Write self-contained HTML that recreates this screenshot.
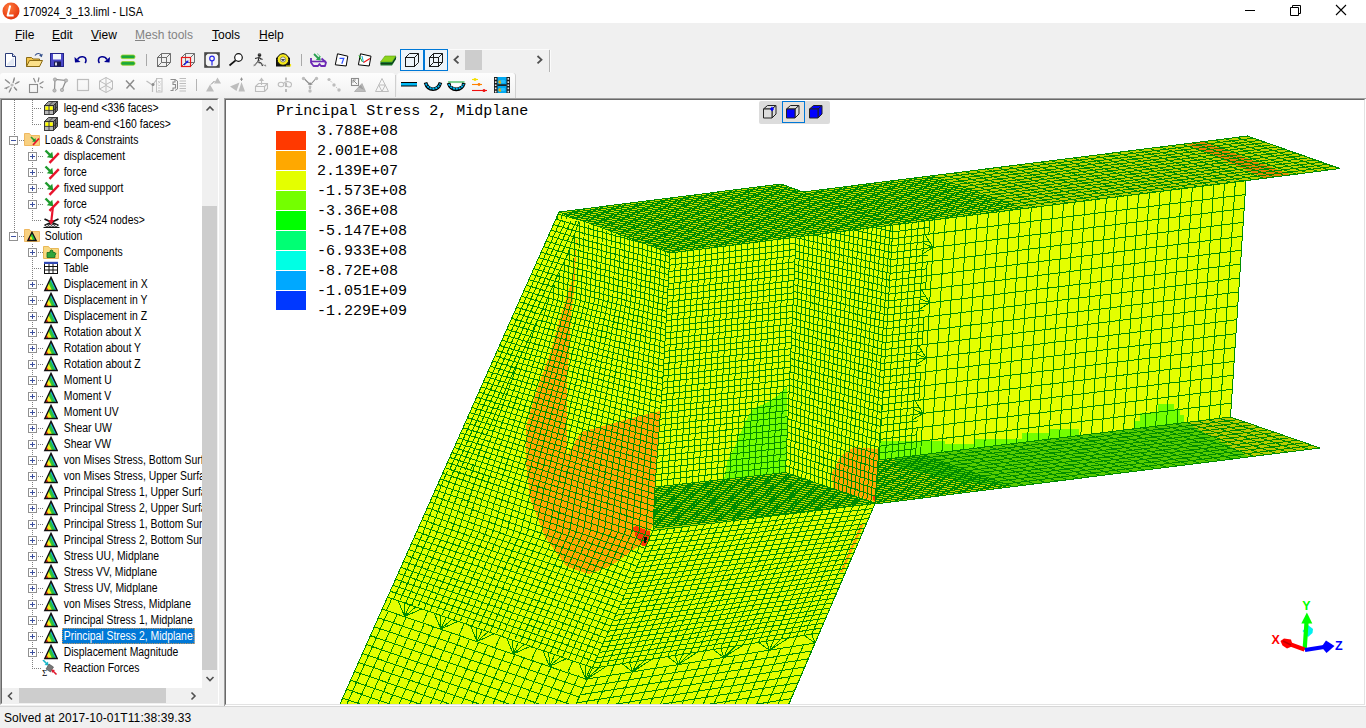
<!DOCTYPE html>
<html><head><meta charset="utf-8"><title>LISA</title><style>
*{box-sizing:border-box}
html,body{margin:0;padding:0;width:1366px;height:728px;overflow:hidden;background:#f0f0f0;font-family:"Liberation Sans",sans-serif;font-size:12px;color:#000}
.abs{position:absolute}
#title{left:0;top:0;width:1366px;height:23px;background:#fff}
#title .tt{left:23px;top:5px;font-size:12px;line-height:14px;white-space:pre;transform:scaleX(.913);transform-origin:0 0}
#menu{left:0;top:23px;width:1366px;height:23px;background:#f0f0f0}
#menu span{position:absolute;top:5px;line-height:14px;font-size:12px;white-space:pre}
#menu u{text-decoration:underline;text-underline-offset:1px}
.tree{left:2px;top:100px;width:200px;height:588px;background:#fff;overflow:hidden}
.row{position:absolute;left:0;height:16px;width:260px}
.row .tx{position:absolute;top:1px;line-height:14px;font-size:12px;white-space:pre;transform:scaleX(.867);transform-origin:0 0;padding:0 2px}
.row .tx.sel{background:#0078d7;color:#fff;outline:1px dotted #e8a050;outline-offset:-1px;top:0;line-height:16px;height:16px}
.dotv{position:absolute;width:1px;background-image:linear-gradient(#808080 50%,transparent 50%);background-size:1px 2px}
.doth{position:absolute;height:1px;background-image:linear-gradient(90deg,#808080 50%,transparent 50%);background-size:2px 1px}
.box{position:absolute;width:9px;height:9px;border:1px solid #919191;background:#fff}
.box:before{content:"";position:absolute;left:1px;top:3px;width:5px;height:1px;background:#3c50a0}
.box.plus:after{content:"";position:absolute;left:3px;top:1px;width:1px;height:5px;background:#3c50a0}
#status{left:0;top:707px;width:1366px;height:21px;background:#f0f0f0}
#status span{position:absolute;left:4px;top:4px;line-height:14px;font-size:12px;white-space:pre;letter-spacing:.08px}
</style></head><body>
<div id="title" class="abs"><svg class="abs" style="left:2px;top:2px" width="18" height="18" viewBox="0 0 18 18"><defs><radialGradient id="lg" cx=".4" cy=".3" r=".8"><stop offset="0" stop-color="#ff7a3a"/><stop offset="1" stop-color="#e02a08"/></radialGradient></defs><circle cx="9" cy="9" r="8.5" fill="url(#lg)"/><path d="M8.2 3.5 L5.6 13.6 H11.6" stroke="#fff" stroke-width="2" fill="none" stroke-linejoin="round"/></svg><span class="abs tt">170924_3_13.liml - LISA</span>
<svg class="abs" style="left:1236px;top:0" width="130" height="23" viewBox="0 0 130 23"><path d="M9 10.5 H19" stroke="#000" stroke-width="1"/><path d="M54.5 7.5 H62.5 V15.5 H54.5Z M56.5 7.5 V5.5 H64.5 V13.5 H62.5" stroke="#000" fill="none"/><path d="M100 5 L110 15 M110 5 L100 15" stroke="#000" stroke-width="1.1"/></svg></div>
<div id="menu" class="abs"><span style="left:15px"><u>F</u>ile</span><span style="left:52px"><u>E</u>dit</span><span style="left:91px"><u>V</u>iew</span><span style="left:135px;color:#838383"><u>M</u>esh tools</span><span style="left:212px"><u>T</u>ools</span><span style="left:259px"><u>H</u>elp</span></div>
<div class="abs" style="left:0px;top:73px;width:395px;height:25px;border-radius:3px 3px 0 0;background:linear-gradient(#fdfdfd,#f6f6f6 60%,#efefef)"></div>
<div class="abs" style="left:397px;top:73px;width:119px;height:25px;border-radius:3px 3px 0 0;background:linear-gradient(#fdfdfd,#f6f6f6 60%,#efefef);border-right:1px solid #d0d0d0"></div>
<div class="abs" style="left:395px;top:75px;width:1px;height:22px;background:#d0d0d0"></div>
<div class="abs" style="left:448px;top:49px;width:101px;height:1px;background:#fbfbfb"></div>
<div class="abs" style="left:549px;top:50px;width:1px;height:22px;background:#b4b4b4"></div><div class="abs" style="left:550px;top:50px;width:1px;height:22px;background:#fbfbfb"></div>
<div class="abs" style="left:465px;top:50px;width:17px;height:20px;background:#cdcdcd"></div>
<div class="abs" style="left:400px;top:49px;width:24px;height:22px;border:1px solid #0078d7;background:#eef4fa"></div>
<div class="abs" style="left:424px;top:49px;width:24px;height:22px;border:1px solid #0078d7;background:#eef4fa"></div>
<svg class="abs" style="left:0;top:46px" width="600" height="52" viewBox="0 46 600 52"><path d="M5.5 53.5 H12.5 L15.5 56.5 V66.5 H5.5Z" fill="#fff" stroke="#2a3c78"/><path d="M12.5 53.5 V56.5 H15.5" fill="#dfe6f5" stroke="#2a3c78"/><path d="M7 64 L14 57 V65.5 H7Z" fill="#d6def0" opacity=".7"/><path d="M26.5 57.5 H31.5 L33 59 H39.5 V66.5 H26.5Z" fill="#f3c44a" stroke="#8a6a14"/><path d="M26.5 66.5 L29.5 60.5 H42.5 L39.5 66.5Z" fill="#fbe08a" stroke="#8a6a14"/><path d="M35 55.5 C37 52.5 40.5 53 41.5 56" fill="none" stroke="#34508c" stroke-width="1.1"/><path d="M42.8 53.8 L41.8 57.3 L39 55.6Z" fill="#34508c"/><rect x="50.5" y="53.5" width="13" height="13" fill="#4a48c8" stroke="#23238a"/><rect x="53" y="54" width="8" height="5.5" fill="#f4f6fc"/><rect x="54" y="61.5" width="7" height="5" fill="#1c1c50"/><rect x="55" y="62.5" width="2" height="3" fill="#d8d8e8"/><path d="M77.5 59.5 C80 55.5 86 56 86 60.5 C86 62 85.5 62.5 85 63" fill="none" stroke="#000090" stroke-width="1.6"/><path d="M74.5 57 L75 62.5 L80.5 62Z" fill="#000090"/><path d="M107 59.5 C104.500 55.5 98.500 56 98.500 60.5 C98.500 62 99 62.5 99.500 63" fill="none" stroke="#000090" stroke-width="1.6"/><path d="M110 57 L109.500 62.5 L104 62Z" fill="#000090"/><rect x="121" y="55" width="14" height="3.6" rx="1.6" fill="#19a83c" stroke="#9ad21e" stroke-width=".8"/><rect x="121" y="61.600" width="14" height="3.6" rx="1.6" fill="#19a83c" stroke="#9ad21e" stroke-width=".8"/><path d="M146.5 54 V66 M301.5 54 V66" stroke="#a8a8a8"/><g fill="none" stroke="#6e6e6e" stroke-width="1"><rect x="157.5" y="57.5" width="9" height="9"/><path d="M157.5 57.5 L161.5 53.5 H170.5 V62.5 L166.5 66.5 M166.5 57.5 L170.5 53.5 M157.5 66.5 L161.5 62.5 H170.5 M161.5 62.5 V53.5"/></g><g fill="none" stroke="#6e6e6e" stroke-width="1"><rect x="181.5" y="57.5" width="9" height="9"/><path d="M181.5 57.5 L185.5 53.5 H194.5 V62.5 L190.5 66.5 M190.5 57.5 L194.5 53.5 M181.5 66.5 L185.5 62.5 H194.5 M185.5 62.5 V53.5"/></g><rect x="181.500" y="57.5" width="9" height="9" fill="none" stroke="#e81818" stroke-width="1.2"/><path d="M184 65 L187.500 61.5" stroke="#1818e8" stroke-width="1.2"/><path d="M188.500 60.5 L185.800 61 L188 63.2Z" fill="#1818e8"/><rect x="205" y="53" width="14" height="14" fill="#f4f4f4" stroke="#484848" stroke-width="1.6"/><path d="M205 53 l3.5 0 l-3.5 3.500z M219 53 l-3.500 0 l3.500 3.500z M205 67 l3.500 0 l-3.500 -3.500z M219 67 l-3.500 0 l3.500 -3.500z" fill="#484848"/><circle cx="212" cy="58.500" r="2.300" fill="none" stroke="#2828e8" stroke-width="1.200"/><path d="M212 61 V65.500" stroke="#2828e8" stroke-width="1.200"/><circle cx="238.500" cy="57.500" r="3.800" fill="#fff" stroke="#111" stroke-width="1.200"/><path d="M235.600 60.400 L229.500 65.500" stroke="#111" stroke-width="1.700"/><g fill="none" stroke="#222" stroke-width="1.100"><circle cx="259.500" cy="55" r="1.300" fill="#222"/><path d="M255 58.500 L259 57.500 L262.500 59.500 M259 57.500 L258 61.500 L261.500 63.500 L262.500 66 M258 61.500 L254.500 65.500"/></g><path d="M257 62 L266 66 M254 66 L262 58" stroke="#8c8c8c" stroke-width=".9"/><path d="M259.500 53 l1.200 1.500 h-2.400z M266.500 66.300 l-2.200 -.2 l1 -1.800z M253.500 66.500 l.3 -2.200 l1.700 1.300z" fill="#8c8c8c"/><path d="M276 66.500 V58 L283 53 L290 58 V66.500Z" fill="#111"/><circle cx="283" cy="59.500" r="5.800" fill="#f4e81c" stroke="#111" stroke-width="1"/><circle cx="283" cy="59.500" r="2.600" fill="#e8e8e8" stroke="#555" stroke-width=".6"/><path d="M280.800 59.200 h4.400 l-2.200 1.800z" fill="#111"/><path d="M286 66 H290.500 V64" stroke="#f4e81c" stroke-width="1.200" fill="none"/><path d="M311 58 V62.500 L313.500 66 H318 L319.500 64 L321 66 H325 L326 62.500 L321.500 58.500" fill="none" stroke="#6c28b4" stroke-width="1.800" stroke-linejoin="round"/><path d="M311 61.500 H326" stroke="#6c28b4" stroke-width="1.600"/><path d="M314 54 L318.500 58.500" stroke="#28a050" stroke-width="1.800"/><path d="M320.800 60.500 L315.800 59.700 L319.800 55.800Z" fill="#28a050"/><path d="M317 53.500 L321 57" stroke="#7ccf9a" stroke-width="1"/><path d="M337.500 53.800 L347.800 56.200 L346.200 66 L335.300 64.800Z" fill="#fff" stroke="#000" stroke-width="1"/><path d="M339.500 58.300 H343.800 L341.800 63.800" fill="none" stroke="#3050ff" stroke-width="1.200"/><path d="M360.500 53.800 L371 56.200 L369.200 66 L358.400 64.800Z" fill="#fff" stroke="#000" stroke-width="1"/><path d="M359 55.500 L362.500 62" stroke="#10a010" stroke-width="1"/><path d="M362 56 L363.500 62.500" stroke="#10b0e0" stroke-width="1"/><path d="M363.500 62.500 L370 58.500" stroke="#f01818" stroke-width="1.100"/><path d="M380.500 62 L385 56 H396 L392 62Z" fill="#8cd41c" stroke="#5c9a10" stroke-width=".6"/><path d="M380.500 62 H392 L396 56 V59.300 L392 65.500 H380.500Z" fill="#1c7a30"/><path d="M380.500 63.700 H392 L396 57.700" stroke="#0c2c10" stroke-width=".9" fill="none"/><g fill="none" stroke="#1a1a1a" stroke-width="1"><rect x="405.500" y="57.500" width="9" height="9"/><path d="M405.500 57.500 L409.500 53.500 H418.500 V62.500 L414.500 66.500 M414.500 57.500 L418.500 53.500"/></g><g fill="none" stroke="#1a1a1a" stroke-width="1"><rect x="429.5" y="57.5" width="9" height="9"/><path d="M429.5 57.5 L433.5 53.5 H442.5 V62.5 L438.5 66.5 M438.5 57.5 L442.5 53.5 M429.5 66.5 L433.5 62.5 H442.5 M433.5 62.5 V53.5"/></g><path d="M458.500 56 L454.500 59.700 L458.500 63.400" fill="none" stroke="#505050" stroke-width="1.800"/><path d="M537.500 56 L541.500 59.700 L537.500 63.400" fill="none" stroke="#505050" stroke-width="1.800"/><g stroke="#8c8c8c" stroke-width="1.200" fill="none"><path d="M5 79.500 L10 83.500 M14.500 77.500 L13 83 M19.500 81.500 L15 84 M4.500 88.500 L9.500 86.500 M9 92.500 L11.500 87.500 M17 90.500 L14 87"/></g><circle cx="12" cy="85" r="1.600" fill="#bdbdbd"/><path d="M6.500 80.700 l2.200 .2 l-1.200 1.700z M19 82 l-1.800 1.500 l-.6 -1.800z M5.500 88 l2 -.1 l-.8 1.500z M9.500 91.500 l.2 -2 l1.400 1z M16.500 90 l-1.800 -.6 l1.400 -1.200z M14.300 78.500 l.4 2 l-1.700 -.6z" fill="#8c8c8c"/><rect x="29.500" y="84.500" width="8" height="8" fill="none" stroke="#8c8c8c" stroke-width="1.100"/><g stroke="#8c8c8c" stroke-width="1.200"><path d="M33.500 78 L35.500 82.500 M39 77.500 L38 82 M43.500 81.500 L39.500 84 M43 88 L40 86.500"/></g><path d="M54.500 90.500 L55 79.500 L66 80.500 L62 90" fill="none" stroke="#8c8c8c" stroke-width="1.200"/><g fill="#bdbdbd" stroke="#8c8c8c" stroke-width=".5"><circle cx="54.500" cy="90.500" r="1.700"/><circle cx="55" cy="79.500" r="1.700"/><circle cx="66" cy="80.500" r="1.700"/><circle cx="62" cy="90" r="1.700"/></g><rect x="77.500" y="79.500" width="11" height="11" fill="none" stroke="#bdbdbd" stroke-width="1.200"/><g fill="none" stroke="#bdbdbd" stroke-width="1"><path d="M106 77.500 L112.500 81 V89 L106 92.500 L99.500 89 V81Z M99.500 81 L106 84.500 L112.500 81 M106 84.500 V92.500 M106 77.500 V85 M99.500 89 L106 85.500 L112.500 89"/></g><path d="M126 80.500 L134.500 89.500 M134 80 L126.500 88.500" stroke="#8c8c8c" stroke-width="1.500" fill="none"/><g fill="none" stroke="#bdbdbd" stroke-width="1.200"><path d="M146.500 81 L152.500 85 V92 M157 79 L153 84.500"/><rect x="156.500" y="78.500" width="5.500" height="13.500" stroke-width=".9"/><path d="M158 81 l2.500 2.500 m0 -2.500 l-2.500 2.500 M158 84.500 l1.300 1.500 l1.300 -1.500 M158 88 h2.500 M158 90.500 h2.500" stroke-width=".7"/></g><circle cx="153" cy="84.500" r="1.500" fill="#8c8c8c"/><path d="M170.500 79.500 H175 V82 H173 V84.500 H175.500 V88 H173 V90.500 H170.500" fill="none" stroke="#8c8c8c" stroke-width="1.100"/><path d="M175 79.500 L177.500 81 V89 L175 90.500" fill="none" stroke="#8c8c8c" stroke-width="1"/><path d="M179.500 78.500 H186 M179.500 81 H186 M179.500 83.500 H186 M179.500 86 H186 M179.500 88.500 H186 M179.500 91 H186" stroke="#bdbdbd" stroke-width="1"/><path d="M196.500 79 V91" stroke="#b4b4b4"/><path d="M206 91.500 L210 84.500 L214 91.500Z M214 83.500 L217.500 77.500 L221 83.500Z" fill="#bdbdbd"/><path d="M211 84.500 L214.500 81" stroke="#8c8c8c" stroke-width="1"/><path d="M230 86.500 L239.500 82.500 L236.500 91Z M238.500 91.500 L241.500 82 L245 91.500Z" fill="#bdbdbd"/><path d="M241.500 77.500 V81 M240 79.200 H243" stroke="#8c8c8c" stroke-width=".9"/><g fill="none" stroke="#bdbdbd" stroke-width="1.100"><path d="M255.500 86.500 H264.500 V91.500 H255.500Z M255.500 86.500 L258.500 83.500 H267.500 V88.500 L264.500 91.500 M264.500 86.500 L267.500 83.500"/><path d="M261.500 85 V79.500"/></g><path d="M259 81 L261.500 77.500 L264 81Z" fill="#bdbdbd"/><g fill="none" stroke="#bdbdbd" stroke-width="1.100"><ellipse cx="281" cy="84.500" rx="2.800" ry="2.200"/><path d="M283.500 83.500 C286 80.500 291.500 81.500 291.500 84.500 C291.500 87.500 288 87.500 287 86"/><path d="M286 77.500 V80.500 M286 83 V87 M286 89 V92" stroke="#8c8c8c"/></g><g stroke="#8c8c8c" stroke-width="1.100" fill="none"><path d="M304.500 79 L309 83.500 M315.500 79 L311.500 83.500 M310 86 V89"/></g><g fill="#bdbdbd"><circle cx="303.500" cy="78.500" r="1.700"/><circle cx="316.500" cy="78.500" r="1.700"/><circle cx="310" cy="91" r="1.700"/><circle cx="310" cy="87" r="1.400"/></g><path d="M310.500 85 l-2.800 -.4 l2.300 -2.300z M310 85 l.4 -2.800 l2.300 2.300z" fill="#8c8c8c"/><g fill="#bdbdbd"><circle cx="329" cy="79.500" r="1.600"/><circle cx="334" cy="85" r="1.700"/><circle cx="339" cy="90" r="1.700"/></g><path d="M330.500 81 l1.500 1.500 M336 87 l1.300 1.300" stroke="#bdbdbd" stroke-width=".8"/><rect x="351.500" y="78.500" width="7" height="7" fill="none" stroke="#8c8c8c" stroke-width="1.100"/><path d="M353 80 L357 84 M353 80 h2.800 M353 80 v2.800" stroke="#8c8c8c" stroke-width="1" fill="none"/><path d="M354.500 91.500 L362 83.500 L365.500 91.500Z" fill="#bdbdbd" stroke="#8c8c8c" stroke-width=".5"/><path d="M358 87 l3 -2 l3 5z" fill="#8c8c8c" opacity=".6"/><path d="M375.500 91.500 L382 78.500 L388.500 91.500Z M378.700 85 H385.300 L382 91.500Z" fill="none" stroke="#bdbdbd" stroke-width="1"/><rect x="401" y="82.500" width="16" height="3.500" fill="#00b8f4"/><path d="M401 82.500 H417 M401 86 H417" stroke="#000" stroke-width="1"/><path d="M425.500 82.500 C428 91.500 438 91.500 440.500 82.500" fill="none" stroke="#000" stroke-width="3.600"/><path d="M425.800 83.500 C428.500 90.500 437.500 90.500 440.200 83.500" fill="none" stroke="#00b8f4" stroke-width="1.800" stroke-dasharray="2.200 .7"/><path d="M448.500 83 C451 91.500 461.500 91.500 464 83" fill="none" stroke="#000" stroke-width="3.600"/><path d="M448.800 84 C451.500 90.500 461 90.500 463.700 84" fill="none" stroke="#00b8f4" stroke-width="1.800" stroke-dasharray="2.200 .7"/><path d="M448 82 H464.500" stroke="#20b040" stroke-width="1.100"/><path d="M451 85 H461.500" stroke="#fff" stroke-width="1.600"/><path d="M472 79.500 H478" stroke="#f4e000" stroke-width="1.100"/><path d="M475 78 v3 M473.500 79.500 h3" stroke="#f4e000" stroke-width="1.500"/><path d="M472 84.500 H482" stroke="#ff8000" stroke-width="1.100"/><circle cx="479" cy="84.500" r="1.400" fill="#ff8000"/><path d="M472 90.500 H487" stroke="#f01010" stroke-width="1.100"/><circle cx="484" cy="90.500" r="1.500" fill="#f01010"/><rect x="494" y="77" width="16" height="16" fill="#1a1a1a"/><rect x="497.500" y="77" width="9" height="16" fill="#00a8f0"/><path d="M495.700 78 v15 M508.300 78 v15" stroke="#e8e8e8" stroke-width="1.600" stroke-dasharray="1.700 1.500"/><rect x="497.500" y="84.300" width="9" height="1.600" fill="#1a1a1a"/><circle cx="500" cy="82" r="1.700" fill="#f4b000"/><circle cx="500" cy="90" r="1.700" fill="#f4b000"/><ellipse cx="503" cy="81.500" rx="2.500" ry="1.800" fill="#28c0ff"/><ellipse cx="503" cy="89.500" rx="2.500" ry="1.800" fill="#28c0ff"/></svg>
<div class="abs" style="left:0;top:98px;width:219px;height:607px;background:#f0f0f0;border-top:1px solid #a0a0a0;border-left:1px solid #a0a0a0;border-bottom:1px solid #fff;border-right:1px solid #fff"></div>
<div class="abs" style="left:1px;top:99px;width:217px;height:605px;background:#fff;border-top:1px solid #696969;border-left:1px solid #696969;border-bottom:1px solid #e3e3e3;border-right:1px solid #e3e3e3"></div>
<div class="abs tree"><div class="dotv" style="left:12px;top:0;height:36px"></div>
<div class="dotv" style="left:12px;top:45px;height:87px"></div>
<div class="dotv" style="left:30px;top:0;height:24px"></div>
<div class="dotv" style="left:30px;top:48px;height:72px"></div>
<div class="dotv" style="left:30px;top:144px;height:424px"></div>
<div class="row" style="top:0px"><div class="doth" style="left:30px;top:8px;width:10px"></div><svg class="abs" style="left:40px;top:0" width="16" height="16" viewBox="0 0 16 16"><path d="M2.500 5.500 L6.500 1.500 H15.500 L11.500 5.500Z" fill="#9a9a9a" stroke="#2a2a2a" stroke-width=".9"/><path d="M11.500 5.500 L15.500 1.500 V10.500 L11.500 14.500Z" fill="#6e6e6e" stroke="#2a2a2a" stroke-width=".9"/><rect x="2.500" y="5.500" width="9" height="9" fill="#b8b8b8" stroke="#2a2a2a" stroke-width=".9"/><rect x="3.400" y="6.400" width="3.300" height="3.600" fill="#ffff00"/><rect x="7.400" y="6.400" width="3.300" height="3.600" fill="#ffff00"/><path d="M7 5.500V14.500M2.500 10.400H11.500M11 1.500 L7 5.500M11.500 10.400 L15.500 6.400M13.500 3.500V12.500" stroke="#2a2a2a" stroke-width=".8" fill="none"/></svg><span class="tx" style="left:60px">leg-end &lt;336 faces&gt;</span></div>
<div class="row" style="top:16px"><div class="doth" style="left:30px;top:8px;width:10px"></div><svg class="abs" style="left:40px;top:0" width="16" height="16" viewBox="0 0 16 16"><path d="M2.500 5.500 L6.500 1.500 H15.500 L11.500 5.500Z" fill="#9a9a9a" stroke="#2a2a2a" stroke-width=".9"/><path d="M11.500 5.500 L15.500 1.500 V10.500 L11.500 14.500Z" fill="#6e6e6e" stroke="#2a2a2a" stroke-width=".9"/><rect x="2.500" y="5.500" width="9" height="9" fill="#b8b8b8" stroke="#2a2a2a" stroke-width=".9"/><rect x="3.400" y="6.400" width="3.300" height="3.600" fill="#ffff00"/><rect x="7.400" y="6.400" width="3.300" height="3.600" fill="#ffff00"/><path d="M7 5.500V14.500M2.500 10.400H11.500M11 1.500 L7 5.500M11.500 10.400 L15.500 6.400M13.500 3.500V12.500" stroke="#2a2a2a" stroke-width=".8" fill="none"/></svg><span class="tx" style="left:60px">beam-end &lt;160 faces&gt;</span></div>
<div class="row" style="top:32px"><div class="doth" style="left:17px;top:8px;width:5px"></div><div class="box minus" style="left:7px;top:4px"></div><svg class="abs" style="left:22px;top:0" width="16" height="16" viewBox="0 0 16 16"><path d="M.5 1.500 H5.500 L7 3.500 H15.500 V13.500 H.5Z" fill="#f8d080" stroke="#efb860"/><path d="M7 5 L10.500 8.500" stroke="#1e9a2c" stroke-width="1.600"/><path d="M12 10 L8 9.500 L11.500 6Z" fill="#1e9a2c"/><path d="M9 13 L15 6.500" stroke="#e8142c" stroke-width="1.800"/></svg><span class="tx" style="left:41px">Loads &amp; Constraints</span></div>
<div class="row" style="top:48px"><div class="doth" style="left:36px;top:8px;width:5px"></div><div class="box plus" style="left:26px;top:4px"></div><svg class="abs" style="left:40px;top:0" width="20" height="16" viewBox="0 0 20 16"><path d="M3.500 2.500 L8.500 7.500" stroke="#1e9a2c" stroke-width="2.400"/><path d="M11.200 10.200 L4.800 9.300 L10.300 3.800Z" fill="#1e9a2c"/><path d="M7.500 14.800 L16.800 5.200" stroke="#e8142c" stroke-width="2.400"/></svg><span class="tx" style="left:60px">displacement</span></div>
<div class="row" style="top:64px"><div class="doth" style="left:36px;top:8px;width:5px"></div><div class="box plus" style="left:26px;top:4px"></div><svg class="abs" style="left:40px;top:0" width="20" height="16" viewBox="0 0 20 16"><path d="M3.500 2.500 L8.500 7.500" stroke="#1e9a2c" stroke-width="2.400"/><path d="M11.200 10.200 L4.800 9.300 L10.300 3.800Z" fill="#1e9a2c"/><path d="M7.500 14.800 L16.800 5.200" stroke="#e8142c" stroke-width="2.400"/></svg><span class="tx" style="left:60px">force</span></div>
<div class="row" style="top:80px"><div class="doth" style="left:36px;top:8px;width:5px"></div><div class="box plus" style="left:26px;top:4px"></div><svg class="abs" style="left:40px;top:0" width="20" height="16" viewBox="0 0 20 16"><path d="M3.500 2.500 L8.500 7.500" stroke="#1e9a2c" stroke-width="2.400"/><path d="M11.200 10.200 L4.800 9.300 L10.300 3.800Z" fill="#1e9a2c"/><path d="M7.500 14.800 L16.800 5.200" stroke="#e8142c" stroke-width="2.400"/></svg><span class="tx" style="left:60px">fixed support</span></div>
<div class="row" style="top:96px"><div class="doth" style="left:36px;top:8px;width:5px"></div><div class="box plus" style="left:26px;top:4px"></div><svg class="abs" style="left:40px;top:0" width="20" height="16" viewBox="0 0 20 16"><path d="M3.500 2.500 L8.500 7.500" stroke="#1e9a2c" stroke-width="2.400"/><path d="M11.200 10.200 L4.800 9.300 L10.300 3.800Z" fill="#1e9a2c"/><path d="M7.500 14.800 L16.800 5.200" stroke="#e8142c" stroke-width="2.400"/></svg><span class="tx" style="left:60px">force</span></div>
<div class="row" style="top:112px"><div class="doth" style="left:30px;top:8px;width:10px"></div><svg class="abs" style="left:40px;top:0;overflow:visible" width="20" height="16" viewBox="0 0 20 16"><path d="M2.500 7 L16.500 13.500 M16.500 7 L2.500 13.500" stroke="#111" stroke-width="1.800"/><path d="M1.500 15.500 H17.500" stroke="#111" stroke-width="1"/><g fill="#fff" stroke="#111" stroke-width=".8"><circle cx="5" cy="13.600" r="1.300"/><circle cx="8" cy="13.600" r="1.300"/><circle cx="11" cy="13.600" r="1.300"/><circle cx="14" cy="13.600" r="1.300"/></g><path d="M10.800 -4 L9.300 9.500" stroke="#e8142c" stroke-width="2.200"/><path d="M6.300 8 H12.300 L9 13Z" fill="#e8142c"/></svg><span class="tx" style="left:60px">roty &lt;524 nodes&gt;</span></div>
<div class="row" style="top:128px"><div class="doth" style="left:17px;top:8px;width:5px"></div><div class="box minus" style="left:7px;top:4px"></div><svg class="abs" style="left:22px;top:0" width="16" height="16" viewBox="0 0 16 16"><path d="M.5 1.500 H5.500 L7 3.500 H15.500 V13.500 H.5Z" fill="#f8d080" stroke="#efb860"/><defs><linearGradient id="sg8" gradientUnits="userSpaceOnUse" x1="4.500" y1="12" x2="10.500" y2="9.200"><stop offset="0" stop-color="#f02848"/><stop offset=".25" stop-color="#f03020"/><stop offset=".35" stop-color="#f0f020"/><stop offset=".55" stop-color="#f0f020"/><stop offset=".65" stop-color="#30c838"/><stop offset=".85" stop-color="#28c040"/><stop offset="1" stop-color="#2090e8"/></linearGradient></defs><path d="M8 4.300 L12.200 12.500 H3.800Z" fill="url(#sg8)" stroke="#111" stroke-width="1.300"/></svg><span class="tx" style="left:41px">Solution</span></div>
<div class="row" style="top:144px"><div class="doth" style="left:36px;top:8px;width:5px"></div><div class="box plus" style="left:26px;top:4px"></div><svg class="abs" style="left:40px;top:0" width="20" height="16" viewBox="0 0 20 16"><path d="M1.500 2.500 H6.500 L8 4.500 H16.500 V14.500 H1.500Z" fill="#f8d880" stroke="#e8b858"/><path d="M5 8.500 H8 V6.800 Q9.500 5.200 11 6.800 V8.500 H13 Q15 10 13 11 V13.500 H5Z" fill="#2fa53c" stroke="#176b20" stroke-width=".8"/></svg><span class="tx" style="left:60px">Components</span></div>
<div class="row" style="top:160px"><div class="doth" style="left:30px;top:8px;width:10px"></div><svg class="abs" style="left:40px;top:0" width="20" height="16" viewBox="0 0 20 16"><rect x="2.500" y="2.500" width="13" height="11" fill="#fff" stroke="#111"/><rect x="2" y="1.800" width="14" height="2.200" fill="#3048b4"/><path d="M2.500 6.500 H15.500 M2.500 10 H15.500 M7 4 V13.500 M11 4 V13.500" stroke="#111" fill="none"/></svg><span class="tx" style="left:60px">Table</span></div>
<div class="row" style="top:176px"><div class="doth" style="left:36px;top:8px;width:5px"></div><div class="box plus" style="left:26px;top:4px"></div><svg class="abs" style="left:40px;top:0" width="16" height="16" viewBox="0 0 16 16"><defs><linearGradient id="tg11" gradientUnits="userSpaceOnUse" x1="3.500" y1="14" x2="12.500" y2="9.700"><stop offset="0" stop-color="#f02848"/><stop offset=".2" stop-color="#f03020"/><stop offset=".3" stop-color="#f8e818"/><stop offset=".52" stop-color="#f0f020"/><stop offset=".62" stop-color="#30c838"/><stop offset=".82" stop-color="#28c040"/><stop offset=".92" stop-color="#20b0e0"/><stop offset="1" stop-color="#2080e8"/></linearGradient></defs><path d="M9 1.400 L15.200 14.500 H2.800Z" fill="url(#tg11)" stroke="#101010" stroke-width="1.400" stroke-linejoin="miter"/></svg><span class="tx" style="left:60px">Displacement in X</span></div>
<div class="row" style="top:192px"><div class="doth" style="left:36px;top:8px;width:5px"></div><div class="box plus" style="left:26px;top:4px"></div><svg class="abs" style="left:40px;top:0" width="16" height="16" viewBox="0 0 16 16"><defs><linearGradient id="tg12" gradientUnits="userSpaceOnUse" x1="3.500" y1="14" x2="12.500" y2="9.700"><stop offset="0" stop-color="#f02848"/><stop offset=".2" stop-color="#f03020"/><stop offset=".3" stop-color="#f8e818"/><stop offset=".52" stop-color="#f0f020"/><stop offset=".62" stop-color="#30c838"/><stop offset=".82" stop-color="#28c040"/><stop offset=".92" stop-color="#20b0e0"/><stop offset="1" stop-color="#2080e8"/></linearGradient></defs><path d="M9 1.400 L15.200 14.500 H2.800Z" fill="url(#tg12)" stroke="#101010" stroke-width="1.400" stroke-linejoin="miter"/></svg><span class="tx" style="left:60px">Displacement in Y</span></div>
<div class="row" style="top:208px"><div class="doth" style="left:36px;top:8px;width:5px"></div><div class="box plus" style="left:26px;top:4px"></div><svg class="abs" style="left:40px;top:0" width="16" height="16" viewBox="0 0 16 16"><defs><linearGradient id="tg13" gradientUnits="userSpaceOnUse" x1="3.500" y1="14" x2="12.500" y2="9.700"><stop offset="0" stop-color="#f02848"/><stop offset=".2" stop-color="#f03020"/><stop offset=".3" stop-color="#f8e818"/><stop offset=".52" stop-color="#f0f020"/><stop offset=".62" stop-color="#30c838"/><stop offset=".82" stop-color="#28c040"/><stop offset=".92" stop-color="#20b0e0"/><stop offset="1" stop-color="#2080e8"/></linearGradient></defs><path d="M9 1.400 L15.200 14.500 H2.800Z" fill="url(#tg13)" stroke="#101010" stroke-width="1.400" stroke-linejoin="miter"/></svg><span class="tx" style="left:60px">Displacement in Z</span></div>
<div class="row" style="top:224px"><div class="doth" style="left:36px;top:8px;width:5px"></div><div class="box plus" style="left:26px;top:4px"></div><svg class="abs" style="left:40px;top:0" width="16" height="16" viewBox="0 0 16 16"><defs><linearGradient id="tg14" gradientUnits="userSpaceOnUse" x1="3.500" y1="14" x2="12.500" y2="9.700"><stop offset="0" stop-color="#f02848"/><stop offset=".2" stop-color="#f03020"/><stop offset=".3" stop-color="#f8e818"/><stop offset=".52" stop-color="#f0f020"/><stop offset=".62" stop-color="#30c838"/><stop offset=".82" stop-color="#28c040"/><stop offset=".92" stop-color="#20b0e0"/><stop offset="1" stop-color="#2080e8"/></linearGradient></defs><path d="M9 1.400 L15.200 14.500 H2.800Z" fill="url(#tg14)" stroke="#101010" stroke-width="1.400" stroke-linejoin="miter"/></svg><span class="tx" style="left:60px">Rotation about X</span></div>
<div class="row" style="top:240px"><div class="doth" style="left:36px;top:8px;width:5px"></div><div class="box plus" style="left:26px;top:4px"></div><svg class="abs" style="left:40px;top:0" width="16" height="16" viewBox="0 0 16 16"><defs><linearGradient id="tg15" gradientUnits="userSpaceOnUse" x1="3.500" y1="14" x2="12.500" y2="9.700"><stop offset="0" stop-color="#f02848"/><stop offset=".2" stop-color="#f03020"/><stop offset=".3" stop-color="#f8e818"/><stop offset=".52" stop-color="#f0f020"/><stop offset=".62" stop-color="#30c838"/><stop offset=".82" stop-color="#28c040"/><stop offset=".92" stop-color="#20b0e0"/><stop offset="1" stop-color="#2080e8"/></linearGradient></defs><path d="M9 1.400 L15.200 14.500 H2.800Z" fill="url(#tg15)" stroke="#101010" stroke-width="1.400" stroke-linejoin="miter"/></svg><span class="tx" style="left:60px">Rotation about Y</span></div>
<div class="row" style="top:256px"><div class="doth" style="left:36px;top:8px;width:5px"></div><div class="box plus" style="left:26px;top:4px"></div><svg class="abs" style="left:40px;top:0" width="16" height="16" viewBox="0 0 16 16"><defs><linearGradient id="tg16" gradientUnits="userSpaceOnUse" x1="3.500" y1="14" x2="12.500" y2="9.700"><stop offset="0" stop-color="#f02848"/><stop offset=".2" stop-color="#f03020"/><stop offset=".3" stop-color="#f8e818"/><stop offset=".52" stop-color="#f0f020"/><stop offset=".62" stop-color="#30c838"/><stop offset=".82" stop-color="#28c040"/><stop offset=".92" stop-color="#20b0e0"/><stop offset="1" stop-color="#2080e8"/></linearGradient></defs><path d="M9 1.400 L15.200 14.500 H2.800Z" fill="url(#tg16)" stroke="#101010" stroke-width="1.400" stroke-linejoin="miter"/></svg><span class="tx" style="left:60px">Rotation about Z</span></div>
<div class="row" style="top:272px"><div class="doth" style="left:36px;top:8px;width:5px"></div><div class="box plus" style="left:26px;top:4px"></div><svg class="abs" style="left:40px;top:0" width="16" height="16" viewBox="0 0 16 16"><defs><linearGradient id="tg17" gradientUnits="userSpaceOnUse" x1="3.500" y1="14" x2="12.500" y2="9.700"><stop offset="0" stop-color="#f02848"/><stop offset=".2" stop-color="#f03020"/><stop offset=".3" stop-color="#f8e818"/><stop offset=".52" stop-color="#f0f020"/><stop offset=".62" stop-color="#30c838"/><stop offset=".82" stop-color="#28c040"/><stop offset=".92" stop-color="#20b0e0"/><stop offset="1" stop-color="#2080e8"/></linearGradient></defs><path d="M9 1.400 L15.200 14.500 H2.800Z" fill="url(#tg17)" stroke="#101010" stroke-width="1.400" stroke-linejoin="miter"/></svg><span class="tx" style="left:60px">Moment U</span></div>
<div class="row" style="top:288px"><div class="doth" style="left:36px;top:8px;width:5px"></div><div class="box plus" style="left:26px;top:4px"></div><svg class="abs" style="left:40px;top:0" width="16" height="16" viewBox="0 0 16 16"><defs><linearGradient id="tg18" gradientUnits="userSpaceOnUse" x1="3.500" y1="14" x2="12.500" y2="9.700"><stop offset="0" stop-color="#f02848"/><stop offset=".2" stop-color="#f03020"/><stop offset=".3" stop-color="#f8e818"/><stop offset=".52" stop-color="#f0f020"/><stop offset=".62" stop-color="#30c838"/><stop offset=".82" stop-color="#28c040"/><stop offset=".92" stop-color="#20b0e0"/><stop offset="1" stop-color="#2080e8"/></linearGradient></defs><path d="M9 1.400 L15.200 14.500 H2.800Z" fill="url(#tg18)" stroke="#101010" stroke-width="1.400" stroke-linejoin="miter"/></svg><span class="tx" style="left:60px">Moment V</span></div>
<div class="row" style="top:304px"><div class="doth" style="left:36px;top:8px;width:5px"></div><div class="box plus" style="left:26px;top:4px"></div><svg class="abs" style="left:40px;top:0" width="16" height="16" viewBox="0 0 16 16"><defs><linearGradient id="tg19" gradientUnits="userSpaceOnUse" x1="3.500" y1="14" x2="12.500" y2="9.700"><stop offset="0" stop-color="#f02848"/><stop offset=".2" stop-color="#f03020"/><stop offset=".3" stop-color="#f8e818"/><stop offset=".52" stop-color="#f0f020"/><stop offset=".62" stop-color="#30c838"/><stop offset=".82" stop-color="#28c040"/><stop offset=".92" stop-color="#20b0e0"/><stop offset="1" stop-color="#2080e8"/></linearGradient></defs><path d="M9 1.400 L15.200 14.500 H2.800Z" fill="url(#tg19)" stroke="#101010" stroke-width="1.400" stroke-linejoin="miter"/></svg><span class="tx" style="left:60px">Moment UV</span></div>
<div class="row" style="top:320px"><div class="doth" style="left:36px;top:8px;width:5px"></div><div class="box plus" style="left:26px;top:4px"></div><svg class="abs" style="left:40px;top:0" width="16" height="16" viewBox="0 0 16 16"><defs><linearGradient id="tg20" gradientUnits="userSpaceOnUse" x1="3.500" y1="14" x2="12.500" y2="9.700"><stop offset="0" stop-color="#f02848"/><stop offset=".2" stop-color="#f03020"/><stop offset=".3" stop-color="#f8e818"/><stop offset=".52" stop-color="#f0f020"/><stop offset=".62" stop-color="#30c838"/><stop offset=".82" stop-color="#28c040"/><stop offset=".92" stop-color="#20b0e0"/><stop offset="1" stop-color="#2080e8"/></linearGradient></defs><path d="M9 1.400 L15.200 14.500 H2.800Z" fill="url(#tg20)" stroke="#101010" stroke-width="1.400" stroke-linejoin="miter"/></svg><span class="tx" style="left:60px">Shear UW</span></div>
<div class="row" style="top:336px"><div class="doth" style="left:36px;top:8px;width:5px"></div><div class="box plus" style="left:26px;top:4px"></div><svg class="abs" style="left:40px;top:0" width="16" height="16" viewBox="0 0 16 16"><defs><linearGradient id="tg21" gradientUnits="userSpaceOnUse" x1="3.500" y1="14" x2="12.500" y2="9.700"><stop offset="0" stop-color="#f02848"/><stop offset=".2" stop-color="#f03020"/><stop offset=".3" stop-color="#f8e818"/><stop offset=".52" stop-color="#f0f020"/><stop offset=".62" stop-color="#30c838"/><stop offset=".82" stop-color="#28c040"/><stop offset=".92" stop-color="#20b0e0"/><stop offset="1" stop-color="#2080e8"/></linearGradient></defs><path d="M9 1.400 L15.200 14.500 H2.800Z" fill="url(#tg21)" stroke="#101010" stroke-width="1.400" stroke-linejoin="miter"/></svg><span class="tx" style="left:60px">Shear VW</span></div>
<div class="row" style="top:352px"><div class="doth" style="left:36px;top:8px;width:5px"></div><div class="box plus" style="left:26px;top:4px"></div><svg class="abs" style="left:40px;top:0" width="16" height="16" viewBox="0 0 16 16"><defs><linearGradient id="tg22" gradientUnits="userSpaceOnUse" x1="3.500" y1="14" x2="12.500" y2="9.700"><stop offset="0" stop-color="#f02848"/><stop offset=".2" stop-color="#f03020"/><stop offset=".3" stop-color="#f8e818"/><stop offset=".52" stop-color="#f0f020"/><stop offset=".62" stop-color="#30c838"/><stop offset=".82" stop-color="#28c040"/><stop offset=".92" stop-color="#20b0e0"/><stop offset="1" stop-color="#2080e8"/></linearGradient></defs><path d="M9 1.400 L15.200 14.500 H2.800Z" fill="url(#tg22)" stroke="#101010" stroke-width="1.400" stroke-linejoin="miter"/></svg><span class="tx" style="left:60px">von Mises Stress, Bottom Surface</span></div>
<div class="row" style="top:368px"><div class="doth" style="left:36px;top:8px;width:5px"></div><div class="box plus" style="left:26px;top:4px"></div><svg class="abs" style="left:40px;top:0" width="16" height="16" viewBox="0 0 16 16"><defs><linearGradient id="tg23" gradientUnits="userSpaceOnUse" x1="3.500" y1="14" x2="12.500" y2="9.700"><stop offset="0" stop-color="#f02848"/><stop offset=".2" stop-color="#f03020"/><stop offset=".3" stop-color="#f8e818"/><stop offset=".52" stop-color="#f0f020"/><stop offset=".62" stop-color="#30c838"/><stop offset=".82" stop-color="#28c040"/><stop offset=".92" stop-color="#20b0e0"/><stop offset="1" stop-color="#2080e8"/></linearGradient></defs><path d="M9 1.400 L15.200 14.500 H2.800Z" fill="url(#tg23)" stroke="#101010" stroke-width="1.400" stroke-linejoin="miter"/></svg><span class="tx" style="left:60px">von Mises Stress, Upper Surface</span></div>
<div class="row" style="top:384px"><div class="doth" style="left:36px;top:8px;width:5px"></div><div class="box plus" style="left:26px;top:4px"></div><svg class="abs" style="left:40px;top:0" width="16" height="16" viewBox="0 0 16 16"><defs><linearGradient id="tg24" gradientUnits="userSpaceOnUse" x1="3.500" y1="14" x2="12.500" y2="9.700"><stop offset="0" stop-color="#f02848"/><stop offset=".2" stop-color="#f03020"/><stop offset=".3" stop-color="#f8e818"/><stop offset=".52" stop-color="#f0f020"/><stop offset=".62" stop-color="#30c838"/><stop offset=".82" stop-color="#28c040"/><stop offset=".92" stop-color="#20b0e0"/><stop offset="1" stop-color="#2080e8"/></linearGradient></defs><path d="M9 1.400 L15.200 14.500 H2.800Z" fill="url(#tg24)" stroke="#101010" stroke-width="1.400" stroke-linejoin="miter"/></svg><span class="tx" style="left:60px">Principal Stress 1, Upper Surface</span></div>
<div class="row" style="top:400px"><div class="doth" style="left:36px;top:8px;width:5px"></div><div class="box plus" style="left:26px;top:4px"></div><svg class="abs" style="left:40px;top:0" width="16" height="16" viewBox="0 0 16 16"><defs><linearGradient id="tg25" gradientUnits="userSpaceOnUse" x1="3.500" y1="14" x2="12.500" y2="9.700"><stop offset="0" stop-color="#f02848"/><stop offset=".2" stop-color="#f03020"/><stop offset=".3" stop-color="#f8e818"/><stop offset=".52" stop-color="#f0f020"/><stop offset=".62" stop-color="#30c838"/><stop offset=".82" stop-color="#28c040"/><stop offset=".92" stop-color="#20b0e0"/><stop offset="1" stop-color="#2080e8"/></linearGradient></defs><path d="M9 1.400 L15.200 14.500 H2.800Z" fill="url(#tg25)" stroke="#101010" stroke-width="1.400" stroke-linejoin="miter"/></svg><span class="tx" style="left:60px">Principal Stress 2, Upper Surface</span></div>
<div class="row" style="top:416px"><div class="doth" style="left:36px;top:8px;width:5px"></div><div class="box plus" style="left:26px;top:4px"></div><svg class="abs" style="left:40px;top:0" width="16" height="16" viewBox="0 0 16 16"><defs><linearGradient id="tg26" gradientUnits="userSpaceOnUse" x1="3.500" y1="14" x2="12.500" y2="9.700"><stop offset="0" stop-color="#f02848"/><stop offset=".2" stop-color="#f03020"/><stop offset=".3" stop-color="#f8e818"/><stop offset=".52" stop-color="#f0f020"/><stop offset=".62" stop-color="#30c838"/><stop offset=".82" stop-color="#28c040"/><stop offset=".92" stop-color="#20b0e0"/><stop offset="1" stop-color="#2080e8"/></linearGradient></defs><path d="M9 1.400 L15.200 14.500 H2.800Z" fill="url(#tg26)" stroke="#101010" stroke-width="1.400" stroke-linejoin="miter"/></svg><span class="tx" style="left:60px">Principal Stress 1, Bottom Surface</span></div>
<div class="row" style="top:432px"><div class="doth" style="left:36px;top:8px;width:5px"></div><div class="box plus" style="left:26px;top:4px"></div><svg class="abs" style="left:40px;top:0" width="16" height="16" viewBox="0 0 16 16"><defs><linearGradient id="tg27" gradientUnits="userSpaceOnUse" x1="3.500" y1="14" x2="12.500" y2="9.700"><stop offset="0" stop-color="#f02848"/><stop offset=".2" stop-color="#f03020"/><stop offset=".3" stop-color="#f8e818"/><stop offset=".52" stop-color="#f0f020"/><stop offset=".62" stop-color="#30c838"/><stop offset=".82" stop-color="#28c040"/><stop offset=".92" stop-color="#20b0e0"/><stop offset="1" stop-color="#2080e8"/></linearGradient></defs><path d="M9 1.400 L15.200 14.500 H2.800Z" fill="url(#tg27)" stroke="#101010" stroke-width="1.400" stroke-linejoin="miter"/></svg><span class="tx" style="left:60px">Principal Stress 2, Bottom Surface</span></div>
<div class="row" style="top:448px"><div class="doth" style="left:36px;top:8px;width:5px"></div><div class="box plus" style="left:26px;top:4px"></div><svg class="abs" style="left:40px;top:0" width="16" height="16" viewBox="0 0 16 16"><defs><linearGradient id="tg28" gradientUnits="userSpaceOnUse" x1="3.500" y1="14" x2="12.500" y2="9.700"><stop offset="0" stop-color="#f02848"/><stop offset=".2" stop-color="#f03020"/><stop offset=".3" stop-color="#f8e818"/><stop offset=".52" stop-color="#f0f020"/><stop offset=".62" stop-color="#30c838"/><stop offset=".82" stop-color="#28c040"/><stop offset=".92" stop-color="#20b0e0"/><stop offset="1" stop-color="#2080e8"/></linearGradient></defs><path d="M9 1.400 L15.200 14.500 H2.800Z" fill="url(#tg28)" stroke="#101010" stroke-width="1.400" stroke-linejoin="miter"/></svg><span class="tx" style="left:60px">Stress UU, Midplane</span></div>
<div class="row" style="top:464px"><div class="doth" style="left:36px;top:8px;width:5px"></div><div class="box plus" style="left:26px;top:4px"></div><svg class="abs" style="left:40px;top:0" width="16" height="16" viewBox="0 0 16 16"><defs><linearGradient id="tg29" gradientUnits="userSpaceOnUse" x1="3.500" y1="14" x2="12.500" y2="9.700"><stop offset="0" stop-color="#f02848"/><stop offset=".2" stop-color="#f03020"/><stop offset=".3" stop-color="#f8e818"/><stop offset=".52" stop-color="#f0f020"/><stop offset=".62" stop-color="#30c838"/><stop offset=".82" stop-color="#28c040"/><stop offset=".92" stop-color="#20b0e0"/><stop offset="1" stop-color="#2080e8"/></linearGradient></defs><path d="M9 1.400 L15.200 14.500 H2.800Z" fill="url(#tg29)" stroke="#101010" stroke-width="1.400" stroke-linejoin="miter"/></svg><span class="tx" style="left:60px">Stress VV, Midplane</span></div>
<div class="row" style="top:480px"><div class="doth" style="left:36px;top:8px;width:5px"></div><div class="box plus" style="left:26px;top:4px"></div><svg class="abs" style="left:40px;top:0" width="16" height="16" viewBox="0 0 16 16"><defs><linearGradient id="tg30" gradientUnits="userSpaceOnUse" x1="3.500" y1="14" x2="12.500" y2="9.700"><stop offset="0" stop-color="#f02848"/><stop offset=".2" stop-color="#f03020"/><stop offset=".3" stop-color="#f8e818"/><stop offset=".52" stop-color="#f0f020"/><stop offset=".62" stop-color="#30c838"/><stop offset=".82" stop-color="#28c040"/><stop offset=".92" stop-color="#20b0e0"/><stop offset="1" stop-color="#2080e8"/></linearGradient></defs><path d="M9 1.400 L15.200 14.500 H2.800Z" fill="url(#tg30)" stroke="#101010" stroke-width="1.400" stroke-linejoin="miter"/></svg><span class="tx" style="left:60px">Stress UV, Midplane</span></div>
<div class="row" style="top:496px"><div class="doth" style="left:36px;top:8px;width:5px"></div><div class="box plus" style="left:26px;top:4px"></div><svg class="abs" style="left:40px;top:0" width="16" height="16" viewBox="0 0 16 16"><defs><linearGradient id="tg31" gradientUnits="userSpaceOnUse" x1="3.500" y1="14" x2="12.500" y2="9.700"><stop offset="0" stop-color="#f02848"/><stop offset=".2" stop-color="#f03020"/><stop offset=".3" stop-color="#f8e818"/><stop offset=".52" stop-color="#f0f020"/><stop offset=".62" stop-color="#30c838"/><stop offset=".82" stop-color="#28c040"/><stop offset=".92" stop-color="#20b0e0"/><stop offset="1" stop-color="#2080e8"/></linearGradient></defs><path d="M9 1.400 L15.200 14.500 H2.800Z" fill="url(#tg31)" stroke="#101010" stroke-width="1.400" stroke-linejoin="miter"/></svg><span class="tx" style="left:60px">von Mises Stress, Midplane</span></div>
<div class="row" style="top:512px"><div class="doth" style="left:36px;top:8px;width:5px"></div><div class="box plus" style="left:26px;top:4px"></div><svg class="abs" style="left:40px;top:0" width="16" height="16" viewBox="0 0 16 16"><defs><linearGradient id="tg32" gradientUnits="userSpaceOnUse" x1="3.500" y1="14" x2="12.500" y2="9.700"><stop offset="0" stop-color="#f02848"/><stop offset=".2" stop-color="#f03020"/><stop offset=".3" stop-color="#f8e818"/><stop offset=".52" stop-color="#f0f020"/><stop offset=".62" stop-color="#30c838"/><stop offset=".82" stop-color="#28c040"/><stop offset=".92" stop-color="#20b0e0"/><stop offset="1" stop-color="#2080e8"/></linearGradient></defs><path d="M9 1.400 L15.200 14.500 H2.800Z" fill="url(#tg32)" stroke="#101010" stroke-width="1.400" stroke-linejoin="miter"/></svg><span class="tx" style="left:60px">Principal Stress 1, Midplane</span></div>
<div class="row" style="top:528px"><div class="doth" style="left:36px;top:8px;width:5px"></div><div class="box plus" style="left:26px;top:4px"></div><svg class="abs" style="left:40px;top:0" width="16" height="16" viewBox="0 0 16 16"><defs><linearGradient id="tg33" gradientUnits="userSpaceOnUse" x1="3.500" y1="14" x2="12.500" y2="9.700"><stop offset="0" stop-color="#f02848"/><stop offset=".2" stop-color="#f03020"/><stop offset=".3" stop-color="#f8e818"/><stop offset=".52" stop-color="#f0f020"/><stop offset=".62" stop-color="#30c838"/><stop offset=".82" stop-color="#28c040"/><stop offset=".92" stop-color="#20b0e0"/><stop offset="1" stop-color="#2080e8"/></linearGradient></defs><path d="M9 1.400 L15.200 14.500 H2.800Z" fill="url(#tg33)" stroke="#101010" stroke-width="1.400" stroke-linejoin="miter"/></svg><span class="tx sel" style="left:60px">Principal Stress 2, Midplane</span></div>
<div class="row" style="top:544px"><div class="doth" style="left:36px;top:8px;width:5px"></div><div class="box plus" style="left:26px;top:4px"></div><svg class="abs" style="left:40px;top:0" width="16" height="16" viewBox="0 0 16 16"><defs><linearGradient id="tg34" gradientUnits="userSpaceOnUse" x1="3.500" y1="14" x2="12.500" y2="9.700"><stop offset="0" stop-color="#f02848"/><stop offset=".2" stop-color="#f03020"/><stop offset=".3" stop-color="#f8e818"/><stop offset=".52" stop-color="#f0f020"/><stop offset=".62" stop-color="#30c838"/><stop offset=".82" stop-color="#28c040"/><stop offset=".92" stop-color="#20b0e0"/><stop offset="1" stop-color="#2080e8"/></linearGradient></defs><path d="M9 1.400 L15.200 14.500 H2.800Z" fill="url(#tg34)" stroke="#101010" stroke-width="1.400" stroke-linejoin="miter"/></svg><span class="tx" style="left:60px">Displacement Magnitude</span></div>
<div class="row" style="top:560px"><div class="doth" style="left:30px;top:8px;width:10px"></div><svg class="abs" style="left:40px;top:0" width="16" height="16" viewBox="0 0 16 16"><path d="M1 0 L5 4" stroke="#19b5c8" stroke-width="1.6"/><path d="M6.5 5.5 L2.5 5 L6 1.5Z" fill="#19b5c8"/><path d="M7 4 L11.5 7 L8.5 12 L4 9Z" fill="#777" stroke="#444" stroke-width=".6"/><path d="M14.5 14.5 L11 11" stroke="#e0182d" stroke-width="1.6"/><path d="M9.5 9.5 L13 10 L10 13Z" fill="#e0182d"/><text x="0" y="15.5" font-size="9" font-family="Liberation Serif" fill="#000">&#931;</text></svg><span class="tx" style="left:60px">Reaction Forces</span></div></div>
<div class="abs" style="left:202px;top:100px;width:16px;height:588px;background:#f0f0f0"></div>
<div class="abs" style="left:202px;top:206px;width:15px;height:464px;background:#cdcdcd"></div>
<svg class="abs" style="left:202px;top:100px" width="16" height="17" viewBox="0 0 16 17"><path d="M4.5 10.5 L8 7 L11.5 10.5" stroke="#505050" stroke-width="1.6" fill="none"/></svg>
<svg class="abs" style="left:202px;top:671px" width="16" height="17" viewBox="0 0 16 17"><path d="M4.5 6 L8 9.5 L11.5 6" stroke="#505050" stroke-width="1.6" fill="none"/></svg>
<div class="abs" style="left:2px;top:688px;width:216px;height:16px;background:#f0f0f0"></div>
<div class="abs" style="left:19px;top:688px;width:147px;height:15px;background:#cdcdcd"></div>
<svg class="abs" style="left:2px;top:688px" width="17" height="16" viewBox="0 0 17 16"><path d="M10 4.5 L6.5 8 L10 11.5" stroke="#505050" stroke-width="1.6" fill="none"/></svg>
<svg class="abs" style="left:185px;top:688px" width="17" height="16" viewBox="0 0 17 16"><path d="M6.5 4.5 L10 8 L6.5 11.5" stroke="#505050" stroke-width="1.6" fill="none"/></svg>
<div class="abs" style="left:224px;top:98px;width:1142px;height:608px;background:#fff;border-top:1px solid #a0a0a0;border-left:1px solid #a0a0a0"></div>
<div class="abs" style="left:225px;top:99px;width:1140px;height:606px;background:#fff;border-top:1px solid #696969;border-left:1px solid #696969;border-bottom:1px solid #e3e3e3;border-right:1px solid #e3e3e3"></div>
<svg class="abs" style="left:226px;top:100px" width="1138" height="604" viewBox="226 100 1138 604"><defs><clipPath id="cL1"><polygon points="559,212 670,253 662.8,380 655,487 653,530.5 587,680 576,704 340,704"/></clipPath><clipPath id="cL2"><polygon points="653,530.5 875,503.5 789,704 576,704 587,680"/></clipPath><clipPath id="cK"><polygon points="655,487 785.5,472.5 875,503.5 653,530.5"/></clipPath><clipPath id="cA"><polygon points="670,253 796,237 785.5,472.5 655,487 662.8,380"/></clipPath><clipPath id="cB"><polygon points="796,237 893,225 879,460 875,503 785.5,472.5"/></clipPath><clipPath id="cW"><polygon points="893,225 1246,180.7 1230.5,417 879,460"/></clipPath><clipPath id="cBF"><polygon points="879,460 1230.5,417 1320,448 875,504"/></clipPath><clipPath id="cT"><polygon points="559,212 781,184 803,192 1247.5,136 1340,168.5 1246,180.7 893,225 670,253"/></clipPath></defs><g shape-rendering="crispEdges"><g clip-path="url(#cL1)"><polygon points="559,212 670,253 662.8,380 655,487 653,530.5 587,680 576,704 340,704" fill="#e4ff00"/><polygon points="577,236 574,291 571,315 569,354 567,380 567,455 581,432 640,416 664,410 664,490 654,522 647,540 636,548 611,566 589,574 567,567 545,537 530,498 526,462 526,427 536,392 550,354 561,315 572,280" fill="#ffa800"/><polygon points="632,527.5 637,526 641,528 650,531.5 650,538 647,547 642,546 640,541 636,538 635,533" fill="#ff3900"/><path d="M667.3 204L667.2 207L667.1 210L666.9 213L666.8 216L666.7 219L666.6 222L666.5 225L666.4 228L666.3 231L666.2 234L666 237L665.9 240L665.8 243L665.7 246L665.6 249L665.5 252L665.3 255L665.2 258L665 261L664.8 264L664.6 267L664.5 270L664.3 273L664.1 276L664 279L663.8 282L663.6 285L663.5 288L663.3 291L663.1 294L662.9 297L662.8 300L662.6 303L662.4 306L662.2 309L662 312L661.8 315L661.6 318L661.4 321L661.2 324L661 327L660.8 330L660.6 333L660.4 336L660.2 339L660 342L659.8 345L659.6 348L659.4 351L659.2 354L659 357L658.8 360L658.6 363L658.4 366L658.1 369L657.9 372L657.7 375L657.5 378L657.3 381L657.1 384L656.8 387L656.6 390L656.3 393L656.1 396L655.8 399L655.6 402L655.3 405L655.1 408L654.8 411L654.6 414L654.3 417L654.1 420L653.8 423L653.6 426L653.3 429L653.1 432L652.8 435L652.6 438L652.3 441L652.1 444L651.8 447L651.6 450L651.3 453L651.1 456L650.8 459L650.6 462L650.3 465L650.1 468L649.8 471L649.6 474L649.3 477L649.1 480L648.8 483L648.6 486L648.4 489L648.2 492L648.1 495L647.9 498L647.7 501L647.6 504L647.4 507L647.2 510L647.1 513L646.9 516L646.7 519L646.6 522L646.4 525L646.2 528L646.1 531L644.9 534L643.6 537L642.3 540L640.9 543L639.6 546L638.3 549L636.9 552L635.6 555L634.3 558L632.9 561L631.6 564L630.3 567L628.9 570L627.6 573L626.3 576L624.9 579L623.6 582L622.3 585L620.9 588L619.6 591L618.3 594L616.9 597L615.6 600L614.3 603L612.9 606L611.6 609L610.3 612L608.9 615L607.6 618L606.3 621L604.9 624L603.6 627L602.3 630L600.9 633L599.6 636L598.3 639L596.9 642L595.6 645L594.3 648L592.9 651L591.6 654L590.3 657L588.9 660L587.6 663L586.3 666M662.7 204L662.6 207L662.5 210L662.4 213L662.3 216L662.2 219L662 222L661.9 225L661.8 228L661.7 231L661.6 234L661.5 237L661.4 240L661.3 243L661.1 246L661 249L660.9 252L660.8 255L660.6 258L660.4 261L660.3 264L660.1 267L659.9 270L659.7 273L659.6 276L659.4 279L659.2 282L659.1 285L658.9 288L658.7 291L658.6 294L658.4 297L658.2 300L658 303L657.8 306L657.5 309L657.3 312L657.1 315L656.8 318L656.6 321L656.4 324L656.1 327L655.9 330L655.7 333L655.4 336L655.2 339L655 342L654.7 345L654.5 348L654.3 351L654 354L653.8 357L653.6 360L653.3 363L653.1 366L652.9 369L652.6 372L652.4 375L652.2 378L651.9 381L651.7 384L651.4 387L651.1 390L650.8 393L650.5 396L650.2 399L650 402L649.7 405L649.4 408L649.1 411L648.8 414L648.6 417L648.3 420L648 423L647.7 426L647.4 429L647.2 432L646.9 435L646.6 438L646.3 441L646 444L645.8 447L645.5 450L645.2 453L644.9 456L644.6 459L644.4 462L644.1 465L643.8 468L643.5 471L643.2 474L642.9 477L642.7 480L642.4 483L642.1 486L641.9 489L641.7 492L641.5 495L641.3 498L641.1 501L640.9 504L640.7 507L640.5 510L640.3 513L640.1 516L639.9 519L639.7 522L639.5 525L639.3 528L639.1 531L638 534L636.7 537L635.3 540L634 543L632.7 546L631.3 549L630 552L628.7 555L627.3 558L626 561L624.7 564L623.3 567L622 570L620.7 573L619.3 576L618 579L616.7 582L615.3 585L614 588L612.7 591L611.3 594L610 597L608.7 600L607.3 603L606 606L604.7 609L603.3 612L602 615L600.7 618L599.3 621L598 624L596.7 627L595.3 630L594 633L592.7 636L591.3 639L590 642L588.7 645L587.3 648L586 651L584.7 654L583.3 657L582 660L580.7 663M658.2 204L658.1 207L657.9 210L657.8 213L657.7 216L657.6 219L657.5 222L657.4 225L657.3 228L657.2 231L657 234L656.9 237L656.8 240L656.7 243L656.6 246L656.5 249L656.4 252L656.2 255L656 258L655.9 261L655.7 264L655.5 267L655.4 270L655.2 273L655 276L654.8 279L654.7 282L654.5 285L654.3 288L654.2 291L654 294L653.8 297L653.7 300L653.4 303L653.1 306L652.9 309L652.6 312L652.3 315L652.1 318L651.8 321L651.5 324L651.3 327L651 330L650.8 333L650.5 336L650.2 339L650 342L649.7 345L649.4 348L649.2 351L648.9 354L648.7 357L648.4 360L648.1 363L647.9 366L647.6 369L647.3 372L647.1 375L646.8 378L646.5 381L646.2 384L645.9 387L645.6 390L645.3 393L645 396L644.7 399L644.4 402L644 405L643.7 408L643.4 411L643.1 414L642.8 417L642.5 420L642.2 423L641.9 426L641.5 429L641.2 432L640.9 435L640.6 438L640.3 441L640 444L639.7 447L639.4 450L639 453L638.7 456L638.4 459L638.1 462L637.8 465L637.5 468L637.2 471L636.9 474L636.6 477L636.2 480L635.9 483L635.6 486L635.4 489L635.1 492L634.9 495L634.7 498L634.5 501L634.2 504L634 507L633.8 510L633.5 513L633.3 516L633.1 519L632.9 522L632.6 525L632.4 528L632.2 531L631 534L629.7 537L628.4 540L627 543L625.7 546L624.4 549L623 552L621.7 555L620.4 558L619 561L617.7 564L616.4 567L615 570L613.7 573L612.4 576L611 579L609.7 582L608.4 585L607 588L605.7 591L604.4 594L603 597L601.7 600L600.4 603L599 606L597.7 609L596.4 612L595 615L593.7 618L592.4 621L591 624L589.7 627L588.4 630L587 633L585.7 636L584.4 639L583 642L581.7 645L580.4 648L579 651L577.7 654L576.4 657L575 660M653.6 204L653.5 207L653.4 210L653.3 213L653.2 216L653 219L652.9 222L652.8 225L652.7 228L652.6 231L652.5 234L652.4 237L652.3 240L652.1 243L652 246L651.9 249L651.8 252L651.6 255L651.5 258L651.3 261L651.1 264L651 267L650.8 270L650.6 273L650.5 276L650.3 279L650.1 282L649.9 285L649.8 288L649.6 291L649.4 294L649.3 297L649.1 300L648.8 303L648.5 306L648.2 309L647.9 312L647.6 315L647.3 318L647 321L646.7 324L646.4 327L646.2 330L645.9 333L645.6 336L645.3 339L645 342L644.7 345L644.4 348L644.1 351L643.8 354L643.5 357L643.2 360L642.9 363L642.6 366L642.3 369L642 372L641.7 375L641.4 378L641.1 381L640.8 384L640.4 387L640.1 390L639.8 393L639.4 396L639.1 399L638.7 402L638.4 405L638 408L637.7 411L637.4 414L637 417L636.7 420L636.3 423L636 426L635.6 429L635.3 432L635 435L634.6 438L634.3 441L633.9 444L633.6 447L633.2 450L632.9 453L632.6 456L632.2 459L631.9 462L631.5 465L631.2 468L630.8 471L630.5 474L630.2 477L629.8 480L629.5 483L629.1 486L628.8 489L628.6 492L628.3 495L628.1 498L627.8 501L627.6 504L627.3 507L627 510L626.8 513L626.5 516L626.3 519L626 522L625.7 525L625.5 528L625.2 531L624.1 534L622.8 537L621.4 540L620.1 543L618.8 546L617.4 549L616.1 552L614.8 555L613.4 558L612.1 561L610.8 564L609.4 567L608.1 570L606.8 573L605.4 576L604.1 579L602.8 582L601.4 585L600.1 588L598.8 591L597.4 594L596.1 597L594.8 600L593.4 603L592.1 606L590.8 609L589.4 612L588.1 615L586.8 618L585.4 621L584.1 624L582.8 627L581.4 630L580.1 633L578.8 636L577.4 639L576.1 642L574.8 645L573.4 648L572.1 651L570.8 654L569.4 657L568.1 660M649 204L648.9 207L648.8 210L648.7 213L648.6 216L648.5 219L648.4 222L648.3 225L648.1 228L648 231L647.9 234L647.8 237L647.7 240L647.6 243L647.5 246L647.4 249L647.2 252L647.1 255L646.9 258L646.7 261L646.6 264L646.4 267L646.2 270L646.1 273L645.9 276L645.7 279L645.6 282L645.4 285L645.2 288L645 291L644.9 294L644.7 297L644.5 300L644.2 303L643.9 306L643.6 309L643.2 312L642.9 315L642.6 318L642.3 321L641.9 324L641.6 327L641.3 330L641 333L640.6 336L640.3 339L640 342L639.7 345L639.3 348L639 351L638.7 354L638.4 357L638 360L637.7 363L637.4 366L637.1 369L636.7 372L636.4 375L636.1 378L635.7 381L635.4 384L635 387L634.6 390L634.2 393L633.9 396L633.5 399L633.1 402L632.7 405L632.4 408L632 411L631.6 414L631.3 417L630.9 420L630.5 423L630.1 426L629.8 429L629.4 432L629 435L628.6 438L628.3 441L627.9 444L627.5 447L627.1 450L626.8 453L626.4 456L626 459L625.6 462L625.3 465L624.9 468L624.5 471L624.1 474L623.8 477L623.4 480L623 483L622.7 486L622.3 489L622 492L621.8 495L621.5 498L621.2 501L620.9 504L620.6 507L620.3 510L620 513L619.7 516L619.4 519L619.1 522L618.9 525L618.6 528L618.3 531L617.1 534L615.8 537L614.5 540L613.1 543L611.8 546L610.5 549L609.1 552L607.8 555L606.5 558L605.1 561L603.8 564L602.5 567L601.1 570L599.8 573L598.5 576L597.1 579L595.8 582L594.5 585L593.1 588L591.8 591L590.5 594L589.1 597L587.8 600L586.5 603L585.1 606L583.8 609L582.5 612L581.1 615L579.8 618L578.5 621L577.1 624L575.8 627L574.5 630L573.1 633L571.8 636L570.5 639L569.1 642L567.8 645L566.5 648L565.1 651L563.8 654L562.5 657M644.5 204L644.4 207L644.3 210L644.1 213L644 216L643.9 219L643.8 222L643.7 225L643.6 228L643.5 231L643.4 234L643.2 237L643.1 240L643 243L642.9 246L642.8 249L642.7 252L642.5 255L642.4 258L642.2 261L642 264L641.8 267L641.7 270L641.5 273L641.3 276L641.2 279L641 282L640.8 285L640.7 288L640.5 291L640.3 294L640.1 297L640 300L639.6 303L639.3 306L638.9 309L638.6 312L638.2 315L637.8 318L637.5 321L637.1 324L636.8 327L636.4 330L636.1 333L635.7 336L635.3 339L635 342L634.6 345L634.3 348L633.9 351L633.6 354L633.2 357L632.8 360L632.5 363L632.1 366L631.8 369L631.4 372L631.1 375L630.7 378L630.3 381L629.9 384L629.5 387L629.1 390L628.7 393L628.3 396L627.9 399L627.5 402L627.1 405L626.7 408L626.3 411L625.9 414L625.5 417L625.1 420L624.7 423L624.3 426L623.9 429L623.5 432L623.1 435L622.6 438L622.2 441L621.8 444L621.4 447L621 450L620.6 453L620.2 456L619.8 459L619.4 462L619 465L618.6 468L618.2 471L617.8 474L617.4 477L617 480L616.6 483L616.2 486L615.8 489L615.5 492L615.2 495L614.9 498L614.5 501L614.2 504L613.9 507L613.6 510L613.2 513L612.9 516L612.6 519L612.3 522L612 525L611.6 528L611.3 531L610.2 534L608.9 537L607.5 540L606.2 543L604.9 546L603.5 549L602.2 552L600.9 555L599.5 558L598.2 561L596.9 564L595.5 567L594.2 570L592.9 573L591.5 576L590.2 579L588.9 582L587.5 585L586.2 588L584.9 591L583.5 594L582.2 597L580.9 600L579.5 603L578.2 606L576.9 609L575.5 612L574.2 615L572.9 618L571.5 621L570.2 624L568.9 627L567.5 630L566.2 633L564.9 636L563.5 639L562.2 642L560.9 645L559.5 648L558.2 651L556.9 654M639.9 204L639.8 207L639.7 210L639.6 213L639.5 216L639.4 219L639.2 222L639.1 225L639 228L638.9 231L638.8 234L638.7 237L638.6 240L638.5 243L638.3 246L638.2 249L638.1 252L638 255L637.8 258L637.6 261L637.5 264L637.3 267L637.1 270L636.9 273L636.8 276L636.6 279L636.4 282L636.3 285L636.1 288L635.9 291L635.8 294L635.6 297L635.4 300L635 303L634.6 306L634.3 309L633.9 312L633.5 315L633.1 318L632.7 321L632.3 324L631.9 327L631.5 330L631.2 333L630.8 336L630.4 339L630 342L629.6 345L629.2 348L628.8 351L628.4 354L628.1 357L627.7 360L627.3 363L626.9 366L626.5 369L626.1 372L625.7 375L625.3 378L624.9 381L624.5 384L624.1 387L623.6 390L623.2 393L622.8 396L622.3 399L621.9 402L621.5 405L621 408L620.6 411L620.1 414L619.7 417L619.3 420L618.8 423L618.4 426L618 429L617.5 432L617.1 435L616.7 438L616.2 441L615.8 444L615.3 447L614.9 450L614.5 453L614 456L613.6 459L613.2 462L612.7 465L612.3 468L611.9 471L611.4 474L611 477L610.6 480L610.1 483L609.7 486L609.3 489L608.9 492L608.6 495L608.2 498L607.9 501L607.5 504L607.2 507L606.8 510L606.5 513L606.1 516L605.8 519L605.4 522L605.1 525L604.7 528L604.4 531L603.2 534L601.9 537L600.6 540L599.2 543L597.9 546L596.6 549L595.2 552L593.9 555L592.6 558L591.2 561L589.9 564L588.6 567L587.2 570L585.9 573L584.6 576L583.2 579L581.9 582L580.6 585L579.2 588L577.9 591L576.6 594L575.2 597L573.9 600L572.6 603L571.2 606L569.9 609L568.6 612L567.2 615L565.9 618L564.6 621L563.2 624L561.9 627L560.6 630L559.2 633L557.9 636L556.6 639L555.2 642L553.9 645L552.6 648L551.2 651L549.9 654M635.4 204L635.3 207L635.1 210L635 213L634.9 216L634.8 219L634.7 222L634.6 225L634.5 228L634.4 231L634.2 234L634.1 237L634 240L633.9 243L633.8 246L633.7 249L633.6 252L633.4 255L633.2 258L633.1 261L632.9 264L632.7 267L632.6 270L632.4 273L632.2 276L632 279L631.9 282L631.7 285L631.5 288L631.4 291L631.2 294L631 297L630.9 300L630.4 303L630 306L629.6 309L629.2 312L628.8 315L628.3 318L627.9 321L627.5 324L627.1 327L626.7 330L626.3 333L625.8 336L625.4 339L625 342L624.6 345L624.2 348L623.7 351L623.3 354L622.9 357L622.5 360L622.1 363L621.7 366L621.2 369L620.8 372L620.4 375L620 378L619.5 381L619.1 384L618.6 387L618.1 390L617.7 393L617.2 396L616.7 399L616.3 402L615.8 405L615.3 408L614.9 411L614.4 414L613.9 417L613.5 420L613 423L612.5 426L612.1 429L611.6 432L611.1 435L610.7 438L610.2 441L609.7 444L609.3 447L608.8 450L608.3 453L607.9 456L607.4 459L606.9 462L606.5 465L606 468L605.5 471L605.1 474L604.6 477L604.1 480L603.7 483L603.2 486L602.8 489L602.4 492L602 495L601.6 498L601.3 501L600.9 504L600.5 507L600.1 510L599.7 513L599.3 516L599 519L598.6 522L598.2 525L597.8 528L597.4 531L596.3 534L595 537L593.6 540L592.3 543L591 546L589.6 549L588.3 552L587 555L585.6 558L584.3 561L583 564L581.6 567L580.3 570L579 573L577.6 576L576.3 579L575 582L573.6 585L572.3 588L571 591L569.6 594L568.3 597L567 600L565.6 603L564.3 606L563 609L561.6 612L560.3 615L559 618L557.6 621L556.3 624L555 627L553.6 630L552.3 633L551 636L549.6 639L548.3 642L547 645L545.6 648L544.3 651M630.8 204L630.7 207L630.6 210L630.5 213L630.4 216L630.2 219L630.1 222L630 225L629.9 228L629.8 231L629.7 234L629.6 237L629.5 240L629.3 243L629.2 246L629.1 249L629 252L628.8 255L628.7 258L628.5 261L628.3 264L628.2 267L628 270L627.8 273L627.7 276L627.5 279L627.3 282L627.1 285L627 288L626.8 291L626.6 294L626.5 297L626.3 300L625.8 303L625.4 306L624.9 309L624.5 312L624 315L623.6 318L623.1 321L622.7 324L622.3 327L621.8 330L621.4 333L620.9 336L620.5 339L620 342L619.6 345L619.1 348L618.7 351L618.2 354L617.8 357L617.3 360L616.9 363L616.4 366L616 369L615.5 372L615.1 375L614.6 378L614.1 381L613.6 384L613.1 387L612.7 390L612.2 393L611.7 396L611.2 399L610.7 402L610.2 405L609.7 408L609.2 411L608.7 414L608.2 417L607.7 420L607.2 423L606.7 426L606.2 429L605.7 432L605.2 435L604.7 438L604.2 441L603.7 444L603.2 447L602.7 450L602.2 453L601.7 456L601.2 459L600.7 462L600.2 465L599.7 468L599.2 471L598.7 474L598.2 477L597.7 480L597.2 483L596.7 486L596.3 489L595.9 492L595.4 495L595 498L594.6 501L594.2 504L593.8 507L593.4 510L593 513L592.5 516L592.1 519L591.7 522L591.3 525L590.9 528L590.5 531L589.3 534L588 537L586.7 540L585.3 543L584 546L582.7 549L581.3 552L580 555L578.7 558L577.3 561L576 564L574.7 567L573.3 570L572 573L570.7 576L569.3 579L568 582L566.7 585L565.3 588L564 591L562.7 594L561.3 597L560 600L558.7 603L557.3 606L556 609L554.7 612L553.3 615L552 618L550.7 621L549.3 624L548 627L546.7 630L545.3 633L544 636L542.7 639L541.3 642L540 645L538.7 648M626.2 204L626.1 207L626 210L625.9 213L625.8 216L625.7 219L625.6 222L625.5 225L625.3 228L625.2 231L625.1 234L625 237L624.9 240L624.8 243L624.7 246L624.6 249L624.4 252L624.3 255L624.1 258L623.9 261L623.8 264L623.6 267L623.4 270L623.3 273L623.1 276L622.9 279L622.8 282L622.6 285L622.4 288L622.2 291L622.1 294L621.9 297L621.7 300L621.3 303L620.8 306L620.3 309L619.8 312L619.3 315L618.9 318L618.4 321L617.9 324L617.4 327L616.9 330L616.5 333L616 336L615.5 339L615 342L614.5 345L614 348L613.6 351L613.1 354L612.6 357L612.1 360L611.6 363L611.2 366L610.7 369L610.2 372L609.7 375L609.2 378L608.7 381L608.2 384L607.7 387L607.2 390L606.6 393L606.1 396L605.6 399L605 402L604.5 405L604 408L603.5 411L602.9 414L602.4 417L601.9 420L601.3 423L600.8 426L600.3 429L599.8 432L599.2 435L598.7 438L598.2 441L597.6 444L597.1 447L596.6 450L596 453L595.5 456L595 459L594.5 462L593.9 465L593.4 468L592.9 471L592.3 474L591.8 477L591.3 480L590.8 483L590.2 486L589.8 489L589.3 492L588.9 495L588.4 498L588 501L587.5 504L587.1 507L586.6 510L586.2 513L585.7 516L585.3 519L584.9 522L584.4 525L584 528L583.5 531L582.4 534L581.1 537L579.7 540L578.4 543L577.1 546L575.7 549L574.4 552L573.1 555L571.7 558L570.4 561L569.1 564L567.7 567L566.4 570L565.1 573L563.7 576L562.4 579L561.1 582L559.7 585L558.4 588L557.1 591L555.7 594L554.4 597L553.1 600L551.7 603L550.4 606L549.1 609L547.7 612L546.4 615L545.1 618L543.7 621L542.4 624L541.1 627L539.7 630L538.4 633L537.1 636L535.7 639L534.4 642L533.1 645L531.7 648M621.7 204L621.6 207L621.5 210L621.3 213L621.2 216L621.1 219L621 222L620.9 225L620.8 228L620.7 231L620.6 234L620.4 237L620.3 240L620.2 243L620.1 246L620 249L619.9 252L619.7 255L619.6 258L619.4 261L619.2 264L619 267L618.9 270L618.7 273L618.5 276L618.4 279L618.2 282L618 285L617.9 288L617.7 291L617.5 294L617.3 297L617.2 300L616.7 303L616.2 306L615.6 309L615.1 312L614.6 315L614.1 318L613.6 321L613.1 324L612.6 327L612.1 330L611.5 333L611 336L610.5 339L610 342L609.5 345L609 348L608.5 351L608 354L607.5 357L606.9 360L606.4 363L605.9 366L605.4 369L604.9 372L604.4 375L603.9 378L603.3 381L602.8 384L602.2 387L601.7 390L601.1 393L600.5 396L600 399L599.4 402L598.9 405L598.3 408L597.7 411L597.2 414L596.6 417L596.1 420L595.5 423L594.9 426L594.4 429L593.8 432L593.3 435L592.7 438L592.1 441L591.6 444L591 447L590.5 450L589.9 453L589.3 456L588.8 459L588.2 462L587.7 465L587.1 468L586.5 471L586 474L585.4 477L584.9 480L584.3 483L583.7 486L583.2 489L582.8 492L582.3 495L581.8 498L581.3 501L580.9 504L580.4 507L579.9 510L579.4 513L579 516L578.5 519L578 522L577.5 525L577 528L576.6 531L575.4 534L574.1 537L572.8 540L571.4 543L570.1 546L568.8 549L567.4 552L566.1 555L564.8 558L563.4 561L562.1 564L560.8 567L559.4 570L558.1 573L556.8 576L555.4 579L554.1 582L552.8 585L551.4 588L550.1 591L548.8 594L547.4 597L546.1 600L544.8 603L543.4 606L542.1 609L540.8 612L539.4 615L538.1 618L536.8 621L535.4 624L534.1 627L532.8 630L531.4 633L530.1 636L528.8 639L527.4 642L526.1 645M617.1 204L617 207L616.9 210L616.8 213L616.7 216L616.6 219L616.4 222L616.3 225L616.2 228L616.1 231L616 234L615.9 237L615.8 240L615.7 243L615.5 246L615.4 249L615.3 252L615.2 255L615 258L614.8 261L614.7 264L614.5 267L614.3 270L614.1 273L614 276L613.8 279L613.6 282L613.5 285L613.3 288L613.1 291L613 294L612.8 297L612.6 300L612.1 303L611.5 306L611 309L610.4 312L609.9 315L609.4 318L608.8 321L608.3 324L607.7 327L607.2 330L606.6 333L606.1 336L605.6 339L605 342L604.5 345L603.9 348L603.4 351L602.8 354L602.3 357L601.8 360L601.2 363L600.7 366L600.1 369L599.6 372L599.1 375L598.5 378L598 381L597.4 384L596.8 387L596.2 390L595.6 393L595 396L594.4 399L593.8 402L593.2 405L592.6 408L592 411L591.4 414L590.9 417L590.3 420L589.7 423L589.1 426L588.5 429L587.9 432L587.3 435L586.7 438L586.1 441L585.5 444L584.9 447L584.4 450L583.8 453L583.2 456L582.6 459L582 462L581.4 465L580.8 468L580.2 471L579.6 474L579 477L578.4 480L577.9 483L577.3 486L576.7 489L576.2 492L575.7 495L575.2 498L574.7 501L574.2 504L573.7 507L573.2 510L572.7 513L572.2 516L571.7 519L571.1 522L570.6 525L570.1 528L569.6 531L568.5 534L567.2 537L565.8 540L564.5 543L563.2 546L561.8 549L560.5 552L559.2 555L557.8 558L556.5 561L555.2 564L553.8 567L552.5 570L551.2 573L549.8 576L548.5 579L547.2 582L545.8 585L544.5 588L543.2 591L541.8 594L540.5 597L539.2 600L537.8 603L536.5 606L535.2 609L533.8 612L532.5 615L531.2 618L529.8 621L528.5 624L527.2 627L525.8 630L524.5 633L523.2 636L521.8 639L520.5 642M612.6 204L612.5 207L612.3 210L612.2 213L612.1 216L612 219L611.9 222L611.8 225L611.7 228L611.6 231L611.4 234L611.3 237L611.2 240L611.1 243L611 246L610.9 249L610.8 252L610.6 255L610.4 258L610.3 261L610.1 264L609.9 267L609.8 270L609.6 273L609.4 276L609.2 279L609.1 282L608.9 285L608.7 288L608.6 291L608.4 294L608.2 297L608.1 300L607.5 303L606.9 306L606.3 309L605.8 312L605.2 315L604.6 318L604 321L603.5 324L602.9 327L602.3 330L601.7 333L601.2 336L600.6 339L600 342L599.5 345L598.9 348L598.3 351L597.7 354L597.2 357L596.6 360L596 363L595.4 366L594.9 369L594.3 372L593.7 375L593.1 378L592.6 381L591.9 384L591.3 387L590.7 390L590.1 393L589.4 396L588.8 399L588.2 402L587.6 405L587 408L586.3 411L585.7 414L585.1 417L584.5 420L583.8 423L583.2 426L582.6 429L582 432L581.4 435L580.7 438L580.1 441L579.5 444L578.9 447L578.2 450L577.6 453L577 456L576.4 459L575.8 462L575.1 465L574.5 468L573.9 471L573.3 474L572.6 477L572 480L571.4 483L570.8 486L570.2 489L569.7 492L569.1 495L568.6 498L568.1 501L567.5 504L567 507L566.4 510L565.9 513L565.4 516L564.8 519L564.3 522L563.7 525L563.2 528L562.7 531L561.5 534L560.2 537L558.9 540L557.5 543L556.2 546L554.9 549L553.5 552L552.2 555L550.9 558L549.5 561L548.2 564L546.9 567L545.5 570L544.2 573L542.9 576L541.5 579L540.2 582L538.9 585L537.5 588L536.2 591L534.9 594L533.5 597L532.2 600L530.9 603L529.5 606L528.2 609L526.9 612L525.5 615L524.2 618L522.9 621L521.5 624L520.2 627L518.9 630L517.5 633L516.2 636L514.9 639M608 204L607.9 207L607.8 210L607.7 213L607.6 216L607.4 219L607.3 222L607.2 225L607.1 228L607 231L606.9 234L606.8 237L606.7 240L606.5 243L606.4 246L606.3 249L606.2 252L606 255L605.9 258L605.7 261L605.5 264L605.4 267L605.2 270L605 273L604.9 276L604.7 279L604.5 282L604.3 285L604.2 288L604 291L603.8 294L603.7 297L603.5 300L602.9 303L602.3 306L601.7 309L601.1 312L600.5 315L599.9 318L599.3 321L598.7 324L598.1 327L597.4 330L596.8 333L596.2 336L595.6 339L595 342L594.4 345L593.8 348L593.2 351L592.6 354L592 357L591.4 360L590.8 363L590.2 366L589.6 369L589 372L588.4 375L587.8 378L587.2 381L586.5 384L585.8 387L585.2 390L584.5 393L583.9 396L583.2 399L582.6 402L581.9 405L581.3 408L580.6 411L580 414L579.3 417L578.7 420L578 423L577.4 426L576.7 429L576 432L575.4 435L574.7 438L574.1 441L573.4 444L572.8 447L572.1 450L571.5 453L570.8 456L570.2 459L569.5 462L568.9 465L568.2 468L567.6 471L566.9 474L566.3 477L565.6 480L564.9 483L564.3 486L563.7 489L563.1 492L562.6 495L562 498L561.4 501L560.8 504L560.3 507L559.7 510L559.1 513L558.6 516L558 519L557.4 522L556.9 525L556.3 528L555.7 531L554.6 534L553.3 537L551.9 540L550.6 543L549.3 546L547.9 549L546.6 552L545.3 555L543.9 558L542.6 561L541.3 564L539.9 567L538.6 570L537.3 573L535.9 576L534.6 579L533.3 582L531.9 585L530.6 588L529.3 591L527.9 594L526.6 597L525.3 600L523.9 603L522.6 606L521.3 609L519.9 612L518.6 615L517.3 618L515.9 621L514.6 624L513.3 627L511.9 630L510.6 633L509.3 636L507.9 639M603.4 204L603.3 207L603.2 210L603.1 213L603 216L602.9 219L602.8 222L602.7 225L602.5 228L602.4 231L602.3 234L602.2 237L602.1 240L602 243L601.9 246L601.8 249L601.6 252L601.5 255L601.3 258L601.1 261L601 264L600.8 267L600.6 270L600.5 273L600.3 276L600.1 279L600 282L599.8 285L599.6 288L599.4 291L599.3 294L599.1 297L598.9 300L598.3 303L597.7 306L597 309L596.4 312L595.8 315L595.1 318L594.5 321L593.9 324L593.2 327L592.6 330L591.9 333L591.3 336L590.7 339L590 342L589.4 345L588.8 348L588.1 351L587.5 354L586.9 357L586.2 360L585.6 363L585 366L584.3 369L583.7 372L583 375L582.4 378L581.8 381L581.1 384L580.4 387L579.7 390L579 393L578.3 396L577.7 399L577 402L576.3 405L575.6 408L574.9 411L574.2 414L573.5 417L572.9 420L572.2 423L571.5 426L570.8 429L570.1 432L569.4 435L568.8 438L568.1 441L567.4 444L566.7 447L566 450L565.3 453L564.6 456L564 459L563.3 462L562.6 465L561.9 468L561.2 471L560.5 474L559.9 477L559.2 480L558.5 483L557.8 486L557.2 489L556.6 492L556 495L555.4 498L554.8 501L554.2 504L553.6 507L553 510L552.4 513L551.8 516L551.2 519L550.6 522L550 525L549.4 528L548.8 531L547.6 534L546.3 537L545 540L543.6 543L542.3 546L541 549L539.6 552L538.3 555L537 558L535.6 561L534.3 564L533 567L531.6 570L530.3 573L529 576L527.6 579L526.3 582L525 585L523.6 588L522.3 591L521 594L519.6 597L518.3 600L517 603L515.6 606L514.3 609L513 612L511.6 615L510.3 618L509 621L507.6 624L506.3 627L505 630L503.6 633L502.3 636M598.9 204L598.8 207L598.7 210L598.5 213L598.4 216L598.3 219L598.2 222L598.1 225L598 228L597.9 231L597.8 234L597.6 237L597.5 240L597.4 243L597.3 246L597.2 249L597.1 252L596.9 255L596.8 258L596.6 261L596.4 264L596.2 267L596.1 270L595.9 273L595.7 276L595.6 279L595.4 282L595.2 285L595.1 288L594.9 291L594.7 294L594.5 297L594.4 300L593.7 303L593 306L592.4 309L591.7 312L591 315L590.4 318L589.7 321L589 324L588.4 327L587.7 330L587 333L586.4 336L585.7 339L585 342L584.4 345L583.7 348L583 351L582.4 354L581.7 357L581 360L580.4 363L579.7 366L579 369L578.4 372L577.7 375L577 378L576.4 381L575.6 384L574.9 387L574.2 390L573.5 393L572.8 396L572.1 399L571.4 402L570.6 405L569.9 408L569.2 411L568.5 414L567.8 417L567.1 420L566.3 423L565.6 426L564.9 429L564.2 432L563.5 435L562.8 438L562.1 441L561.3 444L560.6 447L559.9 450L559.2 453L558.5 456L557.8 459L557 462L556.3 465L555.6 468L554.9 471L554.2 474L553.5 477L552.8 480L552 483L551.3 486L550.7 489L550 492L549.4 495L548.8 498L548.1 501L547.5 504L546.9 507L546.2 510L545.6 513L545 516L544.3 519L543.7 522L543.1 525L542.5 528L541.8 531L540.7 534L539.4 537L538 540L536.7 543L535.4 546L534 549L532.7 552L531.4 555L530 558L528.7 561L527.4 564L526 567L524.7 570L523.4 573L522 576L520.7 579L519.4 582L518 585L516.7 588L515.4 591L514 594L512.7 597L511.4 600L510 603L508.7 606L507.4 609L506 612L504.7 615L503.4 618L502 621L500.7 624L499.4 627L498 630L496.7 633M594.3 204L594.2 207L594.1 210L594 213L593.9 216L593.8 219L593.6 222L593.5 225L593.4 228L593.3 231L593.2 234L593.1 237L593 240L592.9 243L592.7 246L592.6 249L592.5 252L592.4 255L592.2 258L592 261L591.9 264L591.7 267L591.5 270L591.3 273L591.2 276L591 279L590.8 282L590.7 285L590.5 288L590.3 291L590.2 294L590 297L589.8 300L589.1 303L588.4 306L587.7 309L587 312L586.3 315L585.6 318L584.9 321L584.2 324L583.5 327L582.8 330L582.1 333L581.4 336L580.7 339L580 342L579.3 345L578.7 348L578 351L577.3 354L576.6 357L575.9 360L575.2 363L574.5 366L573.8 369L573.1 372L572.4 375L571.7 378L571 381L570.2 384L569.5 387L568.7 390L568 393L567.2 396L566.5 399L565.7 402L565 405L564.2 408L563.5 411L562.8 414L562 417L561.3 420L560.5 423L559.8 426L559 429L558.3 432L557.5 435L556.8 438L556 441L555.3 444L554.5 447L553.8 450L553 453L552.3 456L551.6 459L550.8 462L550.1 465L549.3 468L548.6 471L547.8 474L547.1 477L546.3 480L545.6 483L544.8 486L544.1 489L543.5 492L542.8 495L542.2 498L541.5 501L540.8 504L540.2 507L539.5 510L538.8 513L538.2 516L537.5 519L536.9 522L536.2 525L535.5 528L534.9 531L533.7 534L532.4 537L531.1 540L529.7 543L528.4 546L527.1 549L525.7 552L524.4 555L523.1 558L521.7 561L520.4 564L519.1 567L517.7 570L516.4 573L515.1 576L513.7 579L512.4 582L511.1 585L509.7 588L508.4 591L507.1 594L505.7 597L504.4 600L503.1 603L501.7 606L500.4 609L499.1 612L497.7 615L496.4 618L495.1 621L493.7 624L492.4 627L491.1 630L489.7 633M589.8 204L589.7 207L589.5 210L589.4 213L589.3 216L589.2 219L589.1 222L589 225L588.9 228L588.8 231L588.6 234L588.5 237L588.4 240L588.3 243L588.2 246L588.1 249L588 252L587.8 255L587.6 258L587.5 261L587.3 264L587.1 267L587 270L586.8 273L586.6 276L586.4 279L586.3 282L586.1 285L585.9 288L585.8 291L585.6 294L585.4 297L585.3 300L584.5 303L583.8 306L583.1 309L582.3 312L581.6 315L580.9 318L580.2 321L579.4 324L578.7 327L578 330L577.2 333L576.5 336L575.8 339L575.1 342L574.3 345L573.6 348L572.9 351L572.1 354L571.4 357L570.7 360L570 363L569.2 366L568.5 369L567.8 372L567 375L566.3 378L565.6 381L564.8 384L564 387L563.2 390L562.5 393L561.7 396L560.9 399L560.1 402L559.3 405L558.6 408L557.8 411L557 414L556.2 417L555.5 420L554.7 423L553.9 426L553.1 429L552.3 432L551.6 435L550.8 438L550 441L549.2 444L548.5 447L547.7 450L546.9 453L546.1 456L545.3 459L544.6 462L543.8 465L543 468L542.2 471L541.5 474L540.7 477L539.9 480L539.1 483L538.4 486L537.6 489L536.9 492L536.2 495L535.6 498L534.9 501L534.2 504L533.5 507L532.8 510L532.1 513L531.4 516L530.7 519L530 522L529.3 525L528.6 528L527.9 531L526.8 534L525.5 537L524.1 540L522.8 543L521.5 546L520.1 549L518.8 552L517.5 555L516.1 558L514.8 561L513.5 564L512.1 567L510.8 570L509.5 573L508.1 576L506.8 579L505.5 582L504.1 585L502.8 588L501.5 591L500.1 594L498.8 597L497.5 600L496.1 603L494.8 606L493.5 609L492.1 612L490.8 615L489.5 618L488.1 621L486.8 624L485.5 627L484.1 630M585.2 204L585.1 207L585 210L584.9 213L584.8 216L584.6 219L584.5 222L584.4 225L584.3 228L584.2 231L584.1 234L584 237L583.9 240L583.7 243L583.6 246L583.5 249L583.4 252L583.2 255L583.1 258L582.9 261L582.7 264L582.6 267L582.4 270L582.2 273L582.1 276L581.9 279L581.7 282L581.5 285L581.4 288L581.2 291L581 294L580.9 297L580.7 300L579.9 303L579.2 306L578.4 309L577.7 312L576.9 315L576.1 318L575.4 321L574.6 324L573.9 327L573.1 330L572.3 333L571.6 336L570.8 339L570.1 342L569.3 345L568.5 348L567.8 351L567 354L566.3 357L565.5 360L564.7 363L564 366L563.2 369L562.5 372L561.7 375L560.9 378L560.2 381L559.4 384L558.5 387L557.7 390L556.9 393L556.1 396L555.3 399L554.5 402L553.7 405L552.9 408L552.1 411L551.3 414L550.5 417L549.7 420L548.8 423L548 426L547.2 429L546.4 432L545.6 435L544.8 438L544 441L543.2 444L542.4 447L541.6 450L540.8 453L540 456L539.1 459L538.3 462L537.5 465L536.7 468L535.9 471L535.1 474L534.3 477L533.5 480L532.7 483L531.9 486L531.1 489L530.4 492L529.7 495L528.9 498L528.2 501L527.5 504L526.8 507L526 510L525.3 513L524.6 516L523.9 519L523.1 522L522.4 525L521.7 528L521 531L519.8 534L518.5 537L517.2 540L515.8 543L514.5 546L513.2 549L511.8 552L510.5 555L509.2 558L507.8 561L506.5 564L505.2 567L503.8 570L502.5 573L501.2 576L499.8 579L498.5 582L497.2 585L495.8 588L494.5 591L493.2 594L491.8 597L490.5 600L489.2 603L487.8 606L486.5 609L485.2 612L483.8 615L482.5 618L481.2 621L479.8 624L478.5 627M580.6 204L580.5 207L580.4 210L580.3 213L580.2 216L580.1 219L580 222L579.9 225L579.7 228L579.6 231L579.5 234L579.4 237L579.3 240L579.2 243L579.1 246L579 249L578.8 252L578.7 255L578.5 258L578.3 261L578.2 264L578 267L577.8 270L577.7 273L577.5 276L577.3 279L577.2 282L577 285L576.8 288L576.6 291L576.5 294L576.3 297L576.1 300L575.3 303L574.6 306L573.8 309L573 312L572.2 315L571.4 318L570.6 321L569.8 324L569 327L568.2 330L567.4 333L566.6 336L565.9 339L565.1 342L564.3 345L563.5 348L562.7 351L561.9 354L561.1 357L560.3 360L559.5 363L558.7 366L557.9 369L557.2 372L556.4 375L555.6 378L554.8 381L553.9 384L553.1 387L552.2 390L551.4 393L550.6 396L549.7 399L548.9 402L548.1 405L547.2 408L546.4 411L545.5 414L544.7 417L543.9 420L543 423L542.2 426L541.3 429L540.5 432L539.7 435L538.8 438L538 441L537.1 444L536.3 447L535.5 450L534.6 453L533.8 456L532.9 459L532.1 462L531.3 465L530.4 468L529.6 471L528.7 474L527.9 477L527.1 480L526.2 483L525.4 486L524.6 489L523.8 492L523.1 495L522.3 498L521.6 501L520.8 504L520.1 507L519.3 510L518.6 513L517.8 516L517 519L516.3 522L515.5 525L514.8 528L514 531L512.9 534L511.6 537L510.2 540L508.9 543L507.6 546L506.2 549L504.9 552L503.6 555L502.2 558L500.9 561L499.6 564L498.2 567L496.9 570L495.6 573L494.2 576L492.9 579L491.6 582L490.2 585L488.9 588L487.6 591L486.2 594L484.9 597L483.6 600L482.2 603L480.9 606L479.6 609L478.2 612L476.9 615L475.6 618L474.2 621L472.9 624L471.6 627M576.1 204L576 207L575.9 210L575.7 213L575.6 216L575.5 219M575 234L574.8 237L574.7 240L574.6 243L574.5 246L574.4 249L574.3 252L574.1 255L574 258L573.8 261L573.6 264L573.4 267L573.3 270L573.1 273L572.9 276L572.8 279L572.6 282L572.4 285L572.3 288L572.1 291L571.9 294L571.7 297L571.6 300L570.8 303L569.9 306L569.1 309L568.3 312L567.5 315L566.6 318L565.8 321L565 324L564.2 327L563.4 330L562.5 333L561.7 336L560.9 339L560.1 342L559.2 345L558.4 348L557.6 351L556.8 354L556 357L555.1 360L554.3 363L553.5 366L552.7 369L551.8 372L551 375L550.2 378L549.4 381L548.5 384L547.6 387L546.8 390L545.9 393L545 396L544.1 399L543.3 402L542.4 405L541.5 408L540.7 411L539.8 414L538.9 417L538.1 420L537.2 423L536.3 426L535.4 429L534.6 432L533.7 435L532.8 438L532 441L531.1 444L530.2 447L529.3 450L528.5 453L527.6 456L526.7 459L525.9 462L525 465L524.1 468L523.3 471L522.4 474L521.5 477L520.6 480L519.8 483L518.9 486L518.1 489L517.3 492L516.5 495L515.7 498L514.9 501L514.2 504L513.4 507L512.6 510L511.8 513L511 516L510.2 519L509.4 522L508.6 525L507.9 528L507.1 531L505.9 534L504.6 537L503.3 540L501.9 543L500.6 546L499.3 549L497.9 552L496.6 555L495.3 558L493.9 561L492.6 564L491.3 567L489.9 570L488.6 573L487.3 576L485.9 579L484.6 582L483.3 585L481.9 588L480.6 591L479.3 594L477.9 597L476.6 600L475.3 603L473.9 606L472.6 609L471.3 612L469.9 615L468.6 618L467.3 621L465.9 624M571.5 204L571.4 207L571.3 210L571.2 213L571.1 216L571 219M569.8 249L569.7 252L569.6 255L569.4 258L569.2 261L569.1 264L568.9 267L568.7 270L568.5 273L568.4 276L568.2 279L568 282L567.9 285L567.7 288L567.5 291L567.4 294L567.2 297L567 300L566.2 303L565.3 306L564.5 309L563.6 312L562.8 315L561.9 318L561 321L560.2 324L559.3 327L558.5 330L557.6 333L556.8 336L555.9 339L555.1 342L554.2 345L553.4 348L552.5 351L551.7 354L550.8 357L550 360L549.1 363L548.3 366L547.4 369L546.5 372L545.7 375L544.8 378L544 381L543.1 384L542.2 387L541.3 390L540.4 393L539.5 396L538.6 399L537.7 402L536.8 405L535.9 408L535 411L534.1 414L533.2 417L532.2 420L531.3 423L530.4 426L529.5 429L528.6 432L527.7 435L526.8 438L525.9 441L525 444L524.1 447L523.2 450L522.3 453L521.4 456L520.5 459L519.6 462L518.7 465L517.8 468L516.9 471L516 474L515.1 477L514.2 480L513.3 483L512.4 486L511.6 489L510.8 492L509.9 495L509.1 498L508.3 501L507.5 504L506.7 507L505.8 510L505 513L504.2 516L503.4 519L502.6 522L501.8 525L500.9 528L500.1 531L499 534L497.7 537L496.3 540L495 543L493.7 546L492.3 549L491 552L489.7 555L488.3 558L487 561L485.7 564L484.3 567L483 570L481.7 573L480.3 576L479 579L477.7 582L476.3 585L475 588L473.7 591L472.3 594L471 597L469.7 600L468.3 603L467 606L465.7 609L464.3 612L463 615L461.7 618L460.3 621M567 204L566.9 207L566.7 210L566.6 213L566.5 216L566.4 219M564.7 261L564.5 264L564.3 267L564.2 270L564 273L563.8 276L563.6 279L563.5 282L563.3 285L563.1 288L563 291L562.8 294L562.6 297L562.5 300L561.6 303L560.7 306L559.8 309L558.9 312L558 315L557.2 318L556.3 321L555.4 324L554.5 327L553.6 330L552.7 333L551.8 336L551 339L550.1 342L549.2 345L548.3 348L547.4 351L546.5 354L545.7 357L544.8 360L543.9 363L543 366L542.1 369L541.2 372L540.4 375L539.5 378L538.6 381L537.6 384L536.7 387L535.8 390L534.8 393L533.9 396L533 399L532 402L531.1 405L530.2 408L529.2 411L528.3 414L527.4 417L526.4 420L525.5 423L524.6 426L523.7 429L522.7 432L521.8 435L520.9 438L519.9 441L519 444L518.1 447L517.1 450L516.2 453L515.3 456L514.3 459L513.4 462L512.5 465L511.5 468L510.6 471L509.7 474L508.7 477L507.8 480L506.9 483L505.9 486L505.1 489L504.2 492L503.4 495L502.5 498L501.7 501L500.8 504L500 507L499.1 510L498.3 513L497.4 516L496.6 519L495.7 522L494.9 525L494 528L493.2 531L492 534L490.7 537L489.4 540L488 543L486.7 546L485.4 549L484 552L482.7 555L481.4 558L480 561L478.7 564L477.4 567L476 570L474.7 573L473.4 576L472 579L470.7 582L469.4 585L468 588L466.7 591L465.4 594L464 597L462.7 600L461.4 603L460 606L458.7 609L457.4 612L456 615L454.7 618L453.4 621M562.4 204L562.3 207L562.2 210L562.1 213L562 216L561.8 219M559.4 273L559.3 276L559.1 279L558.9 282L558.7 285L558.6 288L558.4 291L558.2 294L558.1 297L557.9 300L557 303L556.1 306L555.2 309L554.2 312L553.3 315L552.4 318L551.5 321L550.6 324L549.7 327L548.7 330L547.8 333L546.9 336L546 339L545.1 342L544.2 345L543.3 348L542.3 351L541.4 354L540.5 357L539.6 360L538.7 363L537.8 366L536.9 369L535.9 372L535 375L534.1 378L533.2 381L532.2 384L531.2 387L530.3 390L529.3 393L528.4 396L527.4 399L526.4 402L525.5 405L524.5 408L523.5 411L522.6 414L521.6 417L520.6 420L519.7 423L518.7 426L517.8 429L516.8 432L515.8 435L514.9 438L513.9 441L512.9 444L512 447L511 450L510 453L509.1 456L508.1 459L507.2 462L506.2 465L505.2 468L504.3 471L503.3 474L502.3 477L501.4 480L500.4 483L499.4 486L498.5 489L497.7 492L496.8 495L495.9 498L495 501L494.1 504L493.3 507L492.4 510L491.5 513L490.6 516L489.7 519L488.9 522L488 525L487.1 528L486.2 531L485.1 534L483.8 537L482.4 540L481.1 543L479.8 546L478.4 549L477.1 552L475.8 555L474.4 558L473.1 561L471.8 564L470.4 567L469.1 570L467.8 573L466.4 576L465.1 579L463.8 582L462.4 585L461.1 588L459.8 591L458.4 594L457.1 597L455.8 600L454.4 603L453.1 606L451.8 609L450.4 612L449.1 615L447.8 618M557.8 204L557.7 207L557.6 210L557.5 213L557.4 216L557.3 219M554.2 285L554 288L553.8 291L553.7 294L553.5 297L553.3 300L552.4 303L551.4 306L550.5 309L549.6 312L548.6 315L547.7 318L546.7 321L545.8 324L544.8 327L543.9 330L542.9 333L542 336L541 339L540.1 342L539.1 345L538.2 348L537.3 351L536.3 354L535.4 357L534.4 360L533.5 363L532.5 366L531.6 369L530.6 372L529.7 375L528.7 378L527.8 381L526.8 384L525.8 387L524.8 390L523.8 393L522.8 396L521.8 399L520.8 402L519.8 405L518.8 408L517.8 411L516.8 414L515.8 417L514.8 420L513.9 423L512.9 426L511.9 429L510.9 432L509.9 435L508.9 438L507.9 441L506.9 444L505.9 447L504.9 450L503.9 453L502.9 456L501.9 459L500.9 462L499.9 465L498.9 468L497.9 471L496.9 474L495.9 477L495 480L494 483L493 486L492 489L491.1 492L490.2 495L489.3 498L488.4 501L487.5 504L486.6 507L485.6 510L484.7 513L483.8 516L482.9 519L482 522L481.1 525L480.2 528L479.3 531L478.1 534L476.8 537L475.5 540L474.1 543L472.8 546L471.5 549L470.1 552L468.8 555L467.5 558L466.1 561L464.8 564L463.5 567L462.1 570L460.8 573L459.5 576L458.1 579L456.8 582L455.5 585L454.1 588L452.8 591L451.5 594L450.1 597L448.8 600L447.5 603L446.1 606L444.8 609L443.5 612L442.1 615M553.3 204L553.2 207L553.1 210L552.9 213L552.8 216L552.7 219M548.9 297L548.8 300L547.8 303L546.8 306L545.8 309L544.9 312L543.9 315L542.9 318L541.9 321L541 324L540 327L539 330L538 333L537.1 336L536.1 339L535.1 342L534.1 345L533.1 348L532.2 351L531.2 354L530.2 357L529.2 360L528.3 363L527.3 366L526.3 369L525.3 372L524.3 375L523.4 378L522.4 381L521.4 384L520.3 387L519.3 390L518.3 393L517.2 396L516.2 399L515.2 402L514.2 405L513.1 408L512.1 411L511.1 414L510.1 417L509 420L508 423L507 426L506 429L504.9 432L503.9 435L502.9 438L501.9 441L500.8 444L499.8 447L498.8 450L497.8 453L496.7 456L495.7 459L494.7 462L493.7 465L492.6 468L491.6 471L490.6 474L489.6 477L488.5 480L487.5 483L486.5 486L485.5 489L484.6 492L483.6 495L482.7 498L481.7 501L480.8 504L479.9 507L478.9 510L478 513L477 516L476.1 519L475.1 522L474.2 525L473.3 528L472.3 531L471.2 534L469.9 537L468.5 540L467.2 543L465.9 546L464.5 549L463.2 552L461.9 555L460.5 558L459.2 561L457.9 564L456.5 567L455.2 570L453.9 573L452.5 576L451.2 579L449.9 582L448.5 585L447.2 588L445.9 591L444.5 594L443.2 597L441.9 600L440.5 603L439.2 606L437.9 609L436.5 612M548.7 204L548.6 207L548.5 210L548.4 213L548.3 216L548.2 219M537.2 321L536.2 324L535.1 327L534.1 330L533.1 333L532.1 336L531.1 339L530.1 342L529.1 345L528.1 348L527.1 351L526.1 354L525.1 357L524.1 360L523 363L522 366L521 369L520 372L519 375L518 378L517 381L515.9 384L514.9 387L513.8 390L512.8 393L511.7 396L510.6 399L509.6 402L508.5 405L507.5 408L506.4 411L505.4 414L504.3 417L503.2 420L502.2 423L501.1 426L500.1 429L499 432L498 435L496.9 438L495.8 441L494.8 444L493.7 447L492.7 450L491.6 453L490.6 456L489.5 459L488.4 462L487.4 465L486.3 468L485.3 471L484.2 474L483.2 477L482.1 480L481.1 483L480 486L479 489L478 492L477 495L476.1 498L475.1 501L474.1 504L473.2 507L472.2 510L471.2 513L470.2 516L469.3 519L468.3 522L467.3 525L466.3 528L465.4 531L464.2 534L462.9 537L461.6 540L460.2 543L458.9 546L457.6 549L456.2 552L454.9 555L453.6 558L452.2 561L450.9 564L449.6 567L448.2 570L446.9 573L445.6 576L444.2 579L442.9 582L441.6 585L440.2 588L438.9 591L437.6 594L436.2 597L434.9 600L433.6 603L432.2 606L430.9 609L429.6 612M544.2 204L544.1 207L543.9 210L543.8 213L543.7 216L543.6 219M518.9 360L517.8 363L516.8 366L515.8 369L514.7 372L513.7 375L512.6 378L511.6 381L510.5 384L509.4 387L508.3 390L507.2 393L506.1 396L505.1 399L504 402L502.9 405L501.8 408L500.7 411L499.6 414L498.5 417L497.4 420L496.4 423L495.3 426L494.2 429L493.1 432L492 435L490.9 438L489.8 441L488.7 444L487.7 447L486.6 450L485.5 453L484.4 456L483.3 459L482.2 462L481.1 465L480 468L478.9 471L477.9 474L476.8 477L475.7 480L474.6 483L473.5 486L472.5 489L471.5 492L470.5 495L469.5 498L468.5 501L467.5 504L466.5 507L465.4 510L464.4 513L463.4 516L462.4 519L461.4 522L460.4 525L459.4 528L458.4 531L457.3 534L456 537L454.6 540L453.3 543L452 546L450.6 549L449.3 552L448 555L446.6 558L445.3 561L444 564L442.6 567L441.3 570L440 573L438.6 576L437.3 579L436 582L434.6 585L433.3 588L432 591L430.6 594L429.3 597L428 600L426.6 603L425.3 606L424 609M539.6 204L539.5 207L539.4 210L539.3 213L539.2 216L539 219M482.7 444L481.6 447L480.5 450L479.3 453L478.2 456L477.1 459L476 462L474.9 465L473.7 468L472.6 471L471.5 474L470.4 477L469.3 480L468.1 483L467 486L466 489L464.9 492L463.9 495L462.9 498L461.8 501L460.8 504L459.8 507L458.7 510L457.7 513L456.6 516L455.6 519L454.6 522L453.5 525L452.5 528L451.5 531L450.3 534L449 537L447.7 540L446.3 543L445 546L443.7 549L442.3 552L441 555L439.7 558L438.3 561L437 564L435.7 567L434.3 570L433 573L431.7 576L430.3 579L429 582L427.7 585L426.3 588L425 591L423.7 594L422.3 597L421 600L419.7 603L418.3 606M535 204L534.9 207L534.8 210L534.7 213L534.6 216L534.5 219M466.3 471L465.1 474L464 477L462.8 480L461.7 483L460.5 486L459.4 489L458.4 492L457.3 495L456.2 498L455.2 501L454.1 504L453.1 507L452 510L450.9 513L449.9 516L448.8 519L447.7 522L446.7 525L445.6 528L444.5 531L443.4 534L442.1 537L440.7 540L439.4 543L438.1 546L436.7 549L435.4 552L434.1 555L432.7 558L431.4 561L430.1 564L428.7 567L427.4 570L426.1 573L424.7 576L423.4 579L422.1 582L420.7 585L419.4 588L418.1 591L416.7 594L415.4 597L414.1 600L412.7 603L411.4 606M530.5 204L530.4 207L530.3 210L530.1 213L530 216L529.9 219M460 471L458.8 474L457.6 477L456.4 480L455.2 483L454.1 486L452.9 489L451.8 492L450.7 495L449.6 498L448.5 501L447.4 504L446.3 507L445.3 510L444.2 513L443.1 516L442 519L440.9 522L439.8 525L438.7 528L437.6 531L436.4 534L435.1 537L433.8 540L432.4 543L431.1 546L429.8 549L428.4 552L427.1 555L425.8 558L424.4 561L423.1 564L421.8 567L420.4 570L419.1 573L417.8 576L416.4 579L415.1 582L413.8 585L412.4 588L411.1 591L409.8 594L408.4 597L407.1 600L405.8 603M525.9 204L525.8 207L525.7 210L525.6 213L525.5 216L525.4 219M453.6 471L452.4 474L451.2 477L450 480L448.8 483L447.6 486L446.4 489L445.3 492L444.2 495L443 498L441.9 501L440.8 504L439.6 507L438.5 510L437.4 513L436.3 516L435.1 519L434 522L432.9 525L431.8 528L430.6 531L429.5 534L428.2 537L426.8 540L425.5 543L424.2 546L422.8 549L421.5 552L420.2 555L418.8 558L417.5 561L416.2 564L414.8 567L413.5 570L412.2 573L410.8 576L409.5 579L408.2 582L406.8 585L405.5 588L404.2 591L402.8 594L401.5 597L400.2 600M521.4 204L521.3 207L521.1 210L521 213L520.9 216L520.8 219M447.3 471L446.1 474L444.8 477L443.6 480L442.3 483L441.1 486L439.9 489L438.7 492L437.6 495L436.4 498L435.3 501L434.1 504L432.9 507L431.8 510L430.6 513L429.5 516L428.3 519L427.1 522L426 525L424.8 528L423.7 531L422.5 534L421.2 537L419.9 540L418.5 543L417.2 546L415.9 549L414.5 552L413.2 555L411.9 558L410.5 561L409.2 564L407.9 567L406.5 570L405.2 573L403.9 576L402.5 579L401.2 582L399.9 585L398.5 588L397.2 591L395.9 594L394.5 597L393.2 600M516.8 204L516.7 207L516.6 210L516.5 213L516.4 216L516.2 219M441 471L439.7 474L438.4 477L437.2 480L435.9 483L434.6 486L433.4 489L432.2 492L431 495L429.8 498L428.6 501L427.4 504L426.2 507L425.1 510L423.9 513L422.7 516L421.5 519L420.3 522L419.1 525L417.9 528L416.7 531L415.6 534L414.3 537L412.9 540L411.6 543L410.3 546L408.9 549L407.6 552L406.3 555L404.9 558L403.6 561L402.3 564L400.9 567L399.6 570L398.3 573L396.9 576L395.6 579L394.3 582L392.9 585L391.6 588L390.3 591L388.9 594L387.6 597M512.2 204L512.1 207L512 210L511.9 213L511.8 216L511.7 219M434.6 471L433.3 474L432 477L430.7 480L429.4 483L428.1 486L426.9 489L425.6 492L424.4 495L423.2 498L422 501L420.8 504L419.5 507L418.3 510L417.1 513L415.9 516L414.7 519L413.4 522L412.2 525L411 528L409.8 531L408.6 534L407.3 537L406 540L404.6 543L403.3 546L402 549L400.6 552L399.3 555L398 558L396.6 561L395.3 564L394 567L392.6 570L391.3 573L390 576L388.6 579L387.3 582L386 585L384.6 588L383.3 591L382 594M507.7 204L507.6 207L507.5 210L507.3 213L507.2 216L507.1 219M428.3 471L427 474L425.6 477L424.3 480L423 483L421.6 486L420.4 489L419.1 492L417.8 495L416.6 498L415.3 501L414.1 504L412.8 507L411.6 510L410.3 513L409.1 516L407.8 519L406.6 522L405.3 525L404.1 528L402.8 531L401.7 534L400.4 537L399 540L397.7 543L396.4 546L395 549L393.7 552L392.4 555L391 558L389.7 561L388.4 564L387 567L385.7 570L384.4 573L383 576L381.7 579L380.4 582L379 585L377.7 588L376.4 591L375 594M503.1 204L503 207L502.9 210L502.8 213L502.7 216L502.6 219M422 471L420.6 474L419.3 477L417.9 480L416.5 483L415.1 486L413.8 489L412.6 492L411.3 495L410 498L408.7 501L407.4 504L406.1 507L404.9 510L403.6 513L402.3 516L401 519L399.7 522L398.4 525L397.2 528L395.9 531L394.7 534L393.4 537L392.1 540L390.7 543L389.4 546L388.1 549L386.7 552L385.4 555L384.1 558L382.7 561L381.4 564L380.1 567L378.7 570L377.4 573L376.1 576L374.7 579L373.4 582L372.1 585L370.7 588L369.4 591M498.6 204L498.5 207L498.3 210L498.2 213L498.1 216L498 219M415.7 471L414.3 474L412.9 477L411.5 480L410.1 483L408.7 486L407.3 489L406 492L404.7 495L403.4 498L402.1 501L400.8 504L399.4 507L398.1 510L396.8 513L395.5 516L394.2 519L392.9 522L391.6 525L390.2 528L388.9 531L387.8 534L386.5 537L385.1 540L383.8 543L382.5 546L381.1 549L379.8 552L378.5 555L377.1 558L375.8 561L374.5 564L373.1 567L371.8 570L370.5 573L369.1 576L367.8 579L366.5 582L365.1 585L363.8 588M494 204L493.9 207L493.8 210L493.7 213L493.6 216L493.4 219M409.3 471L407.9 474L406.5 477L405 480L403.6 483L402.2 486L400.8 489L399.5 492L398.1 495L396.8 498L395.4 501L394.1 504L392.7 507L391.4 510L390 513L388.7 516L387.4 519L386 522L384.7 525L383.3 528L382 531L380.8 534L379.5 537L378.2 540L376.8 543L375.5 546L374.2 549L372.8 552L371.5 555L370.2 558L368.8 561L367.5 564L366.2 567L364.8 570L363.5 573L362.2 576L360.8 579L359.5 582L358.2 585M489.4 204L489.3 207L489.2 210L489.1 213L489 216L488.9 219M403 471L401.5 474L400.1 477L398.6 480L397.2 483L395.7 486L394.3 489L392.9 492L391.5 495L390.2 498L388.8 501L387.4 504L386 507L384.7 510L383.3 513L381.9 516L380.5 519L379.2 522L377.8 525L376.4 528L375 531L373.9 534L372.6 537L371.2 540L369.9 543L368.6 546L367.2 549L365.9 552L364.6 555L363.2 558L361.9 561L360.6 564L359.2 567L357.9 570L356.6 573L355.2 576L353.9 579L352.6 582L351.2 585M484.9 204L484.8 207L484.7 210L484.5 213L484.4 216L484.3 219M396.7 471L395.2 474L393.7 477L392.2 480L390.7 483L389.2 486L387.8 489L386.4 492L385 495L383.6 498L382.1 501L380.7 504L379.3 507L377.9 510L376.5 513L375.1 516L373.7 519L372.3 522L370.9 525L369.5 528L368.1 531L366.9 534L365.6 537L364.3 540L362.9 543L361.6 546L360.3 549L358.9 552L357.6 555L356.3 558L354.9 561L353.6 564L352.3 567L350.9 570L349.6 573L348.3 576L346.9 579L345.6 582M480.3 204L480.2 207L480.1 210L480 213L479.9 216L479.8 219M390.3 471L388.8 474L387.3 477L385.8 480L384.2 483L382.7 486L381.3 489L379.8 492L378.4 495L376.9 498L375.5 501L374.1 504L372.6 507L371.2 510L369.8 513L368.3 516L366.9 519L365.4 522L364 525L362.6 528L361.1 531L360 534L358.7 537L357.3 540L356 543L354.7 546L353.3 549L352 552L350.7 555L349.3 558L348 561L346.7 564L345.3 567L344 570L342.7 573L341.3 576L340 579M475.8 204L475.7 207L475.5 210L475.4 213L475.3 216L475.2 219M384 471L382.5 474L380.9 477L379.3 480L377.8 483L376.2 486L374.7 489L373.3 492L371.8 495L370.3 498L368.9 501L367.4 504L365.9 507L364.5 510L363 513L361.5 516L360.1 519L358.6 522L357.1 525L355.6 528L354.2 531L353 534L351.7 537L350.4 540L349 543L347.7 546L346.4 549L345 552L343.7 555L342.4 558L341 561L339.7 564L338.4 567L337 570L335.7 573L334.4 576L333 579M471.2 204L471.1 207L471 210L470.9 213L470.8 216L470.6 219M377.7 471L376.1 474L374.5 477L372.9 480L371.3 483L369.8 486L368.2 489L366.7 492L365.2 495L363.7 498L362.2 501L360.7 504L359.2 507L357.7 510L356.2 513L354.7 516L353.2 519L351.7 522L350.2 525L348.7 528L347.2 531L346.1 534L344.8 537L343.4 540L342.1 543L340.8 546L339.4 549L338.1 552L336.8 555L335.4 558L334.1 561L332.8 564L331.4 567L330.1 570L328.8 573L327.4 576M466.6 204L466.5 207L466.4 210L466.3 213L466.2 216L466.1 219M371.4 471L369.7 474L368.1 477L366.5 480L364.9 483L363.3 486L361.7 489L360.2 492L358.7 495L357.1 498L355.6 501L354.1 504L352.5 507L351 510L349.5 513L347.9 516L346.4 519L344.9 522L343.3 525L341.8 528L340.3 531L339.1 534L337.8 537L336.5 540L335.1 543L333.8 546L332.5 549L331.1 552L329.8 555L328.5 558L327.1 561L325.8 564L324.5 567L323.1 570L321.8 573M462.1 204L462 207L461.9 210L461.7 213L461.6 216L461.5 219M365 471L363.4 474L361.7 477L360.1 480L358.4 483L356.8 486L355.2 489L353.6 492L352.1 495L350.5 498L348.9 501L347.4 504L345.8 507L344.3 510L342.7 513L341.1 516L339.6 519L338 522L336.4 525L334.9 528L333.3 531L332.2 534L330.9 537L329.5 540L328.2 543L326.9 546L325.5 549L324.2 552L322.9 555L321.5 558L320.2 561L318.9 564L317.5 567L316.2 570L314.9 573M457.5 204L457.4 207L457.3 210L457.2 213L457.1 216L457 219M358.7 471L357 474L355.3 477L353.7 480L352 483L350.3 486L348.7 489L347.1 492L345.5 495L343.9 498L342.3 501L340.7 504L339.1 507L337.5 510L335.9 513L334.3 516L332.7 519L331.2 522L329.6 525L328 528L326.4 531L325.2 534L323.9 537L322.6 540L321.2 543L319.9 546L318.6 549L317.2 552L315.9 555L314.6 558L313.2 561L311.9 564L310.6 567L309.2 570M453 204L452.9 207L452.7 210L452.6 213L452.5 216L452.4 219M352.4 471L350.7 474L348.9 477L347.2 480L345.5 483L343.8 486L342.2 489L340.5 492L338.9 495L337.3 498L335.7 501L334 504L332.4 507L330.8 510L329.2 513L327.5 516L325.9 519L324.3 522L322.7 525L321 528L319.4 531L318.3 534L317 537L315.6 540L314.3 543L313 546L311.6 549L310.3 552L309 555L307.6 558L306.3 561L305 564L303.6 567M448.4 204L448.3 207L448.2 210L448.1 213L448 216L447.8 219M346 471L344.3 474L342.6 477L340.8 480L339.1 483L337.3 486L335.7 489L334 492L332.3 495L330.7 498L329 501L327.4 504L325.7 507L324.1 510L322.4 513L320.8 516L319.1 519L317.4 522L315.8 525L314.1 528L312.5 531L311.3 534L310 537L308.7 540L307.3 543L306 546L304.7 549L303.3 552L302 555L300.7 558L299.3 561L298 564L296.7 567M443.8 204L443.7 207L443.6 210L443.5 213L443.4 216L443.3 219M339.7 471L337.9 474L336.2 477L334.4 480L332.6 483L330.9 486L329.1 489L327.5 492L325.8 495L324.1 498L322.4 501L320.7 504L319 507L317.3 510L315.6 513L314 516L312.3 519L310.6 522L308.9 525L307.2 528L305.5 531L304.4 534L303.1 537L301.7 540L300.4 543L299.1 546L297.7 549L296.4 552L295.1 555L293.7 558L292.4 561L291.1 564M439.3 204L439.2 207L439.1 210L438.9 213L438.8 216L438.7 219M333.4 471L331.6 474L329.8 477L328 480L326.2 483L324.4 486L322.6 489L320.9 492L319.2 495L317.5 498L315.8 501L314 504L312.3 507L310.6 510L308.9 513L307.2 516L305.4 519L303.7 522L302 525L300.3 528L298.6 531L297.4 534L296.1 537L294.8 540L293.4 543L292.1 546L290.8 549L289.4 552L288.1 555L286.8 558L285.4 561M434.7 204L434.6 207L434.5 210L434.4 213L434.3 216L434.2 219M327 471L325.2 474L323.4 477L321.5 480L319.7 483L317.9 486L316.1 489L314.4 492L312.6 495L310.9 498L309.1 501L307.4 504L305.6 507L303.9 510L302.1 513L300.4 516L298.6 519L296.9 522L295.1 525L293.4 528L291.6 531L290.5 534L289.2 537L287.8 540L286.5 543L285.2 546L283.8 549L282.5 552L281.2 555L279.8 558M430.2 204L430.1 207L429.9 210L429.8 213L429.7 216L429.6 219M320.7 471L318.9 474L317 477L315.1 480L313.3 483L311.4 486L309.6 489L307.8 492L306 495L304.3 498L302.5 501L300.7 504L298.9 507L297.1 510L295.4 513L293.6 516L291.8 519L290 522L288.2 525L286.5 528L284.7 531L283.5 534L282.2 537L280.9 540L279.5 543L278.2 546L276.9 549L275.5 552L274.2 555L272.9 558M425.6 204L425.5 207L425.4 210L425.3 213L425.2 216L425 219M314.4 471L312.5 474L310.6 477L308.7 480L306.8 483L304.9 486L303.1 489L301.3 492L299.5 495L297.6 498L295.8 501L294 504L292.2 507L290.4 510L288.6 513L286.8 516L285 519L283.2 522L281.3 525L279.5 528L277.7 531L276.6 534L275.3 537L273.9 540L272.6 543L271.3 546L269.9 549L268.6 552L267.3 555M421 204L420.9 207L420.8 210L420.7 213L420.6 216L420.5 219M308.1 471L306.1 474L304.2 477L302.3 480L300.4 483L298.4 486L296.6 489L294.7 492L292.9 495L291 498L289.2 501L287.4 504L285.5 507L283.7 510L281.8 513L280 516L278.1 519L276.3 522L274.5 525L272.6 528L270.8 531L269.6 534L268.3 537L267 540L265.6 543L264.3 546L263 549L261.6 552M416.5 204L416.4 207L416.3 210L416.1 213L416 216L415.9 219M301.7 471L299.8 474L297.8 477L295.9 480L293.9 483L291.9 486L290 489L288.2 492L286.3 495L284.4 498L282.6 501L280.7 504L278.8 507L276.9 510L275.1 513L273.2 516L271.3 519L269.4 522L267.6 525L265.7 528L263.8 531L262.7 534L261.4 537L260 540L258.7 543L257.4 546L256 549L254.7 552M411.9 204L411.8 207L411.7 210L411.6 213L411.5 216L411.4 219M295.4 471L293.4 474L291.4 477L289.4 480L287.4 483L285.5 486L283.5 489L281.6 492L279.7 495L277.8 498L275.9 501L274 504L272.1 507L270.2 510L268.3 513L266.4 516L264.5 519L262.6 522L260.7 525L258.8 528L256.9 531L255.7 534L254.4 537L253.1 540L251.7 543L250.4 546L249.1 549M407.4 204L407.3 207L407.1 210L407 213L406.9 216L406.8 219M289.1 471L287.1 474L285 477L283 480L281 483L279 486L277 489L275.1 492L273.1 495L271.2 498L269.3 501L267.3 504L265.4 507L263.5 510L261.5 513L259.6 516L257.7 519L255.7 522L253.8 525L251.9 528L249.9 531L248.8 534L247.5 537L246.1 540L244.8 543L243.5 546M402.8 204L402.7 207L402.6 210L402.5 213L402.4 216L402.2 219M282.7 471L280.7 474L278.6 477L276.6 480L274.5 483L272.5 486L270.5 489L268.5 492L266.6 495L264.6 498L262.6 501L260.7 504L258.7 507L256.7 510L254.8 513L252.8 516L250.8 519L248.9 522L246.9 525L244.9 528L243 531L241.8 534L240.5 537L239.2 540L237.8 543L236.5 546M398.2 204L398.1 207L398 210L397.9 213L397.8 216L397.7 219M276.4 471L274.3 474L272.3 477L270.2 480L268.1 483L266 486L264 489L262 492L260 495L258 498L256 501L254 504L252 507L250 510L248 513L246 516L244 519L242 522L240 525L238 528L236 531L234.9 534L233.6 537L232.2 540L230.9 543M393.7 204L393.6 207L393.5 210L393.3 213L393.2 216L393.1 219M270.1 471L268 474L265.9 477L263.7 480L261.6 483L259.5 486L257.5 489L255.4 492L253.4 495L251.4 498L249.4 501L247.3 504L245.3 507L243.3 510L241.2 513L239.2 516L237.2 519L235.2 522L233.1 525L231.1 528L229.1 531L227.9 534L226.6 537L225.3 540M389.1 204L389 207L388.9 210L388.8 213L388.7 216L388.6 219M263.8 471L261.6 474L259.5 477L257.3 480L255.2 483L253 486L251 489L248.9 492L246.8 495L244.8 498L242.7 501L240.7 504L238.6 507L236.5 510L234.5 513L232.4 516L230.4 519L228.3 522L226.2 525L224.2 528L222.1 531L221 534L219.7 537L218.3 540M384.6 204L384.5 207L384.3 210L384.2 213L384.1 216L384 219M257.4 471L255.3 474L253.1 477L250.9 480L248.7 483L246.6 486L244.4 489L242.3 492L240.3 495L238.2 498L236.1 501L234 504L231.9 507L229.8 510L227.7 513L225.6 516L223.5 519L221.4 522L219.4 525L217.3 528L215.2 531L214 534L212.7 537M380 204L379.9 207L379.8 210L379.7 213L379.6 216L379.4 219M251.1 471L248.9 474L246.7 477L244.5 480L242.3 483L240.1 486L237.9 489L235.8 492L233.7 495L231.6 498L229.4 501L227.3 504L225.2 507L223.1 510L221 513L218.8 516L216.7 519L214.6 522L212.5 525L210.3 528L208.2 531L207.1 534M375.4 204L375.3 207L375.2 210L375.1 213L375 216L374.9 219M244.8 471L242.5 474L240.3 477L238.1 480L235.8 483L233.6 486L231.4 489L229.3 492L227.1 495L224.9 498L222.8 501L220.6 504L218.5 507L216.3 510L214.2 513L212 516L209.9 519L207.7 522L205.6 525L203.4 528L201.3 531M370.9 204L370.8 207L370.7 210L370.5 213L370.4 216L370.3 219M238.4 471L236.2 474L233.9 477L231.6 480L229.4 483L227.1 486L224.9 489L222.7 492L220.5 495L218.3 498L216.2 501L214 504L211.8 507L209.6 510L207.4 513L205.2 516L203.1 519L200.9 522L198.7 525L196.5 528L194.3 531M366.3 204L366.2 207L366.1 210L366 213L365.9 216L365.8 219M232.1 471L229.8 474L227.5 477L225.2 480L222.9 483L220.6 486L218.4 489L216.2 492L213.9 495L211.7 498L209.5 501L207.3 504L205.1 507L202.9 510L200.7 513L198.4 516L196.2 519L194 522L191.8 525L189.6 528M361.8 204L361.7 207L361.5 210L361.4 213L361.3 216L361.2 219M225.8 471L223.5 474L221.1 477L218.8 480L216.5 483L214.1 486L211.9 489L209.6 492L207.4 495L205.1 498L202.9 501L200.6 504L198.4 507L196.1 510L193.9 513L191.6 516L189.4 519L187.2 522L184.9 525M357.2 204L357.1 207L357 210L356.9 213L356.8 216L356.6 219M219.5 471L217.1 474L214.7 477L212.4 480L210 483L207.6 486L205.3 489L203.1 492L200.8 495L198.5 498L196.2 501L194 504L191.7 507L189.4 510L187.1 513L184.9 516L182.6 519L180.3 522L178 525M586.6 681L585.2 684L583.9 687L582.6 690L581.2 693L579.9 696L578.6 699L577.2 702L575.9 705L574.6 708L573.2 711L571.9 714L570.6 717L569.2 720L567.9 723L566.6 726L565.3 729L563.9 732L562.6 735L561.3 738L559.9 741L558.6 744L557.3 747L555.9 750L554.6 753L553.3 756L551.9 759L551.5 762M578.8 675L577.5 678L576.1 681L574.8 684L573.5 687L572.1 690L570.8 693L569.5 696L568.1 699L566.8 702L565.5 705L564.1 708L562.8 711L561.5 714L560.2 717L558.8 720L557.5 723L556.2 726L554.8 729L553.5 732L552.2 735L550.8 738L549.5 741L548.2 744L546.8 747L545.5 750L544.2 753L542.8 756L541.5 759L541.1 762M569.7 672L568.4 675L567 678L565.7 681L564.4 684L563 687L561.7 690L560.4 693L559 696L557.7 699L556.4 702L555 705L553.7 708L552.4 711L551.1 714L549.7 717L548.4 720L547.1 723L545.7 726L544.4 729L543.1 732L541.7 735L540.4 738L539.1 741L537.7 744L536.4 747L535.1 750L533.7 753L532.4 756L531.1 759L530.6 762M560.6 669L559.3 672L557.9 675L556.6 678L555.3 681L553.9 684L552.6 687L551.3 690L549.9 693L548.6 696L547.3 699L545.9 702L544.6 705L543.3 708L542 711L540.6 714L539.3 717L538 720L536.6 723L535.3 726L534 729L532.6 732L531.3 735L530 738L528.6 741L527.3 744L526 747L524.6 750L523.3 753L522 756L520.7 759L520.2 762M551.5 666L550.2 669L548.8 672L547.5 675L546.2 678L544.8 681L543.5 684L542.2 687L540.8 690L539.5 693L538.2 696L536.8 699L535.5 702L534.2 705L532.9 708L531.5 711L530.2 714L528.9 717L527.5 720L526.2 723L524.9 726L523.5 729L522.2 732L520.9 735L519.5 738L518.2 741L516.9 744L515.5 747L514.2 750L512.9 753L511.6 756L510.2 759L509.8 762M542.4 663L541.1 666L539.7 669L538.4 672L537.1 675L535.7 678L534.4 681L533.1 684L531.7 687L530.4 690L529.1 693L527.8 696L526.4 699L525.1 702L523.8 705L522.4 708L521.1 711L519.8 714L518.4 717L517.1 720L515.8 723L514.4 726L513.1 729L511.8 732L510.4 735L509.1 738L507.8 741L506.5 744L505.1 747L503.8 750L502.5 753L501.1 756L499.8 759L499.4 762M533.3 660L532 663L530.6 666L529.3 669L528 672L526.6 675L525.3 678L524 681L522.6 684L521.3 687L520 690L518.7 693L517.3 696L516 699L514.7 702L513.3 705L512 708L510.7 711L509.3 714L508 717L506.7 720L505.3 723L504 726L502.7 729L501.3 732L500 735L498.7 738L497.4 741L496 744L494.7 747L493.4 750L492 753L490.7 756L489.4 759L488.9 762M524.2 657L522.9 660L521.5 663L520.2 666L518.9 669L517.5 672L516.2 675L514.9 678L513.5 681L512.2 684L510.9 687L509.6 690L508.2 693L506.9 696L505.6 699L504.2 702L502.9 705L501.6 708L500.2 711L498.9 714L497.6 717L496.2 720L494.9 723L493.6 726L492.2 729L490.9 732L489.6 735L488.3 738L486.9 741L485.6 744L484.3 747L482.9 750L481.6 753L480.3 756L478.9 759L478.5 762M515.1 654L513.8 657L512.4 660L511.1 663L509.8 666L508.4 669L507.1 672L505.8 675L504.4 678L503.1 681L501.8 684L500.5 687L499.1 690L497.8 693L496.5 696L495.1 699L493.8 702L492.5 705L491.1 708L489.8 711L488.5 714L487.1 717L485.8 720L484.5 723L483.1 726L481.8 729L480.5 732L479.2 735L477.8 738L476.5 741L475.2 744L473.8 747L472.5 750L471.2 753L469.8 756L468.5 759L468.1 762M506 651L504.7 654L503.4 657L502 660L500.7 663L499.4 666L498 669L496.7 672L495.4 675L494 678L492.7 681L491.4 684L490 687L488.7 690L487.4 693L486 696L484.7 699L483.4 702L482 705L480.7 708L479.4 711L478 714L476.7 717L475.4 720L474 723L472.7 726L471.4 729L470.1 732L468.7 735L467.4 738L466.1 741L464.7 744L463.4 747L462.1 750L460.7 753L459.4 756L458.1 759L457.6 762M496.9 648L495.6 651L494.3 654L492.9 657L491.6 660L490.3 663L488.9 666L487.6 669L486.3 672L484.9 675L483.6 678L482.3 681L480.9 684L479.6 687L478.3 690L476.9 693L475.6 696L474.3 699L472.9 702L471.6 705L470.3 708L468.9 711L467.6 714L466.3 717L464.9 720L463.6 723L462.3 726L461 729L459.6 732L458.3 735L457 738L455.6 741L454.3 744L453 747L451.6 750L450.3 753L449 756L447.6 759L447.2 762M487.8 645L486.5 648L485.2 651L483.8 654L482.5 657L481.2 660L479.8 663L478.5 666L477.2 669L475.8 672L474.5 675L473.2 678L471.8 681L470.5 684L469.2 687L467.8 690L466.5 693L465.2 696L463.8 699L462.5 702L461.2 705L459.8 708L458.5 711L457.2 714L455.9 717L454.5 720L453.2 723L451.9 726L450.5 729L449.2 732L447.9 735L446.5 738L445.2 741L443.9 744L442.5 747L441.2 750L439.9 753L438.5 756L437.2 759L436.8 762M478.7 642L477.4 645L476.1 648L474.7 651L473.4 654L472.1 657L470.7 660L469.4 663L468.1 666L466.7 669L465.4 672L464.1 675L462.7 678L461.4 681L460.1 684L458.7 687L457.4 690L456.1 693L454.7 696L453.4 699L452.1 702L450.7 705L449.4 708L448.1 711L446.8 714L445.4 717L444.1 720L442.8 723L441.4 726L440.1 729L438.8 732L437.4 735L436.1 738L434.8 741L433.4 744L432.1 747L430.8 750L429.4 753L428.1 756L426.8 759L426.3 762M469.6 639L468.3 642L467 645L465.6 648L464.3 651L463 654L461.6 657L460.3 660L459 663L457.6 666L456.3 669L455 672L453.6 675L452.3 678L451 681L449.6 684L448.3 687L447 690L445.6 693L444.3 696L443 699L441.6 702L440.3 705L439 708L437.7 711L436.3 714L435 717L433.7 720L432.3 723L431 726L429.7 729L428.3 732L427 735L425.7 738L424.3 741L423 744L421.7 747L420.3 750L419 753L417.7 756L416.4 759L415.9 762M460.5 636L459.2 639L457.9 642L456.5 645L455.2 648L453.9 651L452.5 654L451.2 657L449.9 660L448.5 663L447.2 666L445.9 669L444.5 672L443.2 675L441.9 678L440.5 681L439.2 684L437.9 687L436.5 690L435.2 693L433.9 696L432.5 699L431.2 702L429.9 705L428.6 708L427.2 711L425.9 714L424.6 717L423.2 720L421.9 723L420.6 726L419.2 729L417.9 732L416.6 735L415.2 738L413.9 741L412.6 744L411.2 747L409.9 750L408.6 753L407.3 756L405.9 759L405.5 762M451.4 633L450.1 636L448.8 639L447.4 642L446.1 645L444.8 648L443.4 651L442.1 654L440.8 657L439.4 660L438.1 663L436.8 666L435.4 669L434.1 672L432.8 675L431.4 678L430.1 681L428.8 684L427.4 687L426.1 690L424.8 693L423.4 696L422.1 699L420.8 702L419.5 705L418.1 708L416.8 711L415.5 714L414.1 717L412.8 720L411.5 723L410.1 726L408.8 729L407.5 732L406.1 735L404.8 738L403.5 741L402.2 744L400.8 747L399.5 750L398.2 753L396.8 756L395.5 759L395.1 762M442.3 630L441 633L439.7 636L438.3 639L437 642L435.7 645L434.3 648L433 651L431.7 654L430.3 657L429 660L427.7 663L426.3 666L425 669L423.7 672L422.3 675L421 678L419.7 681L418.3 684L417 687L415.7 690L414.4 693L413 696L411.7 699L410.4 702L409 705L407.7 708L406.4 711L405 714L403.7 717L402.4 720L401 723L399.7 726L398.4 729L397 732L395.7 735L394.4 738L393.1 741L391.7 744L390.4 747L389.1 750L387.7 753L386.4 756L385.1 759L384.6 762M433.2 627L431.9 630L430.6 633L429.2 636L427.9 639L426.6 642L425.2 645L423.9 648L422.6 651L421.2 654L419.9 657L418.6 660L417.2 663L415.9 666L414.6 669L413.2 672L411.9 675L410.6 678L409.2 681L407.9 684L406.6 687L405.3 690L403.9 693L402.6 696L401.3 699L399.9 702L398.6 705L397.3 708L395.9 711L394.6 714L393.3 717L391.9 720L390.6 723L389.3 726L387.9 729L386.6 732L385.3 735L384 738L382.6 741L381.3 744L380 747L378.6 750L377.3 753L376 756L374.6 759L374.2 762M424.1 624L422.8 627L421.5 630L420.1 633L418.8 636L417.5 639L416.1 642L414.8 645L413.5 648L412.1 651L410.8 654L409.5 657L408.1 660L406.8 663L405.5 666L404.1 669L402.8 672L401.5 675L400.1 678L398.8 681L397.5 684L396.2 687L394.8 690L393.5 693L392.2 696L390.8 699L389.5 702L388.2 705L386.8 708L385.5 711L384.2 714L382.8 717L381.5 720L380.2 723L378.8 726L377.5 729L376.2 732L374.9 735L373.5 738L372.2 741L370.9 744L369.5 747L368.2 750L366.9 753L365.5 756L364.2 759L363.8 762M415.1 621L413.7 624L412.4 627L411.1 630L409.7 633L408.4 636L407.1 639L405.7 642L404.4 645L403.1 648L401.7 651L400.4 654L399.1 657L397.7 660L396.4 663L395.1 666L393.7 669L392.4 672L391.1 675L389.7 678L388.4 681L387.1 684L385.7 687L384.4 690L383.1 693L381.7 696L380.4 699L379.1 702L377.7 705L376.4 708L375.1 711L373.7 714L372.4 717L371.1 720L369.7 723L368.4 726L367.1 729L365.8 732L364.4 735L363.1 738L361.8 741L360.4 744L359.1 747L357.8 750L356.4 753L355.1 756L353.8 759L353.3 762M406 618L404.6 621L403.3 624L402 627L400.6 630L399.3 633L398 636L396.6 639L395.3 642L394 645L392.6 648L391.3 651L390 654L388.6 657L387.3 660L386 663L384.6 666L383.3 669L382 672L380.6 675L379.3 678L378 681L376.6 684L375.3 687L374 690L372.6 693L371.3 696L370 699L368.6 702L367.3 705L366 708L364.6 711L363.3 714L362 717L360.6 720L359.3 723L358 726L356.7 729L355.3 732L354 735L352.7 738L351.3 741L350 744L348.7 747L347.3 750L346 753L344.7 756L343.3 759L342.9 762M396.9 615L395.5 618L394.2 621L392.9 624L391.5 627L390.2 630L388.9 633L387.5 636L386.2 639L384.9 642L383.5 645L382.2 648L380.9 651L379.5 654L378.2 657L376.9 660L375.5 663L374.2 666L372.9 669L371.5 672L370.2 675L368.9 678L367.5 681L366.2 684L364.9 687L363.5 690L362.2 693L360.9 696L359.5 699L358.2 702L356.9 705L355.5 708L354.2 711L352.9 714L351.6 717L350.2 720L348.9 723L347.6 726L346.2 729L344.9 732L343.6 735L342.2 738L340.9 741L339.6 744L338.2 747L336.9 750L335.6 753L334.2 756L332.9 759L332.5 762M387.8 612L386.4 615L385.1 618L383.8 621L382.4 624L381.1 627L379.8 630L378.4 633L377.1 636L375.8 639L374.4 642L373.1 645L371.8 648L370.4 651L369.1 654L367.8 657L366.4 660L365.1 663L363.8 666L362.4 669L361.1 672L359.8 675L358.4 678L357.1 681L355.8 684L354.4 687L353.1 690L351.8 693L350.4 696L349.1 699L347.8 702L346.4 705L345.1 708L343.8 711L342.5 714L341.1 717L339.8 720L338.5 723L337.1 726L335.8 729L334.5 732L333.1 735L331.8 738L330.5 741L329.1 744L327.8 747L326.5 750L325.1 753L323.8 756L322.5 759L322 762M378.7 609L377.3 612L376 615L374.7 618L373.3 621L372 624L370.7 627L369.3 630L368 633L366.7 636L365.3 639L364 642L362.7 645L361.3 648L360 651L358.7 654L357.3 657L356 660L354.7 663L353.3 666L352 669L350.7 672L349.3 675L348 678L346.7 681L345.3 684L344 687L342.7 690L341.3 693L340 696L338.7 699L337.3 702L336 705L334.7 708L333.4 711L332 714L330.7 717L329.4 720L328 723L326.7 726L325.4 729L324 732L322.7 735L321.4 738L320 741L318.7 744L317.4 747L316 750L314.7 753L313.4 756L312.1 759L311.6 762M369.6 606L368.2 609L366.9 612L365.6 615L364.2 618L362.9 621L361.6 624L360.2 627L358.9 630L357.6 633L356.2 636L354.9 639L353.6 642L352.2 645L350.9 648L349.6 651L348.2 654L346.9 657L345.6 660L344.2 663L342.9 666L341.6 669L340.2 672L338.9 675L337.6 678L336.2 681L334.9 684L333.6 687L332.2 690L330.9 693L329.6 696L328.2 699L326.9 702L325.6 705L324.3 708L322.9 711L321.6 714L320.3 717L318.9 720L317.6 723L316.3 726L314.9 729L313.6 732L312.3 735L310.9 738L309.6 741L308.3 744L306.9 747L305.6 750L304.3 753L303 756L301.6 759L301.2 762M360.5 603L359.1 606L357.8 609L356.5 612L355.1 615L353.8 618L352.5 621L351.1 624L349.8 627L348.5 630L347.1 633L345.8 636L344.5 639L343.1 642L341.8 645L340.5 648L339.1 651L337.8 654L336.5 657L335.1 660L333.8 663L332.5 666L331.1 669L329.8 672L328.5 675L327.1 678L325.8 681L324.5 684L323.1 687L321.8 690L320.5 693L319.1 696L317.8 699L316.5 702L315.2 705L313.8 708L312.5 711L311.2 714L309.8 717L308.5 720L307.2 723L305.8 726L304.5 729L303.2 732L301.8 735L300.5 738L299.2 741L297.9 744L296.5 747L295.2 750L293.9 753L292.5 756L291.2 759L290.8 762M351.4 600L350 603L348.7 606L347.4 609L346 612L344.7 615L343.4 618L342 621L340.7 624L339.4 627L338 630L336.7 633L335.4 636L334 639L332.7 642L331.4 645L330 648L328.7 651L327.4 654L326 657L324.7 660L323.4 663L322 666L320.7 669L319.4 672L318 675L316.7 678L315.4 681L314 684L312.7 687L311.4 690L310.1 693L308.7 696L307.4 699L306.1 702L304.7 705L303.4 708L302.1 711L300.7 714L299.4 717L298.1 720L296.7 723L295.4 726L294.1 729L292.7 732L291.4 735L290.1 738L288.8 741L287.4 744L286.1 747L284.8 750L283.4 753L282.1 756L280.8 759L280.3 762M343.6 594L342.3 597L340.9 600L339.6 603L338.3 606L336.9 609L335.6 612L334.3 615L332.9 618L331.6 621L330.3 624L328.9 627L327.6 630L326.3 633L324.9 636L323.6 639L322.3 642L320.9 645L319.6 648L318.3 651L316.9 654L315.6 657L314.3 660L312.9 663L311.6 666L310.3 669L308.9 672L307.6 675L306.3 678L304.9 681L303.6 684L302.3 687L301 690L299.6 693L298.3 696L297 699L295.6 702L294.3 705L293 708L291.6 711L290.3 714L289 717L287.6 720L286.3 723L285 726L283.6 729L282.3 732L281 735L279.7 738L278.3 741L277 744L275.7 747L274.3 750L273 753L271.7 756L270.3 759L269.9 762M334.5 591L333.2 594L331.8 597L330.5 600L329.2 603L327.8 606L326.5 609L325.2 612L323.8 615L322.5 618L321.2 621L319.8 624L318.5 627L317.2 630L315.8 633L314.5 636L313.2 639L311.8 642L310.5 645L309.2 648L307.8 651L306.5 654L305.2 657L303.8 660L302.5 663L301.2 666L299.8 669L298.5 672L297.2 675L295.8 678L294.5 681L293.2 684L291.9 687L290.5 690L289.2 693L287.9 696L286.5 699L285.2 702L283.9 705L282.5 708L281.2 711L279.9 714L278.5 717L277.2 720L275.9 723L274.5 726L273.2 729L271.9 732L270.6 735L269.2 738L267.9 741L266.6 744L265.2 747L263.9 750L262.6 753L261.2 756L259.9 759L259.5 762M325.4 588L324.1 591L322.8 594L321.4 597L320.1 600L318.8 603L317.4 606L316.1 609L314.8 612L313.4 615L312.1 618L310.8 621L309.4 624L308.1 627L306.8 630L305.4 633L304.1 636L302.8 639L301.4 642L300.1 645L298.8 648L297.4 651L296.1 654L294.8 657L293.4 660L292.1 663L290.8 666L289.4 669L288.1 672L286.8 675L285.4 678L284.1 681L282.8 684L281.4 687L280.1 690L278.8 693L277.4 696L276.1 699L274.8 702L273.4 705L272.1 708L270.8 711L269.4 714L268.1 717L266.8 720L265.4 723L264.1 726L262.8 729L261.5 732L260.1 735L258.8 738L257.5 741L256.1 744L254.8 747L253.5 750L252.1 753L250.8 756L249.5 759L249 762M316.3 585L315 588L313.7 591L312.3 594L311 597L309.7 600L308.3 603L307 606L305.7 609L304.3 612L303 615L301.7 618L300.3 621L299 624L297.7 627L296.3 630L295 633L293.7 636L292.3 639L291 642L289.7 645L288.3 648L287 651L285.7 654L284.3 657L283 660L281.7 663L280.3 666L279 669L277.7 672L276.3 675L275 678L273.7 681L272.3 684L271 687L269.7 690L268.3 693L267 696L265.7 699L264.3 702L263 705L261.7 708L260.3 711L259 714L257.7 717L256.4 720L255 723L253.7 726L252.4 729L251 732L249.7 735L248.4 738L247 741L245.7 744L244.4 747L243 750L241.7 753L240.4 756L239 759L238.6 762M307.2 582L305.9 585L304.6 588L303.2 591L301.9 594L300.6 597L299.2 600L297.9 603L296.6 606L295.2 609L293.9 612L292.6 615L291.2 618L289.9 621L288.6 624L287.2 627L285.9 630L284.6 633L283.2 636L281.9 639L280.6 642L279.2 645L277.9 648L276.6 651L275.2 654L273.9 657L272.6 660L271.2 663L269.9 666L268.6 669L267.2 672L265.9 675L264.6 678L263.2 681L261.9 684L260.6 687L259.2 690L257.9 693L256.6 696L255.2 699L253.9 702L252.6 705L251.2 708L249.9 711L248.6 714L247.3 717L245.9 720L244.6 723L243.3 726L241.9 729L240.6 732L239.3 735L237.9 738L236.6 741L235.3 744L233.9 747L232.6 750L231.3 753L229.9 756L228.6 759L228.2 762M298.1 579L296.8 582L295.5 585L294.1 588L292.8 591L291.5 594L290.1 597L288.8 600L287.5 603L286.1 606L284.8 609L283.5 612L282.1 615L280.8 618L279.5 621L278.1 624L276.8 627L275.5 630L274.1 633L272.8 636L271.5 639L270.1 642L268.8 645L267.5 648L266.1 651L264.8 654L263.5 657L262.1 660L260.8 663L259.5 666L258.1 669L256.8 672L255.5 675L254.1 678L252.8 681L251.5 684L250.1 687L248.8 690L247.5 693L246.1 696L244.8 699L243.5 702L242.1 705L240.8 708L239.5 711L238.2 714L236.8 717L235.5 720L234.2 723L232.8 726L231.5 729L230.2 732L228.8 735L227.5 738L226.2 741L224.8 744L223.5 747L222.2 750L220.8 753L219.5 756L218.2 759L217.7 762M289 576L287.7 579L286.4 582L285 585L283.7 588L282.4 591L281 594L279.7 597L278.4 600L277 603L275.7 606L274.4 609L273 612L271.7 615L270.4 618L269 621L267.7 624L266.4 627L265 630L263.7 633L262.4 636L261 639L259.7 642L258.4 645L257 648L255.7 651L254.4 654L253 657L251.7 660L250.4 663L249 666L247.7 669L246.4 672L245 675L243.7 678L242.4 681L241 684L239.7 687L238.4 690L237 693L235.7 696L234.4 699L233 702L231.7 705L230.4 708L229.1 711L227.7 714L226.4 717L225.1 720L223.7 723L222.4 726L221.1 729L219.7 732L218.4 735L217.1 738L215.7 741L214.4 744L213.1 747L211.7 750L210.4 753L209.1 756L207.8 759L207.3 762M279.9 573L278.6 576L277.3 579L275.9 582L274.6 585L273.3 588L271.9 591L270.6 594L269.3 597L267.9 600L266.6 603L265.3 606L263.9 609L262.6 612L261.3 615L259.9 618L258.6 621L257.3 624L255.9 627L254.6 630L253.3 633L251.9 636L250.6 639L249.3 642L247.9 645L246.6 648L245.3 651L243.9 654L242.6 657L241.3 660L239.9 663L238.6 666L237.3 669L235.9 672L234.6 675L233.3 678L231.9 681L230.6 684L229.3 687L227.9 690L226.6 693L225.3 696L223.9 699L222.6 702L221.3 705L220 708L218.6 711L217.3 714L216 717L214.6 720L213.3 723L212 726L210.6 729L209.3 732L208 735L206.6 738L205.3 741L204 744L202.6 747L201.3 750L200 753L198.7 756L197.3 759L196.9 762M270.8 570L269.5 573L268.2 576L266.8 579L265.5 582L264.2 585L262.8 588L261.5 591L260.2 594L258.8 597L257.5 600L256.2 603L254.8 606L253.5 609L252.2 612L250.8 615L249.5 618L248.2 621L246.8 624L245.5 627L244.2 630L242.8 633L241.5 636L240.2 639L238.8 642L237.5 645L236.2 648L234.8 651L233.5 654L232.2 657L230.8 660L229.5 663L228.2 666L226.8 669L225.5 672L224.2 675L222.8 678L221.5 681L220.2 684L218.8 687L217.5 690L216.2 693L214.8 696L213.5 699L212.2 702L210.9 705L209.5 708L208.2 711L206.9 714L205.5 717L204.2 720L202.9 723L201.5 726L200.2 729L198.9 732L197.5 735L196.2 738L194.9 741L193.6 744L192.2 747L190.9 750L189.6 753L188.2 756L186.9 759L186.4 762M261.7 567L260.4 570L259.1 573L257.7 576L256.4 579L255.1 582L253.7 585L252.4 588L251.1 591L249.7 594L248.4 597L247.1 600L245.7 603L244.4 606L243.1 609L241.7 612L240.4 615L239.1 618L237.7 621L236.4 624L235.1 627L233.7 630L232.4 633L231.1 636L229.7 639L228.4 642L227.1 645L225.7 648L224.4 651L223.1 654L221.7 657L220.4 660L219.1 663L217.7 666L216.4 669L215.1 672L213.7 675L212.4 678L211.1 681L209.7 684L208.4 687L207.1 690L205.8 693L204.4 696L203.1 699L201.8 702L200.4 705L199.1 708L197.8 711L196.4 714L195.1 717L193.8 720L192.4 723L191.1 726L189.8 729L188.4 732L187.1 735L185.8 738L184.5 741L183.1 744L181.8 747L180.5 750L179.1 753L177.8 756L176.5 759L176 762M252.6 564L251.3 567L250 570L248.6 573L247.3 576L246 579L244.6 582L243.3 585L242 588L240.6 591L239.3 594L238 597L236.6 600L235.3 603L234 606L232.6 609L231.3 612L230 615L228.6 618L227.3 621L226 624L224.6 627L223.3 630L222 633L220.6 636L219.3 639L218 642L216.6 645L215.3 648L214 651L212.6 654L211.3 657L210 660L208.6 663L207.3 666L206 669L204.6 672L203.3 675L202 678L200.6 681L199.3 684L198 687L196.7 690L195.3 693L194 696L192.7 699L191.3 702L190 705L188.7 708L187.3 711L186 714L184.7 717L183.3 720L182 723L180.7 726L179.3 729L178 732L176.7 735L175.4 738L174 741L172.7 744L171.4 747L170 750L168.7 753L167.4 756L166 759L165.6 762M243.5 561L242.2 564L240.9 567L239.5 570L238.2 573L236.9 576L235.5 579L234.2 582L232.9 585L231.5 588L230.2 591L228.9 594L227.5 597L226.2 600L224.9 603L223.5 606L222.2 609L220.9 612L219.5 615L218.2 618L216.9 621L215.5 624L214.2 627L212.9 630L211.5 633L210.2 636L208.9 639L207.5 642L206.2 645L204.9 648L203.5 651L202.2 654L200.9 657L199.5 660L198.2 663L196.9 666L195.5 669L194.2 672L192.9 675L191.5 678L190.2 681L188.9 684L187.6 687L186.2 690L184.9 693L183.6 696L182.2 699L180.9 702L179.6 705L178.2 708L176.9 711L175.6 714L174.2 717L172.9 720L171.6 723L170.2 726L168.9 729L167.6 732L166.3 735L164.9 738L163.6 741L162.3 744L160.9 747L159.6 750L158.3 753L156.9 756L155.6 759L155.2 762M234.5 558L233.1 561L231.8 564L230.5 567L229.1 570L227.8 573L226.5 576L225.1 579L223.8 582L222.5 585L221.1 588L219.8 591L218.5 594L217.1 597L215.8 600L214.5 603L213.1 606L211.8 609L210.5 612L209.1 615L207.8 618L206.5 621L205.1 624L203.8 627L202.5 630L201.1 633L199.8 636L198.5 639L197.1 642L195.8 645L194.5 648L193.1 651L191.8 654L190.5 657L189.1 660L187.8 663L186.5 666L185.1 669L183.8 672L182.5 675L181.1 678L179.8 681L178.5 684L177.1 687L175.8 690L174.5 693L173.1 696L171.8 699L170.5 702L169.1 705L167.8 708L166.5 711L165.1 714L163.8 717L162.5 720L161.1 723L159.8 726L158.5 729L157.2 732L155.8 735L154.5 738L153.2 741L151.8 744L150.5 747L149.2 750L147.8 753L146.5 756L145.2 759L144.7 762M225.4 555L224 558L222.7 561L221.4 564L220 567L218.7 570L217.4 573L216 576L214.7 579L213.4 582L212 585L210.7 588L209.4 591L208 594L206.7 597L205.4 600L204 603L202.7 606L201.4 609L200 612L198.7 615L197.4 618L196 621L194.7 624L193.4 627L192 630L190.7 633L189.4 636L188 639L186.7 642L185.4 645L184 648L182.7 651L181.4 654L180 657L178.7 660L177.4 663L176 666L174.7 669L173.4 672L172 675L170.7 678L169.4 681L168 684L166.7 687L165.4 690L164 693L162.7 696L161.4 699L160 702L158.7 705L157.4 708L156 711L154.7 714L153.4 717L152.1 720L150.7 723L149.4 726L148.1 729L146.7 732L145.4 735L144.1 738L142.7 741L141.4 744L140.1 747L138.7 750L137.4 753L136.1 756L134.7 759L134.3 762M216.3 552L214.9 555L213.6 558L212.3 561L210.9 564L209.6 567L208.3 570L206.9 573L205.6 576L204.3 579L202.9 582L201.6 585L200.3 588L198.9 591L197.6 594L196.3 597L194.9 600L193.6 603L192.3 606L190.9 609L189.6 612L188.3 615L186.9 618L185.6 621L184.3 624L182.9 627L181.6 630L180.3 633L178.9 636L177.6 639L176.3 642L174.9 645L173.6 648L172.3 651L170.9 654L169.6 657L168.3 660L166.9 663L165.6 666L164.3 669L162.9 672L161.6 675L160.3 678L158.9 681L157.6 684L156.3 687L154.9 690L153.6 693L152.3 696L150.9 699L149.6 702L148.3 705L146.9 708L145.6 711L144.3 714L143 717L141.6 720L140.3 723L139 726L137.6 729L136.3 732L135 735L133.6 738L132.3 741L131 744L129.6 747L128.3 750L127 753L125.6 756L124.3 759L123.9 762M207.2 549L205.8 552L204.5 555L203.2 558L201.8 561L200.5 564L199.2 567L197.8 570L196.5 573L195.2 576L193.8 579L192.5 582L191.2 585L189.8 588L188.5 591L187.2 594L185.8 597L184.5 600L183.2 603L181.8 606L180.5 609L179.2 612L177.8 615L176.5 618L175.2 621L173.8 624L172.5 627L171.2 630L169.8 633L168.5 636L167.2 639L165.8 642L164.5 645L163.2 648L161.8 651L160.5 654L159.2 657L157.8 660L156.5 663L155.2 666L153.8 669L152.5 672L151.2 675L149.8 678L148.5 681L147.2 684L145.8 687L144.5 690L143.2 693L141.8 696L140.5 699L139.2 702L137.8 705L136.5 708L135.2 711L133.9 714L132.5 717L131.2 720L129.9 723L128.5 726L127.2 729L125.9 732L124.5 735L123.2 738L121.9 741L120.5 744L119.2 747L117.9 750L116.5 753L115.2 756L113.9 759L113.4 762M198.1 546L196.7 549L195.4 552L194.1 555L192.7 558L191.4 561L190.1 564L188.7 567L187.4 570L186.1 573L184.7 576L183.4 579L182.1 582L180.7 585L179.4 588L178.1 591L176.7 594L175.4 597L174.1 600L172.7 603L171.4 606L170.1 609L168.7 612L167.4 615L166.1 618L164.7 621L163.4 624L162.1 627L160.7 630L159.4 633L158.1 636L156.7 639L155.4 642L154.1 645L152.7 648L151.4 651L150.1 654L148.7 657L147.4 660L146.1 663L144.7 666L143.4 669L142.1 672L140.7 675L139.4 678L138.1 681L136.7 684L135.4 687L134.1 690L132.7 693L131.4 696L130.1 699L128.7 702L127.4 705L126.1 708L124.8 711L123.4 714L122.1 717L120.8 720L119.4 723L118.1 726L116.8 729L115.4 732L114.1 735L112.8 738L111.4 741L110.1 744L108.8 747L107.4 750L106.1 753L104.8 756L103.5 759L103 762M189 543L187.6 546L186.3 549L185 552L183.6 555L182.3 558L181 561L179.6 564L178.3 567L177 570L175.6 573L174.3 576L173 579L171.6 582L170.3 585L169 588L167.6 591L166.3 594L165 597L163.6 600L162.3 603L161 606L159.6 609L158.3 612L157 615L155.6 618L154.3 621L153 624L151.6 627L150.3 630L149 633L147.6 636L146.3 639L145 642L143.6 645L142.3 648L141 651L139.6 654L138.3 657L137 660L135.6 663L134.3 666L133 669L131.6 672L130.3 675L129 678L127.6 681L126.3 684L125 687L123.6 690L122.3 693L121 696L119.6 699L118.3 702L117 705L115.7 708L114.3 711L113 714L111.7 717L110.3 720L109 723L107.7 726L106.3 729L105 732L103.7 735L102.3 738L101 741L99.7 744L98.3 747L97 750L95.7 753L94.4 756L93 759L92.6 762M179.9 540L178.5 543L177.2 546L175.9 549L174.5 552L173.2 555L171.9 558L170.5 561L169.2 564L167.9 567L166.5 570L165.2 573L163.9 576L162.5 579L161.2 582L159.9 585L158.5 588L157.2 591L155.9 594L154.5 597L153.2 600L151.9 603L150.5 606L149.2 609L147.9 612L146.5 615L145.2 618L143.9 621L142.5 624L141.2 627L139.9 630L138.5 633L137.2 636L135.9 639L134.5 642L133.2 645L131.9 648L130.5 651L129.2 654L127.9 657L126.5 660L125.2 663L123.9 666L122.5 669L121.2 672L119.9 675L118.5 678L117.2 681L115.9 684L114.5 687L113.2 690L111.9 693L110.6 696L109.2 699L107.9 702L106.6 705L105.2 708L103.9 711L102.6 714L101.2 717L99.9 720L98.6 723L97.2 726L95.9 729L94.6 732L93.2 735L91.9 738L90.6 741L89.3 744L87.9 747L86.6 750L85.3 753L83.9 756L82.6 759L82.2 762M170.8 537L169.4 540L168.1 543L166.8 546L165.4 549L164.1 552L162.8 555L161.4 558L160.1 561L158.8 564L157.4 567L156.1 570L154.8 573L153.4 576L152.1 579L150.8 582L149.4 585L148.1 588L146.8 591L145.4 594L144.1 597L142.8 600L141.4 603L140.1 606L138.8 609L137.4 612L136.1 615L134.8 618L133.4 621L132.1 624L130.8 627L129.4 630L128.1 633L126.8 636L125.4 639L124.1 642L122.8 645L121.4 648L120.1 651L118.8 654L117.4 657L116.1 660L114.8 663L113.4 666L112.1 669L110.8 672L109.4 675L108.1 678L106.8 681L105.4 684L104.1 687L102.8 690L101.5 693L100.1 696L98.8 699L97.5 702L96.1 705L94.8 708L93.5 711L92.1 714L90.8 717L89.5 720L88.1 723L86.8 726L85.5 729L84.1 732L82.8 735L81.5 738L80.2 741L78.8 744L77.5 747L76.2 750L74.8 753L73.5 756L72.2 759L71.7 762M161.7 534L160.3 537L159 540L157.7 543L156.3 546L155 549L153.7 552L152.3 555L151 558L149.7 561L148.3 564L147 567L145.7 570L144.3 573L143 576L141.7 579L140.3 582L139 585L137.7 588L136.3 591L135 594L133.7 597L132.3 600L131 603L129.7 606L128.3 609L127 612L125.7 615L124.3 618L123 621L121.7 624L120.3 627L119 630L117.7 633L116.3 636L115 639L113.7 642L112.3 645L111 648L109.7 651L108.3 654L107 657L105.7 660L104.3 663L103 666L101.7 669L100.3 672L99 675L97.7 678L96.3 681L95 684L93.7 687L92.4 690L91 693L89.7 696L88.4 699L87 702L85.7 705L84.4 708L83 711L81.7 714L80.4 717L79 720L77.7 723L76.4 726L75 729L73.7 732L72.4 735L71.1 738L69.7 741L68.4 744L67.1 747L65.7 750L64.4 753L63.1 756L61.7 759L61.3 762M152.4 531L151.2 534L149.9 537L148.6 540L147.2 543L145.9 546L144.6 549L143.2 552L141.9 555L140.6 558L139.2 561L137.9 564L136.6 567L135.2 570L133.9 573L132.6 576L131.2 579L129.9 582L128.6 585L127.2 588L125.9 591L124.6 594L123.2 597L121.9 600L120.6 603L119.2 606L117.9 609L116.6 612L115.2 615L113.9 618L112.6 621L111.2 624L109.9 627L108.6 630L107.2 633L105.9 636L104.6 639L103.2 642L101.9 645L100.6 648L99.2 651L97.9 654L96.6 657L95.2 660L93.9 663L92.6 666L91.2 669L89.9 672L88.6 675L87.2 678L85.9 681L84.6 684L83.3 687L81.9 690L80.6 693L79.3 696L77.9 699L76.6 702L75.3 705L73.9 708L72.6 711L71.3 714L69.9 717L68.6 720L67.3 723L65.9 726L64.6 729L63.3 732L62 735L60.6 738L59.3 741L58 744L56.6 747L55.3 750L54 753L52.6 756L51.3 759L50.9 762M142.2 525L142.1 528L142 531L140.8 534L139.5 537L138.2 540L136.8 543L135.5 546L134.2 549L132.8 552L131.5 555L130.2 558L128.8 561L127.5 564L126.2 567L124.8 570L123.5 573L122.2 576L120.8 579L119.5 582L118.2 585L116.8 588L115.5 591L114.2 594L112.8 597L111.5 600L110.2 603L108.8 606L107.5 609L106.2 612L104.8 615L103.5 618L102.2 621L100.8 624L99.5 627L98.2 630L96.8 633L95.5 636L94.2 639L92.8 642L91.5 645L90.2 648L88.8 651L87.5 654L86.2 657L84.8 660L83.5 663L82.2 666L80.8 669L79.5 672L78.2 675L76.8 678L75.5 681L74.2 684L72.8 687L71.5 690L70.2 693L68.8 696L67.5 699L66.2 702L64.8 705L63.5 708L62.2 711L60.8 714L59.5 717L58.2 720L56.8 723L55.5 726L54.2 729L52.9 732L51.5 735L50.2 738L48.9 741L47.5 744L46.2 747L44.9 750L43.5 753L42.2 756L40.9 759L40.4 762M560.3 221L559 224L557.6 227L556.3 230L555 233L553.6 236L552.3 239L550.9 242L549.6 245L548.3 248L546.9 251L545.6 254L544.3 257L542.9 260L541.6 263L540.3 266L538.9 269L537.6 272L536.3 275L534.9 278L533.6 281L532.3 284L530.9 287L529.6 290L528.3 293L526.9 296L525.6 299L524.2 302L522.9 305L521.6 308L520.2 311L518.9 314L517.6 317L516.2 320L514.9 323L513.6 326L512.2 329L510.9 332L509.6 335L508.2 338L506.9 341L505.6 344L504.2 347L502.9 350L501.6 353L500.2 356L498.9 359L497.6 362L496.2 365L494.9 368L493.5 371L492.2 374L490.9 377L489.5 380L488.2 383L486.9 386L485.5 389L484.2 392L482.9 395L481.5 398L480.2 401L478.9 404L477.5 407L476.2 410L474.9 413L473.5 416L472.2 419L470.9 422L469.5 425L468.2 428L466.8 431L465.5 434L464.2 437L462.8 440L461.5 443L460.2 446L458.8 449L457.5 452L456.2 455L454.8 458L453.5 461L452.2 464L450.8 467L449.5 470M565.6 221L564.3 224L562.9 227L561.6 230L560.3 233L558.9 236L557.6 239L556.2 242L554.9 245L553.6 248L552.2 251L550.9 254L549.6 257L548.2 260L546.9 263L545.6 266L544.2 269L542.9 272L541.6 275L540.2 278L538.9 281L537.6 284L536.2 287L534.9 290L533.6 293L532.2 296L530.9 299L529.6 302L528.2 305L526.9 308L525.5 311L524.2 314L522.9 317L521.5 320L520.2 323L518.9 326L517.5 329L516.2 332L514.9 335L513.5 338L512.2 341L510.9 344L509.5 347L508.2 350L506.9 353L505.5 356L504.2 359L502.9 362L501.5 365L500.2 368L498.8 371L497.5 374L496.2 377L494.8 380L493.5 383L492.2 386L490.8 389L489.5 392L488.2 395L486.8 398L485.5 401L484.2 404L482.8 407L481.5 410L480.2 413L478.8 416L477.5 419L476.2 422L474.8 425L473.5 428L472.1 431L470.8 434L469.5 437L468.1 440L466.8 443L465.5 446L464.1 449L462.8 452L461.5 455L460.1 458L458.8 461L457.5 464L456.1 467L454.8 470M570.9 221L569.6 224L568.2 227L566.9 230L565.6 233L564.2 236L562.9 239L561.5 242L560.2 245L558.9 248L557.5 251L556.2 254L554.9 257L553.5 260L552.2 263L550.9 266L549.5 269L548.2 272L546.9 275L545.5 278L544.2 281L542.9 284L541.5 287L540.2 290L538.9 293L537.5 296L536.2 299L534.9 302L533.5 305L532.2 308L530.8 311L529.5 314L528.2 317L526.8 320L525.5 323L524.2 326L522.8 329L521.5 332L520.2 335L518.8 338L517.5 341L516.2 344L514.8 347L513.5 350L512.2 353L510.8 356L509.5 359L508.1 362L506.8 365L505.5 368L504.1 371L502.8 374L501.5 377L500.1 380L498.8 383L497.5 386L496.1 389L494.8 392L493.5 395L492.1 398L490.8 401L489.5 404L488.1 407L486.8 410L485.5 413L484.1 416L482.8 419L481.4 422L480.1 425L478.8 428L477.4 431L476.1 434L474.8 437L473.4 440L472.1 443L470.8 446L469.4 449L468.1 452L466.8 455L465.4 458L464.1 461L462.8 464L461.4 467L460.1 470M576.2 221L574.9 224L573.5 227L572.2 230L570.9 233L569.5 236L568.2 239L566.9 242L565.5 245L564.2 248L562.8 251L561.5 254L560.2 257L558.8 260L557.5 263L556.2 266L554.8 269L553.5 272L552.2 275L550.8 278L549.5 281L548.2 284L546.8 287L545.5 290L544.2 293L542.8 296L541.5 299L540.2 302L538.8 305L537.5 308L536.1 311L534.8 314L533.5 317L532.1 320L530.8 323L529.5 326L528.1 329L526.8 332L525.5 335L524.1 338L522.8 341L521.5 344L520.1 347L518.8 350L517.5 353L516.1 356L514.8 359L513.5 362L512.1 365L510.8 368L509.4 371L508.1 374L506.8 377L505.4 380L504.1 383L502.8 386L501.4 389L500.1 392L498.8 395L497.4 398L496.1 401L494.8 404L493.4 407L492.1 410L490.8 413L489.4 416L488.1 419L486.8 422L485.4 425L484.1 428L482.7 431L481.4 434L480.1 437L478.7 440L477.4 443L476.1 446L474.7 449L473.4 452L472.1 455L470.7 458L469.4 461L468.1 464L466.7 467L465.4 470M473.4 464L472 467L470.7 470M579 221L567.5 254.5L555.8 279L545 304L510 379L478 455M300 580.8L587 679.5M300 567L592.3 667.6M300 560.2L595 661.6M300 553.3L597.6 655.7M300 546.4L600.3 649.7M300 539.6L602.9 643.8M300 532.7L605.6 637.8M300 525.8L608.2 631.9M300 519L610.9 625.9M300 512.1L613.6 620M300 505.2L616.2 614M300 498.4L618.9 608M300 491.5L621.5 602.1M300 484.6L624.2 596.1M300 477.7L626.8 590.2M300 470.9L629.5 584.2M300 464L632.1 578.3M300 457.1L634.8 572.3M300 450.3L637.5 566.4M300 443.4L640.1 560.4M300 437.3L642.8 554.5M300 431.3L645.4 548.5M300 425.3L648.1 542.5M300 419.3L650.7 536.6M300 413.4L653 530.6M300 408.1L653.3 524.5M300 402.8L653.6 518.4M300 397.5L653.9 512.3M480 450.1L654.1 506.2M440 438.1L480 450.1M482.2 445.1L654.4 500.1M442.2 433.1L482.2 445.1M484.3 440L654.7 494M444.3 428L484.3 440M486.5 434.9L655 487.9M446.5 422.9L486.5 434.9M488.6 429.8L655.4 481.8M448.6 417.8L488.6 429.8M490.8 424.7L655.8 475.7M450.8 412.7L490.8 424.7M492.9 419.5L656.3 469.6M452.9 407.5L492.9 419.5M495.1 414.4L656.7 463.6M455.1 402.4L495.1 414.4M497.3 409.2L657.2 457.5M457.3 397.2L497.3 409.2M499.5 404L657.6 451.4M459.5 392L499.5 404M501.6 398.9L658 445.3M461.6 386.9L501.6 398.9M503.8 393.7L658.5 439.2M463.8 381.7L503.8 393.7M506 388.5L658.9 433.1M466 376.5L506 388.5M508.2 383.3L659.4 427.1M468.2 371.3L508.2 383.3M510.4 378.1L659.8 421M470.4 366.1L510.4 378.1M512.8 373L660.3 414.9M472.8 361L512.8 373M515.2 367.8L660.7 408.8M475.2 355.8L515.2 367.8M517.6 362.6L661.1 402.7M477.6 350.6L517.6 362.6M520.1 357.5L661.6 396.6M480.1 345.5L520.1 357.5M522.5 352.3L662 390.6M482.5 340.3L522.5 352.3M524.9 347.1L662.5 384.5M484.9 335.1L524.9 347.1M527.4 341.8L662.9 378.4M487.4 329.8L527.4 341.8M529.9 336.3L663.2 372.3M489.9 324.3L529.9 336.3M532.5 330.8L663.6 366.2M492.5 318.8L532.5 330.8M535.1 325.3L663.9 360.1M495.1 313.3L535.1 325.3M537.6 319.8L664.3 354M497.6 307.8L537.6 319.8M540.2 314.3L664.6 347.9M500.2 302.3L540.2 314.3M542.7 308.8L665 341.8M502.7 296.8L542.7 308.8M545.3 303.3L665.3 335.7M505.3 291.3L545.3 303.3M547.7 297.8L665.7 329.7M507.7 285.8L547.7 297.8M550.1 292.3L666 323.6M510.1 280.3L550.1 292.3M552.5 286.7L666.3 317.5M512.5 274.7L552.5 286.7M554.9 281.2L666.7 311.4M514.9 269.2L554.9 281.2M557.4 275.7L667 305.3M517.4 263.7L557.4 275.7M560 270.2L667.4 299.2M520 258.2L560 270.2M562.6 264.7L667.7 293.1M522.6 252.7L562.6 264.7M565.2 259.3L668.1 287M525.2 247.3L565.2 259.3M567.8 253.8L668.4 280.9M527.8 241.8L567.8 253.8M569.7 248.1L668.8 274.8M529.7 236.1L569.7 248.1M571.6 242.4L669.1 268.8M531.6 230.4L571.6 242.4M573.6 236.8L669.5 262.7M533.6 224.8L573.6 236.8M575.5 231.1L669.8 256.6M535.5 219.1L575.5 231.1M577.5 225.5L670.1 250.5M537.5 213.5L577.5 225.5M300 144.4L670.3 244.4M300 138.2L670.6 238.3M300 132.1L670.8 232.2M300 125.9L671 226.1M300 119.8L671.2 220M540 204.3L587 218.8M540 199.3L587 213.8M300 590.8L700 728.4M300 601.1L700 738.7M300 611.4L700 749M300 621.7L700 759.3M300 632L700 769.6M300 642.3L700 779.9M300 652.6L700 790.2M300 662.9L700 800.5M300 673.2L700 810.8M300 683.5L700 821.1M300 693.8L700 831.4M300 704.1L700 841.7M300 714.4L700 852M368.5 604.1L361.7 588M368.5 604.1L367.8 590.1M368.5 604.1L373.8 592.1M368.5 604.1L379.8 594.2M368.5 604.1L385.9 596.3M386.6 610.3L391.9 598.4M404.7 616.5L397.9 600.4M404.7 616.5L404 602.5M404.7 616.5L410 604.6M404.7 616.5L416 606.7M404.7 616.5L422.1 608.7M422.8 622.7L428.1 610.8M440.9 629L434.1 612.9M440.9 629L440.2 615M440.9 629L446.2 617M440.9 629L452.2 619.1M440.9 629L458.3 621.2M459 635.2L464.3 623.3M477.1 641.4L470.3 625.3M477.1 641.4L476.4 627.4M477.1 641.4L482.4 629.5M477.1 641.4L488.4 631.6M477.1 641.4L494.5 633.6M495.2 647.6L500.5 635.7M513.3 653.9L506.5 637.8M513.3 653.9L512.6 639.9M513.3 653.9L518.6 641.9M513.3 653.9L524.6 644M513.3 653.9L530.7 646.1M531.4 660.1L536.7 648.2M549.5 666.3L542.7 650.3M549.5 666.3L548.8 652.3M549.5 666.3L554.8 654.4M549.5 666.3L560.8 656.5M549.5 666.3L566.9 658.5M567.6 672.6L572.9 660.6M585.7 678.8L578.9 662.7M585.7 678.8L585 664.8M585.7 678.8L591 666.9M585.7 678.8L597 668.9M585.7 678.8L603.1 671M603.8 685L609.1 673.1" fill="none" stroke="#008c00" stroke-width="1"/><polygon points="644.5,537 647,537 646,543 643.5,543" fill="#100800"/></g><polygon points="559,212 670,253 662.8,380 655,487 653,530.5 587,680 576,704 340,704" fill="none" stroke="#008c00" stroke-width="1"/><g clip-path="url(#cL2)"><polygon points="653,530.5 875,503.5 789,704 576,704 587,680" fill="#e4ff00"/><polygon points="861,524 864,524 842.5,572 840,572" fill="#ffa800"/><path d="M653 530.5L591.7 668.4M660.4 529.6L599.3 667.2M667.8 528.7L606.9 666M675.2 527.8L614.5 664.9M682.6 526.9L622.1 663.7M690 526L629.6 662.5M697.4 525.1L637.2 661.3M704.8 524.2L644.8 660.1M712.2 523.3L652.4 659M719.6 522.4L660 657.8M727 521.5L667.6 656.6M734.4 520.6L675.2 655.4M741.8 519.7L682.7 654.2M749.2 518.8L690.3 653.1M756.6 517.9L697.9 651.9M764 517L705.5 650.7M771.4 516.1L713.1 649.5M778.8 515.2L720.7 648.4M786.2 514.3L728.3 647.2M793.6 513.4L735.8 646M801 512.5L743.4 644.8M808.4 511.6L751 643.6M815.8 510.7L758.6 642.5M823.2 509.8L766.2 641.3M830.6 508.9L773.8 640.1M838 508L781.4 638.9M845.4 507.1L788.9 637.8M852.8 506.2L796.5 636.6M860.2 505.3L804.1 635.4M867.6 504.4L811.7 634.2M875 503.5L819.3 633M653 530.5L875 503.5M650.6 535.8L872.9 508.5M648.3 541.1L870.7 513.5M645.9 546.4L868.6 518.4M643.6 551.7L866.4 523.4M641.2 557L864.3 528.4M638.9 562.3L862.1 533.4M636.5 567.6L860 538.4M634.1 572.9L857.9 543.4M631.8 578.2L855.7 548.3M629.4 583.5L853.6 553.3M627.1 588.8L851.4 558.3M624.7 594.1L849.3 563.3M622.4 599.4L847.1 568.3M620 604.8L845 573.2M617.6 610.1L842.9 578.2M615.3 615.4L840.7 583.2M612.9 620.7L838.6 588.2M610.6 626L836.4 593.2M608.2 631.3L834.3 598.2M605.9 636.6L832.1 603.1M603.5 641.9L830 608.1M601.1 647.2L827.9 613.1M598.8 652.5L825.7 618.1M596.4 657.8L823.6 623.1M594.1 663.1L821.4 628.1M591.7 668.4L819.3 633M587 679L815 643M587 679L558 742.7M598.4 677.2L569.5 740.9M609.8 675.4L581 739.1M621.2 673.6L592.4 737.3M632.6 671.8L603.9 735.5M644 670L615.4 733.7M655.4 668.2L626.9 731.9M666.8 666.4L638.4 730.1M678.2 664.6L649.8 728.3M689.6 662.8L661.3 726.5M701 661L672.8 724.7M712.4 659.2L684.3 722.9M723.8 657.4L695.8 721.1M735.2 655.6L707.2 719.3M746.6 653.8L718.7 717.5M758 652L730.2 715.7M769.4 650.2L741.7 713.9M780.8 648.4L753.2 712.1M792.2 646.6L764.6 710.3M803.6 644.8L776.1 708.5M815 643L787.6 706.7M587 679L815 643M583.4 687L811.6 651M579.8 694.9L808.1 658.9M576.1 702.9L804.7 666.9M572.5 710.9L801.3 674.9M568.9 718.8L797.9 682.8M565.2 726.8L794.5 690.8M561.6 734.7L791 698.7M558 742.7L787.6 706.7M587 679L576.5 670.8M587 679L584.1 669.6M587 679L591.7 668.4M587 679L599.3 667.2M587 679L606.9 666M609.8 675.4L614.5 664.9M632.6 671.8L622.1 663.7M632.6 671.8L629.6 662.5M632.6 671.8L637.2 661.3M632.6 671.8L644.8 660.1M632.6 671.8L652.4 659M655.4 668.2L660 657.8M678.2 664.6L667.6 656.6M678.2 664.6L675.2 655.4M678.2 664.6L682.7 654.2M678.2 664.6L690.3 653.1M678.2 664.6L697.9 651.9M701 661L705.5 650.7M723.8 657.4L713.1 649.5M723.8 657.4L720.7 648.4M723.8 657.4L728.3 647.2M723.8 657.4L735.8 646M723.8 657.4L743.4 644.8M746.6 653.8L751 643.6M769.4 650.2L758.6 642.5M769.4 650.2L766.2 641.3M769.4 650.2L773.8 640.1M769.4 650.2L781.4 638.9M769.4 650.2L788.9 637.8M792.2 646.6L796.5 636.6M815 643L804.1 635.4M815 643L811.7 634.2M815 643L819.3 633M815 643L826.9 631.9M815 643L834.5 630.7M837.8 639.4L842 629.5" fill="none" stroke="#008c00" stroke-width="1"/></g><polygon points="653,530.5 875,503.5 789,704 576,704 587,680" fill="none" stroke="#008c00" stroke-width="1"/><g clip-path="url(#cK)"><polygon points="655,487 785.5,472.5 875,503.5 653,530.5" fill="#c4d800"/><path d="M563.5 497.2L653 528.2M569.3 496.6L658.8 527.6M575.2 495.9L664.7 526.9M581 495.2L670.5 526.2M586.9 494.6L676.4 525.6M592.7 493.9L682.2 525M598.6 493.3L688.1 524.3M604.4 492.6L693.9 523.7M610.2 492L699.7 523M616.1 491.3L705.6 522.4M621.9 490.7L711.4 521.7M627.8 490.1L717.3 521.1M633.6 489.4L723.1 520.4M639.4 488.8L728.9 519.8M645.3 488.1L734.8 519.1M651.1 487.4L740.6 518.5M657 486.8L746.5 517.8M662.8 486.1L752.3 517.1M668.7 485.5L758.2 516.5M674.5 484.9L764 515.9M680.3 484.2L769.8 515.2M686.2 483.6L775.7 514.6M692 482.9L781.5 513.9M697.9 482.2L787.4 513.2M703.7 481.6L793.2 512.6M709.6 480.9L799.1 511.9M715.4 480.3L804.9 511.3M721.2 479.6L810.7 510.7M727.1 479L816.6 510M732.9 478.4L822.4 509.4M738.8 477.7L828.3 508.7M744.6 477.1L834.1 508.1M750.4 476.4L839.9 507.4M756.3 475.8L845.8 506.8M762.1 475.1L851.6 506.1M768 474.4L857.5 505.4M773.8 473.8L863.3 504.8M779.7 473.1L869.2 504.1M785.5 472.5L875 503.5M563.5 497.2L785.5 472.5M567.6 498.6L789.6 473.9M571.6 500L793.6 475.3M575.7 501.4L797.7 476.7M579.8 502.8L801.8 478.1M583.8 504.2L805.8 479.5M587.9 505.7L809.9 481M592 507.1L814 482.4M596 508.5L818 483.8M600.1 509.9L822.1 485.2M604.2 511.3L826.2 486.6M608.2 512.7L830.2 488M612.3 514.1L834.3 489.4M616.4 515.5L838.4 490.8M620.5 516.9L842.5 492.2M624.5 518.3L846.5 493.6M628.6 519.7L850.6 495M632.7 521.2L854.7 496.5M636.7 522.6L858.7 497.9M640.8 524L862.8 499.3M644.9 525.4L866.9 500.7M648.9 526.8L870.9 502.1M653 528.2L875 503.5" fill="none" stroke="#008c00" stroke-width="1"/></g><polygon points="655,487 785.5,472.5 875,503.5 653,530.5" fill="none" stroke="#008c00" stroke-width="1"/><g clip-path="url(#cA)"><polygon points="670,253 796,237 785.5,472.5 655,487 662.8,380" fill="#e4ff00"/><polygon points="787,386 787,474 724,480 727,462 736,444 745,422 753,409 768,402 779,395" fill="#74ff00"/><path d="M670 253L655 487M676 252.2L661.2 486.3M682 251.5L667.4 485.6M688 250.7L673.6 484.9M694 250L679.9 484.2M700 249.2L686.1 483.5M706 248.4L692.3 482.9M712 247.7L698.5 482.2M718 246.9L704.7 481.5M724 246.1L710.9 480.8M730 245.4L717.1 480.1M736 244.6L723.4 479.4M742 243.9L729.6 478.7M748 243.1L735.8 478M754 242.3L742 477.3M760 241.6L748.2 476.6M766 240.8L754.4 476M772 240L760.6 475.3M778 239.3L766.9 474.6M784 238.5L773.1 473.9M790 237.8L779.3 473.2M796 237L785.5 472.5M670 253L796 237M669.6 259.2L795.7 243.2M669.2 265.3L795.4 249.4M668.8 271.5L795.2 255.6M668.4 277.6L794.9 261.8M668 283.8L794.6 268M667.6 289.9L794.3 274.2M667.2 296.1L794.1 280.4M666.8 302.3L793.8 286.6M666.4 308.4L793.5 292.8M666.1 314.6L793.2 299M665.7 320.7L793 305.2M665.3 326.9L792.7 311.4M664.9 333.1L792.4 317.6M664.5 339.2L792.1 323.8M664.1 345.4L791.9 330M663.7 351.5L791.6 336.2M663.3 357.7L791.3 342.4M662.9 363.8L791 348.6M662.5 370L790.8 354.8M662.1 376.2L790.5 360.9M661.7 382.3L790.2 367.1M661.3 388.5L789.9 373.3M660.9 394.6L789.6 379.5M660.5 400.8L789.4 385.7M660.1 406.9L789.1 391.9M659.7 413.1L788.8 398.1M659.3 419.3L788.5 404.3M658.9 425.4L788.3 410.5M658.6 431.6L788 416.7M658.2 437.7L787.7 422.9M657.8 443.9L787.4 429.1M657.4 450.1L787.2 435.3M657 456.2L786.9 441.5M656.6 462.4L786.6 447.7M656.2 468.5L786.3 453.9M655.8 474.7L786.1 460.1M655.4 480.8L785.8 466.3M655 487L785.5 472.5" fill="none" stroke="#008c00" stroke-width="1"/></g><polygon points="670,253 796,237 785.5,472.5 655,487 662.8,380" fill="none" stroke="#008c00" stroke-width="1"/><g clip-path="url(#cB)"><polygon points="796,237 893,225 879,460 875,503 785.5,472.5" fill="#e4ff00"/><polygon points="878,449 854,447 840,457 832,473 833,488 874,502 878,502" fill="#ffa800"/><polygon points="872.5,496 875,496 875,501 872.5,500" fill="#ff3900"/><path d="M797 204L785.5 472.5M801.5 205L789.6 473.9M805.9 205.9L793.6 475.3M810.4 206.9L797.7 476.7M814.8 207.8L801.8 478M819.3 208.8L805.8 479.4M823.7 209.7L809.9 480.8M828.2 210.7L814 482.2M832.6 211.6L818 483.6M837.1 212.6L822.1 485M841.5 213.5L826.2 486.4M846 214.5L830.2 487.8M850.5 215.5L834.3 489.1M854.9 216.4L838.4 490.5M859.4 217.4L842.5 491.9M863.8 218.3L846.5 493.3M868.3 219.3L850.6 494.7M872.7 220.2L854.7 496.1M877.2 221.2L858.7 497.5M881.6 222.1L862.8 498.8M886.1 223.1L866.9 500.2M890.5 224L870.9 501.6M895 225L875 503M797 204L895 225M796.7 210.7L894.5 231.9M796.4 217.4L894 238.9M796.1 224.1L893.5 245.8M795.9 230.8L893 252.8M795.6 237.6L892.5 259.8M795.3 244.3L892 266.7M795 251L891.5 273.6M794.7 257.7L891 280.6M794.4 264.4L890.5 287.6M794.1 271.1L890 294.5M793.8 277.8L889.5 301.4M793.5 284.6L889 308.4M793.3 291.3L888.5 315.4M793 298L888 322.3M792.7 304.7L887.5 329.2M792.4 311.4L887 336.2M792.1 318.1L886.5 343.1M791.8 324.8L886 350.1M791.5 331.5L885.5 357M791.2 338.2L885 364M791 345L884.5 371M790.7 351.7L884 377.9M790.4 358.4L883.5 384.9M790.1 365.1L883 391.8M789.8 371.8L882.5 398.8M789.5 378.5L882 405.7M789.2 385.2L881.5 412.6M789 391.9L881 419.6M788.7 398.7L880.5 426.5M788.4 405.4L880 433.5M788.1 412.1L879.5 440.5M787.8 418.8L879 447.4M787.5 425.5L878.5 454.4M787.2 432.2L878 461.3M786.9 438.9L877.5 468.2M786.6 445.6L877 475.2M786.4 452.4L876.5 482.2M786.1 459.1L876 489.1M785.8 465.8L875.5 496.1M785.5 472.5L875 503" fill="none" stroke="#008c00" stroke-width="1"/></g><polygon points="796,237 893,225 879,460 875,503 785.5,472.5" fill="none" stroke="#008c00" stroke-width="1"/><g clip-path="url(#cW)"><polygon points="893,225 1246,180.7 1230.5,417 879,460" fill="#e4ff00"/><polygon points="879,441 945,441 945,444 975,444 975,438.5 1022,438.5 1022,433 1050,433 1050,429 1079,429 1079,437 879,461" fill="#74ff00"/><polygon points="1135,421.3 1140.4,421.3 1140.4,412.5 1158,412.5 1158,403.7 1173.8,403.7 1173.8,409 1180,409 1180,415 1184.3,415 1184.3,423 1135,429" fill="#74ff00"/><path d="M893 225L879 460M899.4 224.2L885.3 459.2M905.7 223.4L891.7 458.5M912.1 222.6L898 457.7M918.4 221.8L904.3 456.9M924.8 221L910.6 456.1M893 225L924.8 221M892.6 231.9L924.4 227.9M892.2 238.8L923.9 234.8M891.8 245.7L923.5 241.8M891.4 252.6L923.1 248.7M890.9 259.6L922.7 255.6M890.5 266.5L922.3 262.5M890.1 273.4L921.9 269.4M889.7 280.3L921.4 276.3M889.3 287.2L921 283.2M888.9 294.1L920.6 290.2M888.5 301L920.2 297.1M888.1 307.9L919.8 304M887.6 314.9L919.4 310.9M887.2 321.8L918.9 317.8M886.8 328.7L918.5 324.7M886.4 335.6L918.1 331.7M886 342.5L917.7 338.6M885.6 349.4L917.3 345.5M885.2 356.3L916.9 352.4M884.8 363.2L916.5 359.3M884.4 370.1L916 366.2M883.9 377.1L915.6 373.1M883.5 384L915.2 380.1M883.1 390.9L914.8 387M882.7 397.8L914.4 393.9M882.3 404.7L914 400.8M881.9 411.6L913.5 407.7M881.5 418.5L913.1 414.6M881.1 425.4L912.7 421.6M880.6 432.4L912.3 428.5M880.2 439.3L911.9 435.4M879.8 446.2L911.5 442.3M879.4 453.1L911.1 449.2M879 460L910.6 456.1M934.7 219.8L920.5 454.9M945.4 218.4L931.2 453.6M956.1 217.1L941.9 452.3M966.9 215.7L952.5 451M977.6 214.4L963.2 449.7M988.3 213L973.9 448.4M999.1 211.7L984.6 447.1M1009.8 210.3L995.3 445.8M1020.5 209L1006 444.5M1031.3 207.6L1016.7 443.2M1042 206.3L1027.4 441.8M1052.8 205L1038.1 440.5M1063.5 203.6L1048.8 439.2M1074.2 202.3L1059.5 437.9M1085 200.9L1070.1 436.6M1095.7 199.6L1080.8 435.3M1106.4 198.2L1091.5 434M1117.2 196.9L1102.2 432.7M1127.9 195.5L1112.9 431.4M1138.6 194.2L1123.6 430.1M1149.4 192.8L1134.3 428.8M1160.1 191.5L1145 427.5M1170.8 190.1L1155.7 426.2M1181.6 188.8L1166.4 424.8M1192.3 187.4L1177 423.5M1203.1 186.1L1187.7 422.2M1213.8 184.7L1198.4 420.9M1224.5 183.4L1209.1 419.6M1235.3 182L1219.8 418.3M1246 180.7L1230.5 417M934.7 219.8L1246 180.7M933.8 233.6L1245.1 194.6M933 247.4L1244.2 208.5M932.2 261.3L1243.3 222.4M931.3 275.1L1242.4 236.3M930.5 288.9L1241.4 250.2M929.7 302.8L1240.5 264.1M928.8 316.6L1239.6 278M928 330.4L1238.7 291.9M927.1 344.3L1237.8 305.8M926.3 358.1L1236.9 319.7M925.5 371.9L1236 333.6M924.6 385.8L1235.1 347.5M923.8 399.6L1234.1 361.4M923 413.4L1233.2 375.3M922.1 427.3L1232.3 389.2M921.3 441.1L1231.4 403.1M920.5 454.9L1230.5 417M924.8 221L934.7 219.8M924.4 227.9L929.3 227.3M929.7 220.4L928.9 234.2M933 247.4L924 233.1M933 247.4L923.4 243.5M933 247.4L922.8 253.9M923.9 234.8L933.8 233.6M923.5 241.8L928.5 241.1M933 247.4L924 233.1M933 247.4L923.4 243.5M933 247.4L922.8 253.9M923.1 248.7L933 247.4M922.7 255.6L927.6 255M922.3 262.5L932.2 261.3M921.9 269.4L926.8 268.8M927.2 261.9L926.4 275.7M921.4 276.3L931.3 275.1M921 283.2L926 282.6M926.4 275.7L925.5 289.6M929.7 302.8L920.7 288.4M929.7 302.8L920.1 298.8M929.7 302.8L919.5 309.2M920.6 290.2L930.5 288.9M920.2 297.1L925.1 296.5M929.7 302.8L920.7 288.4M929.7 302.8L920.1 298.8M929.7 302.8L919.5 309.2M919.8 304L929.7 302.8M919.4 310.9L924.3 310.3M918.9 317.8L928.8 316.6M918.5 324.7L923.5 324.1M923.9 317.2L923.1 331M918.1 331.7L928 330.4M917.7 338.6L922.6 338M923.1 331L922.2 344.9M926.3 358.1L917.4 343.8M926.3 358.1L916.8 354.1M926.3 358.1L916.1 364.5M917.3 345.5L927.1 344.3M916.9 352.4L921.8 351.8M926.3 358.1L917.4 343.8M926.3 358.1L916.8 354.1M926.3 358.1L916.1 364.5M916.5 359.3L926.3 358.1M916 366.2L921 365.6M915.6 373.1L925.5 371.9M915.2 380.1L920.1 379.5M920.6 372.5L919.7 386.4M914.8 387L924.6 385.8M914.4 393.9L919.3 393.3M919.7 386.4L918.9 400.2M923 413.4L914.1 399.1M923 413.4L913.4 409.5M923 413.4L912.8 419.8M914 400.8L923.8 399.6M913.5 407.7L918.5 407.1M923 413.4L914.1 399.1M923 413.4L913.4 409.5M923 413.4L912.8 419.8M913.1 414.6L923 413.4M912.7 421.6L917.6 420.9M912.3 428.5L922.1 427.3M911.9 435.4L916.8 434.8M917.2 427.9L916.4 441.7M911.5 442.3L921.3 441.1M911.1 449.2L916 448.6M916.4 441.7L915.6 455.5" fill="none" stroke="#008c00" stroke-width="1"/></g><polygon points="893,225 1246,180.7 1230.5,417 879,460" fill="none" stroke="#008c00" stroke-width="1"/><g clip-path="url(#cBF)"><polygon points="879,460 1230.5,417 1320,448 875,504" fill="#c4d800"/><polygon points="893,458.5 1184,421.5 1249,456.5 1012,487 960,481 900,468" fill="#58cc00"/><polygon points="1184,421.5 1231,416 1321,448 1249,456.5" fill="#b8cc00"/><path d="M785 471.5L875 504M790.8 470.8L880.7 503.3M796.5 470.1L886.5 502.6M802.3 469.4L892.2 501.8M808 468.7L898 501.1M813.8 468L903.7 500.4M819.5 467.3L909.5 499.7M825.3 466.6L915.2 498.9M831 465.9L921 498.2M836.8 465.2L926.7 497.5M842.5 464.5L932.5 496.8M848.3 463.8L938.2 496M854.1 463.1L944 495.3M859.8 462.3L949.7 494.6M865.6 461.6L955.5 493.9M871.3 460.9L961.2 493.1M877.1 460.2L967 492.4M882.8 459.5L972.7 491.7M888.6 458.8L978.5 491M894.3 458.1L984.2 490.3M900.1 457.4L990 489.5M905.8 456.7L995.7 488.8M911.6 456L1001.5 488.1M917.4 455.3L1007.2 487.4M923.1 454.6L1013 486.6M923.1 454.6L1013 486.6M934.1 453.3L1023.9 485.3M945.1 451.9L1034.9 483.9M956 450.6L1045.8 482.5M967 449.2L1056.8 481.1M978 447.9L1067.8 479.7M989 446.5L1078.7 478.4M1000 445.2L1089.7 477M1010.9 443.9L1100.7 475.6M1021.9 442.5L1111.6 474.2M1032.9 441.2L1122.6 472.8M1043.9 439.8L1133.6 471.5M1054.8 438.5L1144.5 470.1M1065.8 437.1L1155.5 468.7M1076.8 435.8L1166.5 467.3M1087.8 434.5L1177.4 465.9M1098.8 433.1L1188.4 464.6M1109.7 431.8L1199.4 463.2M1120.7 430.4L1210.3 461.8M1131.7 429.1L1221.3 460.4M1142.7 427.7L1232.3 459M1153.7 426.4L1243.2 457.7M1164.6 425.1L1254.2 456.3M1175.6 423.7L1265.2 454.9M1186.6 422.4L1276.1 453.5M1197.6 421L1287.1 452.1M1208.5 419.7L1298.1 450.8M1219.5 418.3L1309 449.4M1230.5 417L1320 448M785 471.5L923.1 454.6M789.1 473L927.2 456.1M793.2 474.5L931.3 457.5M797.3 475.9L935.4 459M801.4 477.4L939.4 460.4M805.5 478.9L943.5 461.9M809.5 480.4L947.6 463.3M813.6 481.8L951.7 464.8M817.7 483.3L955.8 466.3M821.8 484.8L959.9 467.7M825.9 486.3L963.9 469.2M830 487.8L968 470.6M834.1 489.2L972.1 472.1M838.2 490.7L976.2 473.5M842.3 492.2L980.3 475M846.4 493.7L984.4 476.4M850.5 495.1L988.4 477.9M854.5 496.6L992.5 479.4M858.6 498.1L996.6 480.8M862.7 499.6L1000.7 482.3M866.8 501L1004.8 483.7M870.9 502.5L1008.9 485.2M875 504L1013 486.6M923.1 454.6L1230.5 417M930.6 457.3L1238 419.6M938.1 459.9L1245.4 422.2M945.6 462.6L1252.9 424.8M953.1 465.3L1260.3 427.3M960.5 468L1267.8 429.9M968 470.6L1275.2 432.5M975.5 473.3L1282.7 435.1M983 476L1290.2 437.7M990.5 478.6L1297.6 440.2M998 481.3L1305.1 442.8M1005.5 484L1312.5 445.4M1013 486.6L1320 448" fill="none" stroke="#008c00" stroke-width="1"/></g><polygon points="879,460 1230.5,417 1320,448 875,504" fill="none" stroke="#008c00" stroke-width="1"/><g clip-path="url(#cT)"><polygon points="559,212 781,184 803,192 1247.5,136 1340,168.5 1246,180.7 893,225 670,253" fill="#ccdc00"/><polygon points="931.9,175.8 1247.5,136 1339.5,168.7 1023.9,208.5" fill="#c0d400"/><polygon points="1186,143.8 1203,141.6 1291,174.8 1265,178.3" fill="#e08800"/><path d="M559 212L670 253M564.8 211.3L675.8 252.3M570.7 210.5L681.7 251.5M576.5 209.8L687.5 250.8M582.4 209.1L693.4 250.1M588.2 208.3L699.2 249.3M594.1 207.6L705.1 248.6M599.9 206.8L710.9 247.8M605.7 206.1L716.7 247.1M611.6 205.4L722.6 246.4M617.4 204.6L728.4 245.6M623.3 203.9L734.3 244.9M629.1 203.2L740.1 244.2M634.9 202.4L745.9 243.4M640.8 201.7L751.8 242.7M646.6 200.9L757.6 241.9M652.5 200.2L763.5 241.2M658.3 199.5L769.3 240.5M664.2 198.7L775.2 239.7M670 198L781 239M675.8 197.3L786.8 238.3M681.7 196.5L792.7 237.5M687.5 195.8L798.5 236.8M693.4 195.1L804.4 236.1M699.2 194.3L810.2 235.3M705.1 193.6L816.1 234.6M710.9 192.8L821.9 233.8M716.7 192.1L827.7 233.1M722.6 191.4L833.6 232.4M728.4 190.6L839.4 231.6M734.3 189.9L845.3 230.9M740.1 189.2L851.1 230.2M745.9 188.4L856.9 229.4M751.8 187.7L862.8 228.7M757.6 186.9L868.6 227.9M763.5 186.2L874.5 227.2M769.3 185.5L880.3 226.5M775.2 184.7L886.2 225.7M781 184L892 225M559 212L781 184M563 213.5L785 185.5M566.9 214.9L788.9 186.9M570.9 216.4L792.9 188.4M574.9 217.9L796.9 189.9M578.8 219.3L800.8 191.3M582.8 220.8L804.8 192.8M586.8 222.2L808.8 194.2M590.7 223.7L812.7 195.7M594.7 225.2L816.7 197.2M598.6 226.6L820.6 198.6M602.6 228.1L824.6 200.1M606.6 229.6L828.6 201.6M610.5 231L832.5 203M614.5 232.5L836.5 204.5M618.5 234L840.5 206M622.4 235.4L844.4 207.4M626.4 236.9L848.4 208.9M630.4 238.4L852.4 210.4M634.3 239.8L856.3 211.8M638.3 241.3L860.3 213.3M642.2 242.8L864.2 214.8M646.2 244.2L868.2 216.2M650.2 245.7L872.2 217.7M654.1 247.1L876.1 219.1M658.1 248.6L880.1 220.6M662.1 250.1L884.1 222.1M666 251.5L888 223.5M670 253L892 225M803 192L895 224.7M808.9 191.3L900.9 224M814.7 190.5L906.7 223.2M820.6 189.8L912.6 222.5M826.4 189L918.4 221.7M832.3 188.3L924.3 221M838.2 187.6L930.2 220.3M844 186.8L936 219.5M849.9 186.1L941.9 218.8M855.7 185.4L947.7 218.1M861.6 184.6L953.6 217.3M867.5 183.9L959.5 216.6M873.3 183.1L965.3 215.8M879.2 182.4L971.2 215.1M885 181.7L977 214.4M890.9 180.9L982.9 213.6M896.7 180.2L988.7 212.9M902.6 179.5L994.6 212.2M908.5 178.7L1000.5 211.4M914.3 178L1006.3 210.7M920.2 177.2L1012.2 209.9M926 176.5L1018 209.2M931.9 175.8L1023.9 208.5M803 192L931.9 175.8M807.2 193.5L936.1 177.2M811.4 195L940.3 178.7M815.5 196.5L944.5 180.2M819.7 197.9L948.6 181.7M823.9 199.4L952.8 183.2M828.1 200.9L957 184.7M832.3 202.4L961.2 186.2M836.5 203.9L965.4 187.7M840.6 205.4L969.5 189.1M844.8 206.9L973.7 190.6M849 208.3L977.9 192.1M853.2 209.8L982.1 193.6M857.4 211.3L986.3 195.1M861.5 212.8L990.5 196.6M865.7 214.3L994.6 198.1M869.9 215.8L998.8 199.5M874.1 217.3L1003 201M878.3 218.8L1007.2 202.5M882.5 220.2L1011.4 204M886.6 221.7L1015.5 205.5M890.8 223.2L1019.7 207M895 224.7L1023.9 208.5M931.9 175.8L1023.9 208.5M942.8 174.4L1034.8 207.1M953.7 173L1045.7 205.7M964.6 171.6L1056.6 204.3M975.4 170.3L1067.4 203M986.3 168.9L1078.3 201.6M997.2 167.5L1089.2 200.2M1008.1 166.2L1100.1 198.9M1019 164.8L1111 197.5M1029.8 163.4L1121.8 196.1M1040.7 162L1132.7 194.7M1051.6 160.7L1143.6 193.4M1062.5 159.3L1154.5 192M1073.4 157.9L1165.4 190.6M1084.3 156.6L1176.3 189.3M1095.1 155.2L1187.1 187.9M1106 153.8L1198 186.5M1116.9 152.5L1208.9 185.2M1127.8 151.1L1219.8 183.8M1138.7 149.7L1230.7 182.4M1149.6 148.3L1241.6 181M1160.4 147L1252.4 179.7M1171.3 145.6L1263.3 178.3M1182.2 144.2L1274.2 176.9M1193.1 142.9L1285.1 175.6M1204 141.5L1296 174.2M1214.9 140.1L1306.9 172.8M1225.7 138.7L1317.7 171.4M1236.6 137.4L1328.6 170.1M1247.5 136L1339.5 168.7M931.9 175.8L1247.5 136M938 177.9L1253.6 138.2M944.2 180.1L1259.8 140.4M950.3 182.3L1265.9 142.5M956.4 184.5L1272 144.7M962.6 186.7L1278.2 146.9M968.7 188.8L1284.3 149.1M974.8 191L1290.4 151.3M981 193.2L1296.6 153.4M987.1 195.4L1302.7 155.6M993.2 197.6L1308.8 157.8M999.4 199.7L1315 160M1005.5 201.9L1321.1 162.2M1011.6 204.1L1327.2 164.3M1017.8 206.3L1333.4 166.5M1023.9 208.5L1339.5 168.7" fill="none" stroke="#008c00" stroke-width="1"/></g><polygon points="559,212 781,184 803,192 1247.5,136 1340,168.5 1246,180.7 893,225 670,253" fill="none" stroke="#008c00" stroke-width="1"/></g><g shape-rendering="crispEdges"><rect x="276" y="131" width="30" height="19" fill="#ff3900"/><rect x="276" y="151" width="30" height="19" fill="#ffa800"/><rect x="276" y="171" width="30" height="19" fill="#e4ff00"/><rect x="276" y="191" width="30" height="19" fill="#74ff00"/><rect x="276" y="211" width="30" height="19" fill="#00ff00"/><rect x="276" y="231" width="30" height="19" fill="#00ff74"/><rect x="276" y="251" width="30" height="19" fill="#00ffe4"/><rect x="276" y="271" width="30" height="19" fill="#00a8ff"/><rect x="276" y="291" width="30" height="19" fill="#0038ff"/></g><g font-family="Liberation Mono,monospace" font-size="15" fill="#000"><text x="276.2" y="114.7">Principal Stress 2, Midplane</text><text x="317" y="134.6">3.788E+08</text><text x="317" y="154.6">2.001E+08</text><text x="317" y="174.6">2.139E+07</text><text x="317" y="194.6">-1.573E+08</text><text x="317" y="214.6">-3.36E+08</text><text x="317" y="234.6">-5.147E+08</text><text x="317" y="254.6">-6.933E+08</text><text x="317" y="274.6">-8.72E+08</text><text x="317" y="294.6">-1.051E+09</text><text x="317" y="314.6">-1.229E+09</text></g><rect x="759" y="101" width="71" height="23" rx="2" fill="#dcdcdc"/><rect x="782.5" y="101.5" width="22" height="21" fill="#e6e2dc" stroke="#0078d7" stroke-width="1"/><g stroke="#222" stroke-width="1" stroke-linejoin="round"><polygon points="763.5,109 767.5,105.5 776.0,105.5 772.0,109" fill="#dcdcdc"/><polygon points="772.0,109 776.0,105.5 776.0,114 772.0,118" fill="#dcdcdc"/><rect x="763.5" y="109" width="8.5" height="9" fill="#dcdcdc"/></g><path d="M772.0 106.5 L774.0 109 L772.0 111.5 L770.0 109Z" fill="#0000ff"/><g stroke="#222" stroke-width="1" stroke-linejoin="round"><polygon points="786.5,109 790.5,105.5 799.0,105.5 795.0,109" fill="#dcdcdc"/><polygon points="795.0,109 799.0,105.5 799.0,114 795.0,118" fill="#dcdcdc"/><rect x="786.5" y="109" width="8.5" height="9" fill="#0000ff"/></g><g stroke="#222" stroke-width="1" stroke-linejoin="round"><polygon points="809.5,109 813.5,105.5 822.0,105.5 818.0,109" fill="#0000ff"/><polygon points="818.0,109 822.0,105.5 822.0,114 818.0,118" fill="#0000ff"/><rect x="809.5" y="109" width="8.5" height="9" fill="#0000ff"/></g><g><path d="M1302.5 631 L1308 625 L1313 629 L1312.5 633 L1308 637Z" fill="#00f0f0"/><path d="M1304.6 650 L1306.6 621" stroke="#00ff00" stroke-width="4.200"/><path d="M1306.9 612.500 L1312.300 623.500 H1301.300Z" fill="#00ff00"/><path d="M1304.500 649.500 L1288 643.500" stroke="#ff0000" stroke-width="4"/><path d="M1280.500 641 L1284 638.500 L1291 639.500 L1293 646 L1287 648.500 L1282.500 645.500Z" fill="#ff0000"/><path d="M1283 641 L1291 645" stroke="#c00000" stroke-width="1.500"/><path d="M1305 650 L1324 647" stroke="#0000ff" stroke-width="4"/><path d="M1334.500 646 L1326 640.500 L1321.500 647 L1326.500 653Z" fill="#0000ff"/></g><g font-family="Liberation Sans,sans-serif" font-weight="bold" font-size="12.500"><text x="1302.300" y="610" fill="#00ff00">Y</text><text x="1271.500" y="644.300" fill="#ff0000">X</text><text x="1335" y="650.300" fill="#0000ff">Z</text></g></svg>
<div class="abs" style="left:0;top:706px;width:1366px;height:1px;background:#d7d7d7"></div>
<div id="status" class="abs"><span>Solved at 2017-10-01T11:38:39.33</span></div>
</body></html>
